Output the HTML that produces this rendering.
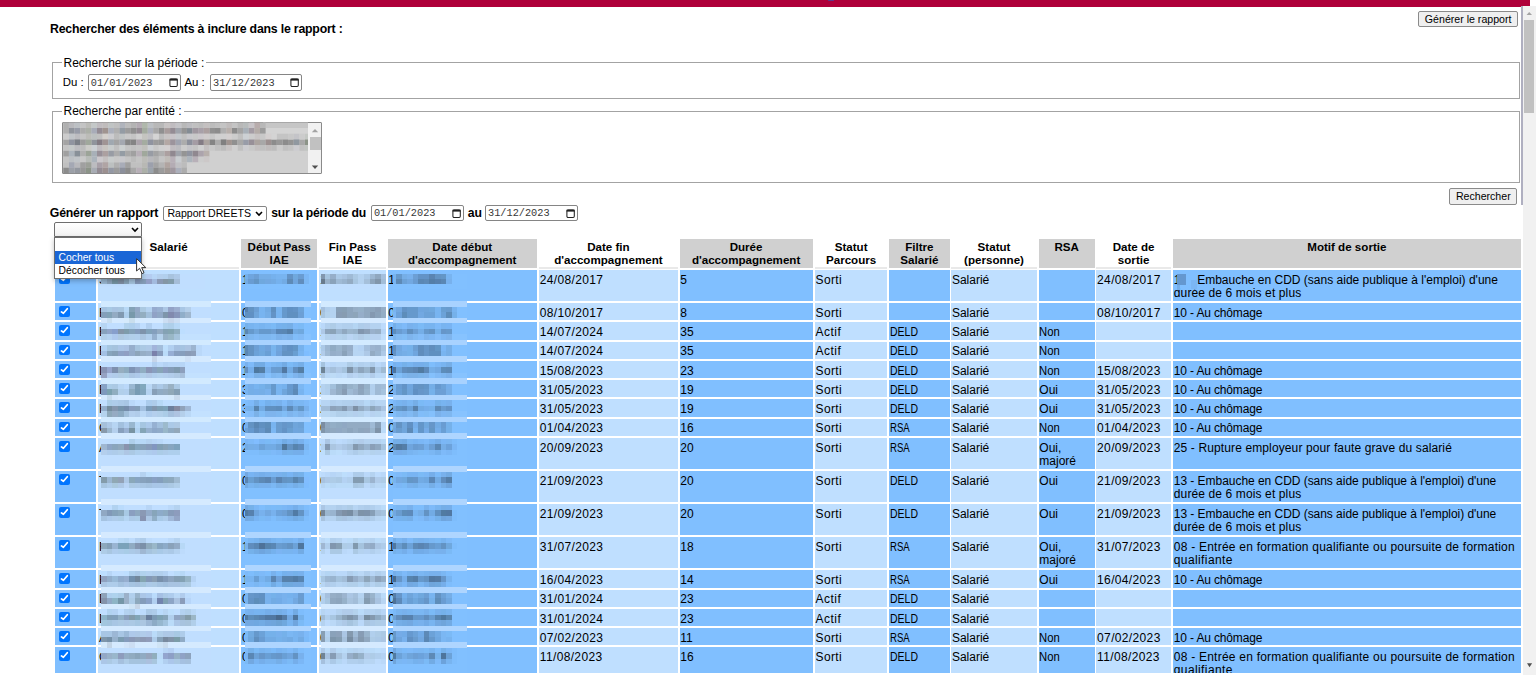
<!DOCTYPE html><html><head><meta charset="utf-8"><style>
html,body{margin:0;padding:0;background:#fff;width:1536px;height:675px;overflow:hidden;position:relative;font-family:"Liberation Sans",sans-serif;color:#000}
.ab{position:absolute}
.t{position:absolute;white-space:nowrap;font-size:12px;line-height:13.3px}
.th{position:absolute;font-weight:bold;font-size:11.6px;line-height:13.2px;text-align:center;white-space:nowrap}
.btn{position:absolute;box-sizing:border-box;background:#efefef;border:1px solid #8a8a8a;border-radius:2px;font-size:10.6px;color:#000;text-align:center}
.inp{position:absolute;box-sizing:border-box;background:#fff;border:1px solid #858585;border-radius:2px}
.mono{position:absolute;font-family:"Liberation Mono",monospace;font-size:10.27px;white-space:nowrap;color:#383838}
.fs{position:absolute;box-sizing:border-box;border:1.5px solid #a3a3a3;}
.lg{position:absolute;font-size:12px;white-space:nowrap;background:#fff;padding:0 2px}
.cb{position:absolute;width:10.7px;height:10.6px;background:#0075ff;border-radius:2px}
</style></head><body>
<div class="ab" style="left:0;top:0;width:1529.7px;height:6.6px;background:#af003a"></div>
<div class="ab" style="left:1522.8px;top:6px;width:13.2px;height:669px;background:#f1f1f1"></div>
<div class="ab" style="left:1521px;top:6.3px;width:2px;height:198.5px;background:#afafc0"></div>
<div class="ab" style="left:1524.2px;top:20px;width:10px;height:93px;background:#c1c1c1"></div>
<svg class="ab" style="left:1522px;top:6px" width="14" height="669"><path d="M4.6 8.9 L10 8.9 L7.2 6 Z" fill="#a3a3a3"/><path d="M5 657.3 L10.1 657.3 L7.5 661.2 Z" fill="#505050"/></svg>
<div class="ab" style="left:50px;top:21.7px;font-weight:bold;font-size:12.3px;letter-spacing:-0.2px;white-space:nowrap">Rechercher des éléments à inclure dans le rapport :</div>
<div class="btn" style="left:1418.3px;top:10.6px;width:99.7px;height:16.4px;line-height:14.4px">Générer le rapport</div>
<div class="fs" style="left:52px;top:62.3px;width:1468px;height:36.6px"></div>
<div class="lg" style="left:61.5px;top:56.3px;line-height:14px">Recherche sur la période :</div>
<div class="ab" style="left:62.8px;top:76px;font-size:11.4px;white-space:nowrap">Du :</div>
<div class="inp" style="left:87.5px;top:74.2px;width:93.8px;height:16.6px"></div>
<div class="ab" style="left:184.5px;top:76px;font-size:11.4px;white-space:nowrap">Au :</div>
<div class="inp" style="left:209.8px;top:74.3px;width:92.5px;height:16.3px"></div>
<div class="mono" style="left:90.8px;top:76.5px">01/01/2023</div>
<svg class="ab" style="left:168.5px;top:77.5px" width="10" height="10"><rect x="0.9" y="0.9" width="7.4" height="7.6" rx="1.2" fill="none" stroke="#222" stroke-width="1.05"/><rect x="0.6" y="0.6" width="8" height="2" fill="#222"/></svg>
<div class="mono" style="left:213px;top:76.5px">31/12/2023</div>
<svg class="ab" style="left:289.8px;top:77.5px" width="10" height="10"><rect x="0.9" y="0.9" width="7.4" height="7.6" rx="1.2" fill="none" stroke="#222" stroke-width="1.05"/><rect x="0.6" y="0.6" width="8" height="2" fill="#222"/></svg>
<div class="fs" style="left:52px;top:110.5px;width:1467.5px;height:72.5px"></div>
<div class="lg" style="left:61.5px;top:104.2px;line-height:14px">Recherche par entité :</div>
<div class="inp" style="left:62.3px;top:122.3px;width:260.2px;height:52px;background:#d0d0d0;border-color:#8a8a8a;border-radius:1px"></div>
<svg class="ab" style="left:0;top:0" width="400" height="200"><path fill="#c6c6c6" d="M263 122.4h45v5.68h-45z"/><path fill="#d4d4d4" d="M263 128.08h45v5.68h-45z"/><path fill="#b0b0b0" d="M63.3 122.4h5.62v5.68h-5.62zM63.3 128.1h5.62v5.68h-5.62zM113.9 128.1h5.62v5.68h-5.62zM220.7 128.1h5.62v5.68h-5.62zM80.2 150.8h5.62v5.68h-5.62zM158.8 150.8h5.62v5.68h-5.62zM113.9 162.2h5.62v5.68h-5.62z"/><path fill="#b8b8bc" d="M68.9 122.4h5.62v5.68h-5.62zM147.6 156.5h5.62v5.68h-5.62zM74.5 162.2h5.62v5.68h-5.62z"/><path fill="#bcc0c4" d="M74.5 122.4h5.62v5.68h-5.62zM147.6 122.4h5.62v5.68h-5.62zM68.9 156.5h5.62v5.68h-5.62z"/><path fill="#c4c4c4" d="M80.2 122.4h5.62v5.68h-5.62zM220.7 122.4h5.62v5.68h-5.62zM231.9 122.4h5.62v5.68h-5.62zM80.2 133.8h5.62v5.68h-5.62zM130.7 133.8h5.62v5.68h-5.62zM276.9 133.8h5.62v5.68h-5.62zM282.5 133.8h5.62v5.68h-5.62zM63.3 145.1h5.62v5.68h-5.62zM125.1 145.1h5.62v5.68h-5.62zM136.4 145.1h5.62v5.68h-5.62zM192.6 145.1h5.62v5.68h-5.62zM288.1 145.1h5.62v5.68h-5.62zM63.3 156.5h5.62v5.68h-5.62zM125.1 156.5h5.62v5.68h-5.62zM136.4 156.5h5.62v5.68h-5.62zM158.8 156.5h5.62v5.68h-5.62z"/><path fill="#bcbcb8" d="M85.8 122.4h5.62v5.68h-5.62zM85.8 133.8h5.62v5.68h-5.62zM142.0 156.5h5.62v5.68h-5.62z"/><path fill="#c4c8c8" d="M91.4 122.4h5.62v5.68h-5.62zM68.9 145.1h5.62v5.68h-5.62z"/><path fill="#c0bcc0" d="M97.0 122.4h5.62v5.68h-5.62zM170.1 122.4h5.62v5.68h-5.62zM97.0 145.1h5.62v5.68h-5.62zM170.1 145.1h5.62v5.68h-5.62z"/><path fill="#c0bcbc" d="M102.6 122.4h5.62v5.68h-5.62zM226.3 122.4h5.62v5.68h-5.62zM265.6 145.1h5.62v5.68h-5.62z"/><path fill="#c0c4c4" d="M108.3 122.4h5.62v5.68h-5.62zM119.5 133.8h5.62v5.68h-5.62z"/><path fill="#c0c0c0" d="M113.9 122.4h5.62v5.68h-5.62zM192.6 122.4h5.62v5.68h-5.62zM215.0 122.4h5.62v5.68h-5.62zM97.0 133.8h5.62v5.68h-5.62zM181.3 133.8h5.62v5.68h-5.62zM237.5 133.8h5.62v5.68h-5.62zM113.9 145.1h5.62v5.68h-5.62zM130.7 145.1h5.62v5.68h-5.62zM215.0 145.1h5.62v5.68h-5.62zM237.5 145.1h5.62v5.68h-5.62zM260.0 145.1h5.62v5.68h-5.62zM282.5 145.1h5.62v5.68h-5.62zM299.3 145.1h5.62v5.68h-5.62zM63.3 162.2h5.62v5.68h-5.62zM130.7 162.2h5.62v5.68h-5.62zM136.4 162.2h5.62v5.68h-5.62z"/><path fill="#b0b4bc" d="M119.5 122.4h5.62v5.68h-5.62z"/><path fill="#bcbcbc" d="M125.1 122.4h5.62v5.68h-5.62zM198.2 122.4h5.62v5.68h-5.62zM209.4 122.4h5.62v5.68h-5.62zM113.9 133.8h5.62v5.68h-5.62zM158.8 133.8h5.62v5.68h-5.62zM80.2 145.1h5.62v5.68h-5.62zM220.7 145.1h5.62v5.68h-5.62zM271.2 145.1h5.62v5.68h-5.62zM130.7 156.5h5.62v5.68h-5.62zM181.3 162.2h5.62v5.68h-5.62z"/><path fill="#b4b4b4" d="M130.7 122.4h5.62v5.68h-5.62zM153.2 156.5h5.62v5.68h-5.62zM158.8 162.2h5.62v5.68h-5.62z"/><path fill="#b4acb4" d="M136.4 122.4h5.62v5.68h-5.62zM170.1 162.2h5.62v5.68h-5.62z"/><path fill="#b0b8ac" d="M142.0 122.4h5.62v5.68h-5.62z"/><path fill="#b8b8b8" d="M153.2 122.4h5.62v5.68h-5.62zM158.8 122.4h5.62v5.68h-5.62zM181.3 122.4h5.62v5.68h-5.62zM237.5 122.4h5.62v5.68h-5.62zM260.0 122.4h5.62v5.68h-5.62zM181.3 156.5h5.62v5.68h-5.62z"/><path fill="#c8c4c4" d="M164.5 122.4h5.62v5.68h-5.62zM164.5 133.8h5.62v5.68h-5.62zM254.4 133.8h5.62v5.68h-5.62zM226.3 145.1h5.62v5.68h-5.62z"/><path fill="#c4c4c8" d="M175.7 122.4h5.62v5.68h-5.62zM293.7 133.8h5.62v5.68h-5.62zM186.9 145.1h5.62v5.68h-5.62z"/><path fill="#bcbcc0" d="M186.9 122.4h5.62v5.68h-5.62zM74.5 133.8h5.62v5.68h-5.62zM74.5 145.1h5.62v5.68h-5.62zM175.7 145.1h5.62v5.68h-5.62zM91.4 162.2h5.62v5.68h-5.62z"/><path fill="#c4c0c0" d="M203.8 122.4h5.62v5.68h-5.62zM203.8 145.1h5.62v5.68h-5.62zM254.4 145.1h5.62v5.68h-5.62zM102.6 156.5h5.62v5.68h-5.62z"/><path fill="#b8bcbc" d="M243.1 122.4h5.62v5.68h-5.62z"/><path fill="#c8c4c8" d="M248.8 122.4h5.62v5.68h-5.62zM170.1 133.8h5.62v5.68h-5.62z"/><path fill="#b8acac" d="M254.4 122.4h5.62v5.68h-5.62z"/><path fill="#90949c" d="M68.9 128.1h5.62v5.68h-5.62zM91.4 139.4h5.62v5.68h-5.62z"/><path fill="#989ca8" d="M74.5 128.1h5.62v5.68h-5.62zM243.1 139.4h5.62v5.68h-5.62z"/><path fill="#acacac" d="M80.2 128.1h5.62v5.68h-5.62zM181.3 139.4h5.62v5.68h-5.62zM215.0 139.4h5.62v5.68h-5.62zM113.9 150.8h5.62v5.68h-5.62zM181.3 167.8h5.62v5.36h-5.62z"/><path fill="#acb0a8" d="M85.8 128.1h5.62v5.68h-5.62zM142.0 167.8h5.62v5.36h-5.62z"/><path fill="#a8acb8" d="M91.4 128.1h5.62v5.68h-5.62zM119.5 162.2h5.62v5.68h-5.62z"/><path fill="#948c94" d="M97.0 128.1h5.62v5.68h-5.62zM136.4 128.1h5.62v5.68h-5.62zM170.1 128.1h5.62v5.68h-5.62zM97.0 167.8h5.62v5.36h-5.62z"/><path fill="#a09490" d="M102.6 128.1h5.62v5.68h-5.62zM226.3 139.4h5.62v5.68h-5.62z"/><path fill="#acb0bc" d="M108.3 128.1h5.62v5.68h-5.62zM147.6 128.1h5.62v5.68h-5.62zM175.7 167.8h5.62v5.36h-5.62z"/><path fill="#949ca4" d="M119.5 128.1h5.62v5.68h-5.62zM119.5 150.8h5.62v5.68h-5.62z"/><path fill="#9c9c9c" d="M125.1 128.1h5.62v5.68h-5.62zM260.0 128.1h5.62v5.68h-5.62zM80.2 139.4h5.62v5.68h-5.62zM153.2 139.4h5.62v5.68h-5.62zM113.9 167.8h5.62v5.36h-5.62zM158.8 167.8h5.62v5.36h-5.62z"/><path fill="#909090" d="M130.7 128.1h5.62v5.68h-5.62zM158.8 128.1h5.62v5.68h-5.62zM209.4 128.1h5.62v5.68h-5.62zM231.9 139.4h5.62v5.68h-5.62z"/><path fill="#a4aca0" d="M142.0 128.1h5.62v5.68h-5.62zM142.0 139.4h5.62v5.68h-5.62z"/><path fill="#a8a8a8" d="M153.2 128.1h5.62v5.68h-5.62zM237.5 139.4h5.62v5.68h-5.62zM260.0 139.4h5.62v5.68h-5.62zM299.3 139.4h5.62v5.68h-5.62zM125.1 150.8h5.62v5.68h-5.62zM130.7 167.8h5.62v5.36h-5.62z"/><path fill="#a89c9c" d="M164.5 128.1h5.62v5.68h-5.62z"/><path fill="#a0a4ac" d="M175.7 128.1h5.62v5.68h-5.62zM175.7 150.8h5.62v5.68h-5.62z"/><path fill="#949494" d="M181.3 128.1h5.62v5.68h-5.62zM288.1 139.4h5.62v5.68h-5.62zM181.3 150.8h5.62v5.68h-5.62z"/><path fill="#848c94" d="M186.9 128.1h5.62v5.68h-5.62z"/><path fill="#a098a0" d="M192.6 128.1h5.62v5.68h-5.62zM170.1 167.8h5.62v5.36h-5.62z"/><path fill="#a8a0a8" d="M198.2 128.1h5.62v5.68h-5.62zM97.0 162.2h5.62v5.68h-5.62z"/><path fill="#aca0a0" d="M203.8 128.1h5.62v5.68h-5.62zM102.6 150.8h5.62v5.68h-5.62zM164.5 150.8h5.62v5.68h-5.62z"/><path fill="#8c8c8c" d="M215.0 128.1h5.62v5.68h-5.62zM231.9 128.1h5.62v5.68h-5.62zM271.2 139.4h5.62v5.68h-5.62zM282.5 139.4h5.62v5.68h-5.62zM63.3 167.8h5.62v5.36h-5.62zM125.1 167.8h5.62v5.36h-5.62zM153.2 167.8h5.62v5.36h-5.62z"/><path fill="#b8b0ac" d="M226.3 128.1h5.62v5.68h-5.62zM203.8 150.8h5.62v5.68h-5.62z"/><path fill="#a4a4a4" d="M237.5 128.1h5.62v5.68h-5.62zM63.3 139.4h5.62v5.68h-5.62zM113.9 139.4h5.62v5.68h-5.62zM153.2 150.8h5.62v5.68h-5.62zM153.2 162.2h5.62v5.68h-5.62z"/><path fill="#a8b0b8" d="M243.1 128.1h5.62v5.68h-5.62zM91.4 150.8h5.62v5.68h-5.62z"/><path fill="#a49ca4" d="M248.8 128.1h5.62v5.68h-5.62zM192.6 139.4h5.62v5.68h-5.62z"/><path fill="#b4aca8" d="M254.4 128.1h5.62v5.68h-5.62z"/><path fill="#cccccc" d="M63.3 133.8h5.62v5.68h-5.62zM231.9 133.8h5.62v5.68h-5.62zM248.8 133.8h5.62v5.68h-5.62zM299.3 133.8h5.62v5.68h-5.62zM181.3 145.1h5.62v5.68h-5.62zM276.9 145.1h5.62v5.68h-5.62zM198.2 156.5h5.62v5.68h-5.62z"/><path fill="#c0c4c8" d="M68.9 133.8h5.62v5.68h-5.62zM74.5 156.5h5.62v5.68h-5.62z"/><path fill="#bcc0c0" d="M91.4 133.8h5.62v5.68h-5.62zM108.3 162.2h5.62v5.68h-5.62z"/><path fill="#d4d0cc" d="M102.6 133.8h5.62v5.68h-5.62z"/><path fill="#ccccd0" d="M108.3 133.8h5.62v5.68h-5.62zM243.1 145.1h5.62v5.68h-5.62zM293.7 145.1h5.62v5.68h-5.62z"/><path fill="#c8c8c8" d="M125.1 133.8h5.62v5.68h-5.62zM192.6 133.8h5.62v5.68h-5.62zM209.4 133.8h5.62v5.68h-5.62zM260.0 133.8h5.62v5.68h-5.62zM288.1 133.8h5.62v5.68h-5.62zM153.2 145.1h5.62v5.68h-5.62zM209.4 145.1h5.62v5.68h-5.62zM248.8 145.1h5.62v5.68h-5.62zM80.2 156.5h5.62v5.68h-5.62zM113.9 156.5h5.62v5.68h-5.62z"/><path fill="#d0d0d0" d="M136.4 133.8h5.62v5.68h-5.62zM215.0 133.8h5.62v5.68h-5.62zM220.7 133.8h5.62v5.68h-5.62zM158.8 145.1h5.62v5.68h-5.62zM198.2 145.1h5.62v5.68h-5.62zM231.9 145.1h5.62v5.68h-5.62z"/><path fill="#c4c4c0" d="M142.0 133.8h5.62v5.68h-5.62z"/><path fill="#c0c0c4" d="M147.6 133.8h5.62v5.68h-5.62zM175.7 162.2h5.62v5.68h-5.62z"/><path fill="#d4d4d4" d="M153.2 133.8h5.62v5.68h-5.62zM271.2 133.8h5.62v5.68h-5.62z"/><path fill="#c4c8cc" d="M175.7 133.8h5.62v5.68h-5.62z"/><path fill="#c8c8cc" d="M186.9 133.8h5.62v5.68h-5.62zM119.5 156.5h5.62v5.68h-5.62z"/><path fill="#ccc8cc" d="M198.2 133.8h5.62v5.68h-5.62zM97.0 156.5h5.62v5.68h-5.62z"/><path fill="#d0cccc" d="M203.8 133.8h5.62v5.68h-5.62z"/><path fill="#d4d0d0" d="M226.3 133.8h5.62v5.68h-5.62zM265.6 133.8h5.62v5.68h-5.62zM164.5 145.1h5.62v5.68h-5.62z"/><path fill="#ccd0d4" d="M243.1 133.8h5.62v5.68h-5.62zM91.4 145.1h5.62v5.68h-5.62zM147.6 145.1h5.62v5.68h-5.62z"/><path fill="#c4c8c4" d="M305.0 133.8h3.04v5.68h-3.04z"/><path fill="#9094a0" d="M68.9 139.4h5.62v5.68h-5.62zM147.6 139.4h5.62v5.68h-5.62zM186.9 150.8h5.62v5.68h-5.62z"/><path fill="#7c8088" d="M74.5 139.4h5.62v5.68h-5.62z"/><path fill="#a0a89c" d="M85.8 139.4h5.62v5.68h-5.62zM142.0 150.8h5.62v5.68h-5.62z"/><path fill="#847c84" d="M97.0 139.4h5.62v5.68h-5.62zM198.2 139.4h5.62v5.68h-5.62z"/><path fill="#a09494" d="M102.6 139.4h5.62v5.68h-5.62z"/><path fill="#a0a8b0" d="M108.3 139.4h5.62v5.68h-5.62z"/><path fill="#a4a8b0" d="M119.5 139.4h5.62v5.68h-5.62z"/><path fill="#888888" d="M125.1 139.4h5.62v5.68h-5.62z"/><path fill="#848484" d="M130.7 139.4h5.62v5.68h-5.62zM209.4 139.4h5.62v5.68h-5.62z"/><path fill="#aca4ac" d="M136.4 139.4h5.62v5.68h-5.62zM198.2 150.8h5.62v5.68h-5.62z"/><path fill="#989898" d="M158.8 139.4h5.62v5.68h-5.62zM276.9 139.4h5.62v5.68h-5.62zM80.2 167.8h5.62v5.36h-5.62z"/><path fill="#b4a8a4" d="M164.5 139.4h5.62v5.68h-5.62z"/><path fill="#9c949c" d="M170.1 139.4h5.62v5.68h-5.62z"/><path fill="#a0a4b0" d="M175.7 139.4h5.62v5.68h-5.62z"/><path fill="#8c909c" d="M186.9 139.4h5.62v5.68h-5.62zM119.5 167.8h5.62v5.36h-5.62z"/><path fill="#aca4a0" d="M203.8 139.4h5.62v5.68h-5.62zM254.4 139.4h5.62v5.68h-5.62z"/><path fill="#808080" d="M220.7 139.4h5.62v5.68h-5.62z"/><path fill="#989098" d="M248.8 139.4h5.62v5.68h-5.62zM97.0 150.8h5.62v5.68h-5.62z"/><path fill="#9c9090" d="M265.6 139.4h5.62v5.68h-5.62zM102.6 167.8h5.62v5.36h-5.62z"/><path fill="#9098a0" d="M293.7 139.4h5.62v5.68h-5.62z"/><path fill="#8c9488" d="M305.0 139.4h3.04v5.68h-3.04zM85.8 167.8h5.62v5.36h-5.62z"/><path fill="#ccccc8" d="M85.8 145.1h5.62v5.68h-5.62z"/><path fill="#c8c4c0" d="M102.6 145.1h5.62v5.68h-5.62z"/><path fill="#c8cccc" d="M108.3 145.1h5.62v5.68h-5.62zM108.3 156.5h5.62v5.68h-5.62z"/><path fill="#ccd0d0" d="M119.5 145.1h5.62v5.68h-5.62z"/><path fill="#c0c0bc" d="M142.0 145.1h5.62v5.68h-5.62z"/><path fill="#c0c4c0" d="M305.0 145.1h3.04v5.68h-3.04z"/><path fill="#a0a0a0" d="M63.3 150.8h5.62v5.68h-5.62zM130.7 150.8h5.62v5.68h-5.62zM80.2 162.2h5.62v5.68h-5.62zM125.1 162.2h5.62v5.68h-5.62z"/><path fill="#acb4bc" d="M68.9 150.8h5.62v5.68h-5.62zM91.4 156.5h5.62v5.68h-5.62zM186.9 156.5h5.62v5.68h-5.62z"/><path fill="#889098" d="M74.5 150.8h5.62v5.68h-5.62z"/><path fill="#9ca498" d="M85.8 150.8h5.62v5.68h-5.62z"/><path fill="#989ca4" d="M108.3 150.8h5.62v5.68h-5.62zM147.6 150.8h5.62v5.68h-5.62z"/><path fill="#b8b0b8" d="M136.4 150.8h5.62v5.68h-5.62zM170.1 156.5h5.62v5.68h-5.62zM192.6 156.5h5.62v5.68h-5.62zM136.4 167.8h5.62v5.36h-5.62z"/><path fill="#908890" d="M170.1 150.8h5.62v5.68h-5.62zM192.6 150.8h5.62v5.68h-5.62z"/><path fill="#b8bcb8" d="M85.8 156.5h5.62v5.68h-5.62z"/><path fill="#c0bcb8" d="M164.5 156.5h5.62v5.68h-5.62z"/><path fill="#c8ccd0" d="M175.7 156.5h5.62v5.68h-5.62z"/><path fill="#ccc8c8" d="M203.8 156.5h5.62v5.68h-5.62z"/><path fill="#a4a8b4" d="M68.9 162.2h5.62v5.68h-5.62z"/><path fill="#9ca098" d="M85.8 162.2h5.62v5.68h-5.62z"/><path fill="#b0a4a4" d="M102.6 162.2h5.62v5.68h-5.62z"/><path fill="#b8b8b4" d="M142.0 162.2h5.62v5.68h-5.62z"/><path fill="#9ca0ac" d="M147.6 162.2h5.62v5.68h-5.62z"/><path fill="#b0a4a0" d="M164.5 162.2h5.62v5.68h-5.62z"/><path fill="#9ca0a8" d="M68.9 167.8h5.62v5.36h-5.62z"/><path fill="#9498a0" d="M74.5 167.8h5.62v5.36h-5.62z"/><path fill="#a8acb4" d="M91.4 167.8h5.62v5.36h-5.62z"/><path fill="#9498a4" d="M108.3 167.8h5.62v5.36h-5.62z"/><path fill="#9ca4ac" d="M147.6 167.8h5.62v5.36h-5.62z"/><path fill="#a09894" d="M164.5 167.8h5.62v5.36h-5.62z"/></svg>
<div class="ab" style="left:308px;top:123.3px;width:13.4px;height:49.9px;background:#f1f1f1"></div>
<div class="ab" style="left:310px;top:136.7px;width:10.6px;height:13px;background:#c1c1c1"></div>
<svg class="ab" style="left:308px;top:123px" width="14" height="51"><path d="M3.8 9.3 L10.2 9.3 L7 6 Z" fill="#a3a3a3"/><path d="M3.8 42.5 L10.2 42.5 L7 46 Z" fill="#505050"/></svg>
<div class="btn" style="left:1449.4px;top:188.3px;width:67.8px;height:16.4px;line-height:14.4px">Rechercher</div>
<div class="ab" style="left:49.8px;top:205.8px;font-weight:bold;font-size:12.3px;letter-spacing:-0.2px;white-space:nowrap">Générer un rapport</div>
<div class="inp" style="left:163.2px;top:205.7px;width:104px;height:15.1px"></div>
<div class="ab" style="left:167.4px;top:207.2px;font-size:10.6px;white-space:nowrap">Rapport DREETS</div>
<svg class="ab" style="left:255px;top:210.5px" width="8" height="6"><path d="M1 1 L4 4 L7 1" fill="none" stroke="#000" stroke-width="1.6"/></svg>
<div class="ab" style="left:271.2px;top:205.8px;font-weight:bold;font-size:12.2px;letter-spacing:-0.2px;white-space:nowrap">sur la période du</div>
<div class="inp" style="left:371.4px;top:205.2px;width:92.5px;height:16px"></div>
<div class="mono" style="left:373.9px;top:207.3px">01/01/2023</div>
<svg class="ab" style="left:451.6px;top:208.5px" width="10" height="10"><rect x="0.9" y="0.9" width="7.4" height="7.6" rx="1.2" fill="none" stroke="#222" stroke-width="1.05"/><rect x="0.6" y="0.6" width="8" height="2" fill="#222"/></svg>
<div class="ab" style="left:467.8px;top:205.8px;font-weight:bold;font-size:12.2px;white-space:nowrap">au</div>
<div class="inp" style="left:485.3px;top:205.2px;width:93.2px;height:16px"></div>
<div class="mono" style="left:488px;top:207.3px">31/12/2023</div>
<svg class="ab" style="left:565.6px;top:208.5px" width="10" height="10"><rect x="0.9" y="0.9" width="7.4" height="7.6" rx="1.2" fill="none" stroke="#222" stroke-width="1.05"/><rect x="0.6" y="0.6" width="8" height="2" fill="#222"/></svg>
<div class="ab" style="left:55px;top:238.7px;width:41.30px;height:29.00px;background:#d0d0d0"></div>
<div class="ab" style="left:98.2px;top:238.7px;width:140.90px;height:29.00px;background:#fff"></div>
<div class="th" style="left:98.2px;top:239.9px;width:140.90px">Salarié</div>
<div class="ab" style="left:241.1px;top:238.7px;width:76.00px;height:29.00px;background:#d0d0d0"></div>
<div class="th" style="left:241.1px;top:239.9px;width:76.00px">Début Pass<br>IAE</div>
<div class="ab" style="left:319.2px;top:238.7px;width:66.70px;height:29.00px;background:#fff"></div>
<div class="th" style="left:319.2px;top:239.9px;width:66.70px">Fin Pass<br>IAE</div>
<div class="ab" style="left:387.5px;top:238.7px;width:149.50px;height:29.00px;background:#d0d0d0"></div>
<div class="th" style="left:387.5px;top:239.9px;width:149.50px">Date début<br>d'accompagnement</div>
<div class="ab" style="left:539px;top:238.7px;width:138.80px;height:29.00px;background:#fff"></div>
<div class="th" style="left:539px;top:239.9px;width:138.80px">Date fin<br>d'accompagnement</div>
<div class="ab" style="left:679.5px;top:238.7px;width:133.20px;height:29.00px;background:#d0d0d0"></div>
<div class="th" style="left:679.5px;top:239.9px;width:133.20px">Durée<br>d'accompagnement</div>
<div class="ab" style="left:814.8px;top:238.7px;width:72.60px;height:29.00px;background:#fff"></div>
<div class="th" style="left:814.8px;top:239.9px;width:72.60px">Statut<br>Parcours</div>
<div class="ab" style="left:889.2px;top:238.7px;width:60.40px;height:29.00px;background:#d0d0d0"></div>
<div class="th" style="left:889.2px;top:239.9px;width:60.40px">Filtre<br>Salarié</div>
<div class="ab" style="left:951.1px;top:238.7px;width:85.90px;height:29.00px;background:#fff"></div>
<div class="th" style="left:951.1px;top:239.9px;width:85.90px">Statut<br>(personne)</div>
<div class="ab" style="left:1038.5px;top:238.7px;width:56.30px;height:29.00px;background:#d0d0d0"></div>
<div class="th" style="left:1038.5px;top:239.9px;width:56.30px">RSA</div>
<div class="ab" style="left:1096.3px;top:238.7px;width:74.70px;height:29.00px;background:#fff"></div>
<div class="th" style="left:1096.3px;top:239.9px;width:74.70px">Date de<br>sortie</div>
<div class="ab" style="left:1173px;top:238.7px;width:347.70px;height:29.00px;background:#d0d0d0"></div>
<div class="th" style="left:1173px;top:239.9px;width:347.70px">Motif de sortie</div>
<div class="ab" style="left:98.2px;top:266.9px;width:140.90px;height:1.9px;background:#e9e9e9"></div>
<div class="ab" style="left:319.2px;top:266.9px;width:66.70px;height:1.9px;background:#e9e9e9"></div>
<div class="ab" style="left:539px;top:266.9px;width:138.80px;height:1.9px;background:#e9e9e9"></div>
<div class="ab" style="left:814.8px;top:266.9px;width:72.60px;height:1.9px;background:#e9e9e9"></div>
<div class="ab" style="left:951.1px;top:266.9px;width:85.90px;height:1.9px;background:#e9e9e9"></div>
<div class="ab" style="left:1096.3px;top:266.9px;width:74.70px;height:1.9px;background:#e9e9e9"></div>
<div class="ab" style="left:55px;top:270.00px;width:41.30px;height:31.10px;background:#80bfff"></div>
<div class="ab" style="left:98.2px;top:270.00px;width:140.90px;height:31.10px;background:#bfdfff"></div>
<div class="ab" style="left:241.1px;top:270.00px;width:76.00px;height:31.10px;background:#80bfff"></div>
<div class="ab" style="left:319.2px;top:270.00px;width:66.70px;height:31.10px;background:#bfdfff"></div>
<div class="ab" style="left:387.5px;top:270.00px;width:149.50px;height:31.10px;background:#80bfff"></div>
<div class="ab" style="left:539px;top:270.00px;width:138.80px;height:31.10px;background:#bfdfff"></div>
<div class="ab" style="left:679.5px;top:270.00px;width:133.20px;height:31.10px;background:#80bfff"></div>
<div class="ab" style="left:814.8px;top:270.00px;width:72.60px;height:31.10px;background:#bfdfff"></div>
<div class="ab" style="left:889.2px;top:270.00px;width:60.40px;height:31.10px;background:#80bfff"></div>
<div class="ab" style="left:951.1px;top:270.00px;width:85.90px;height:31.10px;background:#bfdfff"></div>
<div class="ab" style="left:1038.5px;top:270.00px;width:56.30px;height:31.10px;background:#80bfff"></div>
<div class="ab" style="left:1096.3px;top:270.00px;width:74.70px;height:31.10px;background:#bfdfff"></div>
<div class="ab" style="left:1173px;top:270.00px;width:347.70px;height:31.10px;background:#80bfff"></div>
<div class="cb" style="left:59.3px;top:273.10px"><svg width="11" height="11" style="position:absolute;left:0;top:0"><path d="M2.4 5.9 L4.4 7.3 L8.3 2.7" fill="none" stroke="#fff" stroke-width="1.7" stroke-linecap="round" stroke-linejoin="round"/></svg></div>
<div class="t" style="left:539.8px;top:273.80px;letter-spacing:0.35px">24/08/2017</div>
<div class="t" style="left:680.3px;top:273.80px">5</div>
<div class="t" style="left:815.6px;top:273.80px;letter-spacing:0.35px">Sorti</div>
<div class="t" style="left:951.9px;top:273.80px">Salarié</div>
<div class="t" style="left:1097.1px;top:273.80px;letter-spacing:0.35px">24/08/2017</div>
<div class="t" style="left:1173.8px;top:273.80px"><span style="letter-spacing:0px">1&nbsp;&nbsp;&nbsp;&nbsp; Embauche en CDD (sans aide publique à l'emploi) d'une</span><br><span style="letter-spacing:0.12px">durée de 6 mois et plus</span></div>
<div class="t" style="left:99.0px;top:273.80px">S</div>
<div class="t" style="left:241.9px;top:273.80px">1</div>
<div class="t" style="left:320.0px;top:273.80px">1</div>
<div class="t" style="left:388.3px;top:273.80px">1</div>
<div class="ab" style="left:55px;top:303.10px;width:41.30px;height:17.25px;background:#80bfff"></div>
<div class="ab" style="left:98.2px;top:303.10px;width:140.90px;height:17.25px;background:#bfdfff"></div>
<div class="ab" style="left:241.1px;top:303.10px;width:76.00px;height:17.25px;background:#80bfff"></div>
<div class="ab" style="left:319.2px;top:303.10px;width:66.70px;height:17.25px;background:#bfdfff"></div>
<div class="ab" style="left:387.5px;top:303.10px;width:149.50px;height:17.25px;background:#80bfff"></div>
<div class="ab" style="left:539px;top:303.10px;width:138.80px;height:17.25px;background:#bfdfff"></div>
<div class="ab" style="left:679.5px;top:303.10px;width:133.20px;height:17.25px;background:#80bfff"></div>
<div class="ab" style="left:814.8px;top:303.10px;width:72.60px;height:17.25px;background:#bfdfff"></div>
<div class="ab" style="left:889.2px;top:303.10px;width:60.40px;height:17.25px;background:#80bfff"></div>
<div class="ab" style="left:951.1px;top:303.10px;width:85.90px;height:17.25px;background:#bfdfff"></div>
<div class="ab" style="left:1038.5px;top:303.10px;width:56.30px;height:17.25px;background:#80bfff"></div>
<div class="ab" style="left:1096.3px;top:303.10px;width:74.70px;height:17.25px;background:#bfdfff"></div>
<div class="ab" style="left:1173px;top:303.10px;width:347.70px;height:17.25px;background:#80bfff"></div>
<div class="cb" style="left:59.3px;top:306.20px"><svg width="11" height="11" style="position:absolute;left:0;top:0"><path d="M2.4 5.9 L4.4 7.3 L8.3 2.7" fill="none" stroke="#fff" stroke-width="1.7" stroke-linecap="round" stroke-linejoin="round"/></svg></div>
<div class="t" style="left:539.8px;top:306.90px;letter-spacing:0.35px">08/10/2017</div>
<div class="t" style="left:680.3px;top:306.90px">8</div>
<div class="t" style="left:815.6px;top:306.90px;letter-spacing:0.35px">Sorti</div>
<div class="t" style="left:951.9px;top:306.90px">Salarié</div>
<div class="t" style="left:1097.1px;top:306.90px;letter-spacing:0.35px">08/10/2017</div>
<div class="t" style="left:1173.8px;top:306.90px;letter-spacing:-0.15px">10 - Au chômage</div>
<div class="t" style="left:99.0px;top:306.90px">F</div>
<div class="t" style="left:241.9px;top:306.90px">0</div>
<div class="t" style="left:320.0px;top:306.90px">0</div>
<div class="t" style="left:388.3px;top:306.90px">0</div>
<div class="ab" style="left:55px;top:322.35px;width:41.30px;height:17.25px;background:#80bfff"></div>
<div class="ab" style="left:98.2px;top:322.35px;width:140.90px;height:17.25px;background:#bfdfff"></div>
<div class="ab" style="left:241.1px;top:322.35px;width:76.00px;height:17.25px;background:#80bfff"></div>
<div class="ab" style="left:319.2px;top:322.35px;width:66.70px;height:17.25px;background:#bfdfff"></div>
<div class="ab" style="left:387.5px;top:322.35px;width:149.50px;height:17.25px;background:#80bfff"></div>
<div class="ab" style="left:539px;top:322.35px;width:138.80px;height:17.25px;background:#bfdfff"></div>
<div class="ab" style="left:679.5px;top:322.35px;width:133.20px;height:17.25px;background:#80bfff"></div>
<div class="ab" style="left:814.8px;top:322.35px;width:72.60px;height:17.25px;background:#bfdfff"></div>
<div class="ab" style="left:889.2px;top:322.35px;width:60.40px;height:17.25px;background:#80bfff"></div>
<div class="ab" style="left:951.1px;top:322.35px;width:85.90px;height:17.25px;background:#bfdfff"></div>
<div class="ab" style="left:1038.5px;top:322.35px;width:56.30px;height:17.25px;background:#80bfff"></div>
<div class="ab" style="left:1096.3px;top:322.35px;width:74.70px;height:17.25px;background:#bfdfff"></div>
<div class="ab" style="left:1173px;top:322.35px;width:347.70px;height:17.25px;background:#80bfff"></div>
<div class="cb" style="left:59.3px;top:325.45px"><svg width="11" height="11" style="position:absolute;left:0;top:0"><path d="M2.4 5.9 L4.4 7.3 L8.3 2.7" fill="none" stroke="#fff" stroke-width="1.7" stroke-linecap="round" stroke-linejoin="round"/></svg></div>
<div class="t" style="left:539.8px;top:326.15px;letter-spacing:0.35px">14/07/2024</div>
<div class="t" style="left:680.3px;top:326.15px">35</div>
<div class="t" style="left:815.6px;top:326.15px;letter-spacing:0.45px">Actif</div>
<div class="t" style="left:890.0px;top:326.15px;transform:scaleX(0.873);transform-origin:0 0">DELD</div>
<div class="t" style="left:951.9px;top:326.15px">Salarié</div>
<div class="t" style="left:1039.3px;top:326.15px;transform:scaleX(0.94);transform-origin:0 0">Non</div>
<div class="t" style="left:99.0px;top:326.15px">B</div>
<div class="t" style="left:241.9px;top:326.15px">1</div>
<div class="t" style="left:320.0px;top:326.15px">1</div>
<div class="t" style="left:388.3px;top:326.15px">1</div>
<div class="ab" style="left:55px;top:341.60px;width:41.30px;height:17.25px;background:#80bfff"></div>
<div class="ab" style="left:98.2px;top:341.60px;width:140.90px;height:17.25px;background:#bfdfff"></div>
<div class="ab" style="left:241.1px;top:341.60px;width:76.00px;height:17.25px;background:#80bfff"></div>
<div class="ab" style="left:319.2px;top:341.60px;width:66.70px;height:17.25px;background:#bfdfff"></div>
<div class="ab" style="left:387.5px;top:341.60px;width:149.50px;height:17.25px;background:#80bfff"></div>
<div class="ab" style="left:539px;top:341.60px;width:138.80px;height:17.25px;background:#bfdfff"></div>
<div class="ab" style="left:679.5px;top:341.60px;width:133.20px;height:17.25px;background:#80bfff"></div>
<div class="ab" style="left:814.8px;top:341.60px;width:72.60px;height:17.25px;background:#bfdfff"></div>
<div class="ab" style="left:889.2px;top:341.60px;width:60.40px;height:17.25px;background:#80bfff"></div>
<div class="ab" style="left:951.1px;top:341.60px;width:85.90px;height:17.25px;background:#bfdfff"></div>
<div class="ab" style="left:1038.5px;top:341.60px;width:56.30px;height:17.25px;background:#80bfff"></div>
<div class="ab" style="left:1096.3px;top:341.60px;width:74.70px;height:17.25px;background:#bfdfff"></div>
<div class="ab" style="left:1173px;top:341.60px;width:347.70px;height:17.25px;background:#80bfff"></div>
<div class="cb" style="left:59.3px;top:344.70px"><svg width="11" height="11" style="position:absolute;left:0;top:0"><path d="M2.4 5.9 L4.4 7.3 L8.3 2.7" fill="none" stroke="#fff" stroke-width="1.7" stroke-linecap="round" stroke-linejoin="round"/></svg></div>
<div class="t" style="left:539.8px;top:345.40px;letter-spacing:0.35px">14/07/2024</div>
<div class="t" style="left:680.3px;top:345.40px">35</div>
<div class="t" style="left:815.6px;top:345.40px;letter-spacing:0.45px">Actif</div>
<div class="t" style="left:890.0px;top:345.40px;transform:scaleX(0.873);transform-origin:0 0">DELD</div>
<div class="t" style="left:951.9px;top:345.40px">Salarié</div>
<div class="t" style="left:1039.3px;top:345.40px;transform:scaleX(0.94);transform-origin:0 0">Non</div>
<div class="t" style="left:99.0px;top:345.40px">B</div>
<div class="t" style="left:241.9px;top:345.40px">1</div>
<div class="t" style="left:320.0px;top:345.40px">1</div>
<div class="t" style="left:388.3px;top:345.40px">1</div>
<div class="ab" style="left:55px;top:360.85px;width:41.30px;height:17.25px;background:#80bfff"></div>
<div class="ab" style="left:98.2px;top:360.85px;width:140.90px;height:17.25px;background:#bfdfff"></div>
<div class="ab" style="left:241.1px;top:360.85px;width:76.00px;height:17.25px;background:#80bfff"></div>
<div class="ab" style="left:319.2px;top:360.85px;width:66.70px;height:17.25px;background:#bfdfff"></div>
<div class="ab" style="left:387.5px;top:360.85px;width:149.50px;height:17.25px;background:#80bfff"></div>
<div class="ab" style="left:539px;top:360.85px;width:138.80px;height:17.25px;background:#bfdfff"></div>
<div class="ab" style="left:679.5px;top:360.85px;width:133.20px;height:17.25px;background:#80bfff"></div>
<div class="ab" style="left:814.8px;top:360.85px;width:72.60px;height:17.25px;background:#bfdfff"></div>
<div class="ab" style="left:889.2px;top:360.85px;width:60.40px;height:17.25px;background:#80bfff"></div>
<div class="ab" style="left:951.1px;top:360.85px;width:85.90px;height:17.25px;background:#bfdfff"></div>
<div class="ab" style="left:1038.5px;top:360.85px;width:56.30px;height:17.25px;background:#80bfff"></div>
<div class="ab" style="left:1096.3px;top:360.85px;width:74.70px;height:17.25px;background:#bfdfff"></div>
<div class="ab" style="left:1173px;top:360.85px;width:347.70px;height:17.25px;background:#80bfff"></div>
<div class="cb" style="left:59.3px;top:363.95px"><svg width="11" height="11" style="position:absolute;left:0;top:0"><path d="M2.4 5.9 L4.4 7.3 L8.3 2.7" fill="none" stroke="#fff" stroke-width="1.7" stroke-linecap="round" stroke-linejoin="round"/></svg></div>
<div class="t" style="left:539.8px;top:364.65px;letter-spacing:0.35px">15/08/2023</div>
<div class="t" style="left:680.3px;top:364.65px">23</div>
<div class="t" style="left:815.6px;top:364.65px;letter-spacing:0.35px">Sorti</div>
<div class="t" style="left:890.0px;top:364.65px;transform:scaleX(0.873);transform-origin:0 0">DELD</div>
<div class="t" style="left:951.9px;top:364.65px">Salarié</div>
<div class="t" style="left:1039.3px;top:364.65px;transform:scaleX(0.94);transform-origin:0 0">Non</div>
<div class="t" style="left:1097.1px;top:364.65px;letter-spacing:0.35px">15/08/2023</div>
<div class="t" style="left:1173.8px;top:364.65px;letter-spacing:-0.15px">10 - Au chômage</div>
<div class="t" style="left:99.0px;top:364.65px">D</div>
<div class="t" style="left:241.9px;top:364.65px">1</div>
<div class="t" style="left:320.0px;top:364.65px">1</div>
<div class="t" style="left:388.3px;top:364.65px">1</div>
<div class="ab" style="left:55px;top:380.10px;width:41.30px;height:17.25px;background:#80bfff"></div>
<div class="ab" style="left:98.2px;top:380.10px;width:140.90px;height:17.25px;background:#bfdfff"></div>
<div class="ab" style="left:241.1px;top:380.10px;width:76.00px;height:17.25px;background:#80bfff"></div>
<div class="ab" style="left:319.2px;top:380.10px;width:66.70px;height:17.25px;background:#bfdfff"></div>
<div class="ab" style="left:387.5px;top:380.10px;width:149.50px;height:17.25px;background:#80bfff"></div>
<div class="ab" style="left:539px;top:380.10px;width:138.80px;height:17.25px;background:#bfdfff"></div>
<div class="ab" style="left:679.5px;top:380.10px;width:133.20px;height:17.25px;background:#80bfff"></div>
<div class="ab" style="left:814.8px;top:380.10px;width:72.60px;height:17.25px;background:#bfdfff"></div>
<div class="ab" style="left:889.2px;top:380.10px;width:60.40px;height:17.25px;background:#80bfff"></div>
<div class="ab" style="left:951.1px;top:380.10px;width:85.90px;height:17.25px;background:#bfdfff"></div>
<div class="ab" style="left:1038.5px;top:380.10px;width:56.30px;height:17.25px;background:#80bfff"></div>
<div class="ab" style="left:1096.3px;top:380.10px;width:74.70px;height:17.25px;background:#bfdfff"></div>
<div class="ab" style="left:1173px;top:380.10px;width:347.70px;height:17.25px;background:#80bfff"></div>
<div class="cb" style="left:59.3px;top:383.20px"><svg width="11" height="11" style="position:absolute;left:0;top:0"><path d="M2.4 5.9 L4.4 7.3 L8.3 2.7" fill="none" stroke="#fff" stroke-width="1.7" stroke-linecap="round" stroke-linejoin="round"/></svg></div>
<div class="t" style="left:539.8px;top:383.90px;letter-spacing:0.35px">31/05/2023</div>
<div class="t" style="left:680.3px;top:383.90px">19</div>
<div class="t" style="left:815.6px;top:383.90px;letter-spacing:0.35px">Sorti</div>
<div class="t" style="left:890.0px;top:383.90px;transform:scaleX(0.873);transform-origin:0 0">DELD</div>
<div class="t" style="left:951.9px;top:383.90px">Salarié</div>
<div class="t" style="left:1039.3px;top:383.90px">Oui</div>
<div class="t" style="left:1097.1px;top:383.90px;letter-spacing:0.35px">31/05/2023</div>
<div class="t" style="left:1173.8px;top:383.90px;letter-spacing:-0.15px">10 - Au chômage</div>
<div class="t" style="left:99.0px;top:383.90px">F</div>
<div class="t" style="left:241.9px;top:383.90px">3</div>
<div class="t" style="left:320.0px;top:383.90px">2</div>
<div class="t" style="left:388.3px;top:383.90px">2</div>
<div class="ab" style="left:55px;top:399.35px;width:41.30px;height:17.25px;background:#80bfff"></div>
<div class="ab" style="left:98.2px;top:399.35px;width:140.90px;height:17.25px;background:#bfdfff"></div>
<div class="ab" style="left:241.1px;top:399.35px;width:76.00px;height:17.25px;background:#80bfff"></div>
<div class="ab" style="left:319.2px;top:399.35px;width:66.70px;height:17.25px;background:#bfdfff"></div>
<div class="ab" style="left:387.5px;top:399.35px;width:149.50px;height:17.25px;background:#80bfff"></div>
<div class="ab" style="left:539px;top:399.35px;width:138.80px;height:17.25px;background:#bfdfff"></div>
<div class="ab" style="left:679.5px;top:399.35px;width:133.20px;height:17.25px;background:#80bfff"></div>
<div class="ab" style="left:814.8px;top:399.35px;width:72.60px;height:17.25px;background:#bfdfff"></div>
<div class="ab" style="left:889.2px;top:399.35px;width:60.40px;height:17.25px;background:#80bfff"></div>
<div class="ab" style="left:951.1px;top:399.35px;width:85.90px;height:17.25px;background:#bfdfff"></div>
<div class="ab" style="left:1038.5px;top:399.35px;width:56.30px;height:17.25px;background:#80bfff"></div>
<div class="ab" style="left:1096.3px;top:399.35px;width:74.70px;height:17.25px;background:#bfdfff"></div>
<div class="ab" style="left:1173px;top:399.35px;width:347.70px;height:17.25px;background:#80bfff"></div>
<div class="cb" style="left:59.3px;top:402.45px"><svg width="11" height="11" style="position:absolute;left:0;top:0"><path d="M2.4 5.9 L4.4 7.3 L8.3 2.7" fill="none" stroke="#fff" stroke-width="1.7" stroke-linecap="round" stroke-linejoin="round"/></svg></div>
<div class="t" style="left:539.8px;top:403.15px;letter-spacing:0.35px">31/05/2023</div>
<div class="t" style="left:680.3px;top:403.15px">19</div>
<div class="t" style="left:815.6px;top:403.15px;letter-spacing:0.35px">Sorti</div>
<div class="t" style="left:890.0px;top:403.15px;transform:scaleX(0.873);transform-origin:0 0">DELD</div>
<div class="t" style="left:951.9px;top:403.15px">Salarié</div>
<div class="t" style="left:1039.3px;top:403.15px">Oui</div>
<div class="t" style="left:1097.1px;top:403.15px;letter-spacing:0.35px">31/05/2023</div>
<div class="t" style="left:1173.8px;top:403.15px;letter-spacing:-0.15px">10 - Au chômage</div>
<div class="t" style="left:99.0px;top:403.15px">F</div>
<div class="t" style="left:241.9px;top:403.15px">3</div>
<div class="t" style="left:320.0px;top:403.15px">2</div>
<div class="t" style="left:388.3px;top:403.15px">2</div>
<div class="ab" style="left:55px;top:418.60px;width:41.30px;height:17.25px;background:#80bfff"></div>
<div class="ab" style="left:98.2px;top:418.60px;width:140.90px;height:17.25px;background:#bfdfff"></div>
<div class="ab" style="left:241.1px;top:418.60px;width:76.00px;height:17.25px;background:#80bfff"></div>
<div class="ab" style="left:319.2px;top:418.60px;width:66.70px;height:17.25px;background:#bfdfff"></div>
<div class="ab" style="left:387.5px;top:418.60px;width:149.50px;height:17.25px;background:#80bfff"></div>
<div class="ab" style="left:539px;top:418.60px;width:138.80px;height:17.25px;background:#bfdfff"></div>
<div class="ab" style="left:679.5px;top:418.60px;width:133.20px;height:17.25px;background:#80bfff"></div>
<div class="ab" style="left:814.8px;top:418.60px;width:72.60px;height:17.25px;background:#bfdfff"></div>
<div class="ab" style="left:889.2px;top:418.60px;width:60.40px;height:17.25px;background:#80bfff"></div>
<div class="ab" style="left:951.1px;top:418.60px;width:85.90px;height:17.25px;background:#bfdfff"></div>
<div class="ab" style="left:1038.5px;top:418.60px;width:56.30px;height:17.25px;background:#80bfff"></div>
<div class="ab" style="left:1096.3px;top:418.60px;width:74.70px;height:17.25px;background:#bfdfff"></div>
<div class="ab" style="left:1173px;top:418.60px;width:347.70px;height:17.25px;background:#80bfff"></div>
<div class="cb" style="left:59.3px;top:421.70px"><svg width="11" height="11" style="position:absolute;left:0;top:0"><path d="M2.4 5.9 L4.4 7.3 L8.3 2.7" fill="none" stroke="#fff" stroke-width="1.7" stroke-linecap="round" stroke-linejoin="round"/></svg></div>
<div class="t" style="left:539.8px;top:422.40px;letter-spacing:0.35px">01/04/2023</div>
<div class="t" style="left:680.3px;top:422.40px">16</div>
<div class="t" style="left:815.6px;top:422.40px;letter-spacing:0.35px">Sorti</div>
<div class="t" style="left:890.0px;top:422.40px;transform:scaleX(0.8);transform-origin:0 0">RSA</div>
<div class="t" style="left:951.9px;top:422.40px">Salarié</div>
<div class="t" style="left:1039.3px;top:422.40px;transform:scaleX(0.94);transform-origin:0 0">Non</div>
<div class="t" style="left:1097.1px;top:422.40px;letter-spacing:0.35px">01/04/2023</div>
<div class="t" style="left:1173.8px;top:422.40px;letter-spacing:-0.15px">10 - Au chômage</div>
<div class="t" style="left:99.0px;top:422.40px">C</div>
<div class="t" style="left:241.9px;top:422.40px">0</div>
<div class="t" style="left:320.0px;top:422.40px">0</div>
<div class="t" style="left:388.3px;top:422.40px">0</div>
<div class="ab" style="left:55px;top:437.85px;width:41.30px;height:31.10px;background:#80bfff"></div>
<div class="ab" style="left:98.2px;top:437.85px;width:140.90px;height:31.10px;background:#bfdfff"></div>
<div class="ab" style="left:241.1px;top:437.85px;width:76.00px;height:31.10px;background:#80bfff"></div>
<div class="ab" style="left:319.2px;top:437.85px;width:66.70px;height:31.10px;background:#bfdfff"></div>
<div class="ab" style="left:387.5px;top:437.85px;width:149.50px;height:31.10px;background:#80bfff"></div>
<div class="ab" style="left:539px;top:437.85px;width:138.80px;height:31.10px;background:#bfdfff"></div>
<div class="ab" style="left:679.5px;top:437.85px;width:133.20px;height:31.10px;background:#80bfff"></div>
<div class="ab" style="left:814.8px;top:437.85px;width:72.60px;height:31.10px;background:#bfdfff"></div>
<div class="ab" style="left:889.2px;top:437.85px;width:60.40px;height:31.10px;background:#80bfff"></div>
<div class="ab" style="left:951.1px;top:437.85px;width:85.90px;height:31.10px;background:#bfdfff"></div>
<div class="ab" style="left:1038.5px;top:437.85px;width:56.30px;height:31.10px;background:#80bfff"></div>
<div class="ab" style="left:1096.3px;top:437.85px;width:74.70px;height:31.10px;background:#bfdfff"></div>
<div class="ab" style="left:1173px;top:437.85px;width:347.70px;height:31.10px;background:#80bfff"></div>
<div class="cb" style="left:59.3px;top:440.95px"><svg width="11" height="11" style="position:absolute;left:0;top:0"><path d="M2.4 5.9 L4.4 7.3 L8.3 2.7" fill="none" stroke="#fff" stroke-width="1.7" stroke-linecap="round" stroke-linejoin="round"/></svg></div>
<div class="t" style="left:539.8px;top:441.65px;letter-spacing:0.35px">20/09/2023</div>
<div class="t" style="left:680.3px;top:441.65px">20</div>
<div class="t" style="left:815.6px;top:441.65px;letter-spacing:0.35px">Sorti</div>
<div class="t" style="left:890.0px;top:441.65px;transform:scaleX(0.8);transform-origin:0 0">RSA</div>
<div class="t" style="left:951.9px;top:441.65px">Salarié</div>
<div class="t" style="left:1039.3px;top:441.65px">Oui,<br>majoré</div>
<div class="t" style="left:1097.1px;top:441.65px;letter-spacing:0.35px">20/09/2023</div>
<div class="t" style="left:1173.8px;top:441.65px;letter-spacing:0.12px">25 - Rupture employeur pour faute grave du salarié</div>
<div class="t" style="left:99.0px;top:441.65px">A</div>
<div class="t" style="left:241.9px;top:441.65px">2</div>
<div class="t" style="left:320.0px;top:441.65px">2</div>
<div class="t" style="left:388.3px;top:441.65px">2</div>
<div class="ab" style="left:55px;top:470.95px;width:41.30px;height:31.10px;background:#80bfff"></div>
<div class="ab" style="left:98.2px;top:470.95px;width:140.90px;height:31.10px;background:#bfdfff"></div>
<div class="ab" style="left:241.1px;top:470.95px;width:76.00px;height:31.10px;background:#80bfff"></div>
<div class="ab" style="left:319.2px;top:470.95px;width:66.70px;height:31.10px;background:#bfdfff"></div>
<div class="ab" style="left:387.5px;top:470.95px;width:149.50px;height:31.10px;background:#80bfff"></div>
<div class="ab" style="left:539px;top:470.95px;width:138.80px;height:31.10px;background:#bfdfff"></div>
<div class="ab" style="left:679.5px;top:470.95px;width:133.20px;height:31.10px;background:#80bfff"></div>
<div class="ab" style="left:814.8px;top:470.95px;width:72.60px;height:31.10px;background:#bfdfff"></div>
<div class="ab" style="left:889.2px;top:470.95px;width:60.40px;height:31.10px;background:#80bfff"></div>
<div class="ab" style="left:951.1px;top:470.95px;width:85.90px;height:31.10px;background:#bfdfff"></div>
<div class="ab" style="left:1038.5px;top:470.95px;width:56.30px;height:31.10px;background:#80bfff"></div>
<div class="ab" style="left:1096.3px;top:470.95px;width:74.70px;height:31.10px;background:#bfdfff"></div>
<div class="ab" style="left:1173px;top:470.95px;width:347.70px;height:31.10px;background:#80bfff"></div>
<div class="cb" style="left:59.3px;top:474.05px"><svg width="11" height="11" style="position:absolute;left:0;top:0"><path d="M2.4 5.9 L4.4 7.3 L8.3 2.7" fill="none" stroke="#fff" stroke-width="1.7" stroke-linecap="round" stroke-linejoin="round"/></svg></div>
<div class="t" style="left:539.8px;top:474.75px;letter-spacing:0.35px">21/09/2023</div>
<div class="t" style="left:680.3px;top:474.75px">20</div>
<div class="t" style="left:815.6px;top:474.75px;letter-spacing:0.35px">Sorti</div>
<div class="t" style="left:890.0px;top:474.75px;transform:scaleX(0.873);transform-origin:0 0">DELD</div>
<div class="t" style="left:951.9px;top:474.75px">Salarié</div>
<div class="t" style="left:1039.3px;top:474.75px">Oui</div>
<div class="t" style="left:1097.1px;top:474.75px;letter-spacing:0.35px">21/09/2023</div>
<div class="t" style="left:1173.8px;top:474.75px"><span style="letter-spacing:-0.04px">13 - Embauche en CDD (sans aide publique à l'emploi) d'une</span><br><span style="letter-spacing:0.12px">durée de 6 mois et plus</span></div>
<div class="t" style="left:99.0px;top:474.75px">T</div>
<div class="t" style="left:241.9px;top:474.75px">0</div>
<div class="t" style="left:320.0px;top:474.75px">0</div>
<div class="t" style="left:388.3px;top:474.75px">0</div>
<div class="ab" style="left:55px;top:504.05px;width:41.30px;height:31.10px;background:#80bfff"></div>
<div class="ab" style="left:98.2px;top:504.05px;width:140.90px;height:31.10px;background:#bfdfff"></div>
<div class="ab" style="left:241.1px;top:504.05px;width:76.00px;height:31.10px;background:#80bfff"></div>
<div class="ab" style="left:319.2px;top:504.05px;width:66.70px;height:31.10px;background:#bfdfff"></div>
<div class="ab" style="left:387.5px;top:504.05px;width:149.50px;height:31.10px;background:#80bfff"></div>
<div class="ab" style="left:539px;top:504.05px;width:138.80px;height:31.10px;background:#bfdfff"></div>
<div class="ab" style="left:679.5px;top:504.05px;width:133.20px;height:31.10px;background:#80bfff"></div>
<div class="ab" style="left:814.8px;top:504.05px;width:72.60px;height:31.10px;background:#bfdfff"></div>
<div class="ab" style="left:889.2px;top:504.05px;width:60.40px;height:31.10px;background:#80bfff"></div>
<div class="ab" style="left:951.1px;top:504.05px;width:85.90px;height:31.10px;background:#bfdfff"></div>
<div class="ab" style="left:1038.5px;top:504.05px;width:56.30px;height:31.10px;background:#80bfff"></div>
<div class="ab" style="left:1096.3px;top:504.05px;width:74.70px;height:31.10px;background:#bfdfff"></div>
<div class="ab" style="left:1173px;top:504.05px;width:347.70px;height:31.10px;background:#80bfff"></div>
<div class="cb" style="left:59.3px;top:507.15px"><svg width="11" height="11" style="position:absolute;left:0;top:0"><path d="M2.4 5.9 L4.4 7.3 L8.3 2.7" fill="none" stroke="#fff" stroke-width="1.7" stroke-linecap="round" stroke-linejoin="round"/></svg></div>
<div class="t" style="left:539.8px;top:507.85px;letter-spacing:0.35px">21/09/2023</div>
<div class="t" style="left:680.3px;top:507.85px">20</div>
<div class="t" style="left:815.6px;top:507.85px;letter-spacing:0.35px">Sorti</div>
<div class="t" style="left:890.0px;top:507.85px;transform:scaleX(0.873);transform-origin:0 0">DELD</div>
<div class="t" style="left:951.9px;top:507.85px">Salarié</div>
<div class="t" style="left:1039.3px;top:507.85px">Oui</div>
<div class="t" style="left:1097.1px;top:507.85px;letter-spacing:0.35px">21/09/2023</div>
<div class="t" style="left:1173.8px;top:507.85px"><span style="letter-spacing:-0.04px">13 - Embauche en CDD (sans aide publique à l'emploi) d'une</span><br><span style="letter-spacing:0.12px">durée de 6 mois et plus</span></div>
<div class="t" style="left:99.0px;top:507.85px">T</div>
<div class="t" style="left:241.9px;top:507.85px">0</div>
<div class="t" style="left:320.0px;top:507.85px">0</div>
<div class="t" style="left:388.3px;top:507.85px">0</div>
<div class="ab" style="left:55px;top:537.15px;width:41.30px;height:31.10px;background:#80bfff"></div>
<div class="ab" style="left:98.2px;top:537.15px;width:140.90px;height:31.10px;background:#bfdfff"></div>
<div class="ab" style="left:241.1px;top:537.15px;width:76.00px;height:31.10px;background:#80bfff"></div>
<div class="ab" style="left:319.2px;top:537.15px;width:66.70px;height:31.10px;background:#bfdfff"></div>
<div class="ab" style="left:387.5px;top:537.15px;width:149.50px;height:31.10px;background:#80bfff"></div>
<div class="ab" style="left:539px;top:537.15px;width:138.80px;height:31.10px;background:#bfdfff"></div>
<div class="ab" style="left:679.5px;top:537.15px;width:133.20px;height:31.10px;background:#80bfff"></div>
<div class="ab" style="left:814.8px;top:537.15px;width:72.60px;height:31.10px;background:#bfdfff"></div>
<div class="ab" style="left:889.2px;top:537.15px;width:60.40px;height:31.10px;background:#80bfff"></div>
<div class="ab" style="left:951.1px;top:537.15px;width:85.90px;height:31.10px;background:#bfdfff"></div>
<div class="ab" style="left:1038.5px;top:537.15px;width:56.30px;height:31.10px;background:#80bfff"></div>
<div class="ab" style="left:1096.3px;top:537.15px;width:74.70px;height:31.10px;background:#bfdfff"></div>
<div class="ab" style="left:1173px;top:537.15px;width:347.70px;height:31.10px;background:#80bfff"></div>
<div class="cb" style="left:59.3px;top:540.25px"><svg width="11" height="11" style="position:absolute;left:0;top:0"><path d="M2.4 5.9 L4.4 7.3 L8.3 2.7" fill="none" stroke="#fff" stroke-width="1.7" stroke-linecap="round" stroke-linejoin="round"/></svg></div>
<div class="t" style="left:539.8px;top:540.95px;letter-spacing:0.35px">31/07/2023</div>
<div class="t" style="left:680.3px;top:540.95px">18</div>
<div class="t" style="left:815.6px;top:540.95px;letter-spacing:0.35px">Sorti</div>
<div class="t" style="left:890.0px;top:540.95px;transform:scaleX(0.8);transform-origin:0 0">RSA</div>
<div class="t" style="left:951.9px;top:540.95px">Salarié</div>
<div class="t" style="left:1039.3px;top:540.95px">Oui,<br>majoré</div>
<div class="t" style="left:1097.1px;top:540.95px;letter-spacing:0.35px">31/07/2023</div>
<div class="t" style="left:1173.8px;top:540.95px"><span style="letter-spacing:0.23px">08 - Entrée en formation qualifiante ou poursuite de formation</span><br><span style="letter-spacing:0.39px">qualifiante</span></div>
<div class="t" style="left:99.0px;top:540.95px">R</div>
<div class="t" style="left:241.9px;top:540.95px">1</div>
<div class="t" style="left:320.0px;top:540.95px">1</div>
<div class="t" style="left:388.3px;top:540.95px">1</div>
<div class="ab" style="left:55px;top:570.25px;width:41.30px;height:17.25px;background:#80bfff"></div>
<div class="ab" style="left:98.2px;top:570.25px;width:140.90px;height:17.25px;background:#bfdfff"></div>
<div class="ab" style="left:241.1px;top:570.25px;width:76.00px;height:17.25px;background:#80bfff"></div>
<div class="ab" style="left:319.2px;top:570.25px;width:66.70px;height:17.25px;background:#bfdfff"></div>
<div class="ab" style="left:387.5px;top:570.25px;width:149.50px;height:17.25px;background:#80bfff"></div>
<div class="ab" style="left:539px;top:570.25px;width:138.80px;height:17.25px;background:#bfdfff"></div>
<div class="ab" style="left:679.5px;top:570.25px;width:133.20px;height:17.25px;background:#80bfff"></div>
<div class="ab" style="left:814.8px;top:570.25px;width:72.60px;height:17.25px;background:#bfdfff"></div>
<div class="ab" style="left:889.2px;top:570.25px;width:60.40px;height:17.25px;background:#80bfff"></div>
<div class="ab" style="left:951.1px;top:570.25px;width:85.90px;height:17.25px;background:#bfdfff"></div>
<div class="ab" style="left:1038.5px;top:570.25px;width:56.30px;height:17.25px;background:#80bfff"></div>
<div class="ab" style="left:1096.3px;top:570.25px;width:74.70px;height:17.25px;background:#bfdfff"></div>
<div class="ab" style="left:1173px;top:570.25px;width:347.70px;height:17.25px;background:#80bfff"></div>
<div class="cb" style="left:59.3px;top:573.35px"><svg width="11" height="11" style="position:absolute;left:0;top:0"><path d="M2.4 5.9 L4.4 7.3 L8.3 2.7" fill="none" stroke="#fff" stroke-width="1.7" stroke-linecap="round" stroke-linejoin="round"/></svg></div>
<div class="t" style="left:539.8px;top:574.05px;letter-spacing:0.35px">16/04/2023</div>
<div class="t" style="left:680.3px;top:574.05px">14</div>
<div class="t" style="left:815.6px;top:574.05px;letter-spacing:0.35px">Sorti</div>
<div class="t" style="left:890.0px;top:574.05px;transform:scaleX(0.8);transform-origin:0 0">RSA</div>
<div class="t" style="left:951.9px;top:574.05px">Salarié</div>
<div class="t" style="left:1039.3px;top:574.05px">Oui</div>
<div class="t" style="left:1097.1px;top:574.05px;letter-spacing:0.35px">16/04/2023</div>
<div class="t" style="left:1173.8px;top:574.05px;letter-spacing:-0.15px">10 - Au chômage</div>
<div class="t" style="left:99.0px;top:574.05px">F</div>
<div class="t" style="left:241.9px;top:574.05px">1</div>
<div class="t" style="left:320.0px;top:574.05px">1</div>
<div class="t" style="left:388.3px;top:574.05px">1</div>
<div class="ab" style="left:55px;top:589.50px;width:41.30px;height:17.25px;background:#80bfff"></div>
<div class="ab" style="left:98.2px;top:589.50px;width:140.90px;height:17.25px;background:#bfdfff"></div>
<div class="ab" style="left:241.1px;top:589.50px;width:76.00px;height:17.25px;background:#80bfff"></div>
<div class="ab" style="left:319.2px;top:589.50px;width:66.70px;height:17.25px;background:#bfdfff"></div>
<div class="ab" style="left:387.5px;top:589.50px;width:149.50px;height:17.25px;background:#80bfff"></div>
<div class="ab" style="left:539px;top:589.50px;width:138.80px;height:17.25px;background:#bfdfff"></div>
<div class="ab" style="left:679.5px;top:589.50px;width:133.20px;height:17.25px;background:#80bfff"></div>
<div class="ab" style="left:814.8px;top:589.50px;width:72.60px;height:17.25px;background:#bfdfff"></div>
<div class="ab" style="left:889.2px;top:589.50px;width:60.40px;height:17.25px;background:#80bfff"></div>
<div class="ab" style="left:951.1px;top:589.50px;width:85.90px;height:17.25px;background:#bfdfff"></div>
<div class="ab" style="left:1038.5px;top:589.50px;width:56.30px;height:17.25px;background:#80bfff"></div>
<div class="ab" style="left:1096.3px;top:589.50px;width:74.70px;height:17.25px;background:#bfdfff"></div>
<div class="ab" style="left:1173px;top:589.50px;width:347.70px;height:17.25px;background:#80bfff"></div>
<div class="cb" style="left:59.3px;top:592.60px"><svg width="11" height="11" style="position:absolute;left:0;top:0"><path d="M2.4 5.9 L4.4 7.3 L8.3 2.7" fill="none" stroke="#fff" stroke-width="1.7" stroke-linecap="round" stroke-linejoin="round"/></svg></div>
<div class="t" style="left:539.8px;top:593.30px;letter-spacing:0.35px">31/01/2024</div>
<div class="t" style="left:680.3px;top:593.30px">23</div>
<div class="t" style="left:815.6px;top:593.30px;letter-spacing:0.45px">Actif</div>
<div class="t" style="left:890.0px;top:593.30px;transform:scaleX(0.873);transform-origin:0 0">DELD</div>
<div class="t" style="left:951.9px;top:593.30px">Salarié</div>
<div class="t" style="left:99.0px;top:593.30px">D</div>
<div class="t" style="left:241.9px;top:593.30px">0</div>
<div class="t" style="left:320.0px;top:593.30px">0</div>
<div class="t" style="left:388.3px;top:593.30px">0</div>
<div class="ab" style="left:55px;top:608.75px;width:41.30px;height:17.25px;background:#80bfff"></div>
<div class="ab" style="left:98.2px;top:608.75px;width:140.90px;height:17.25px;background:#bfdfff"></div>
<div class="ab" style="left:241.1px;top:608.75px;width:76.00px;height:17.25px;background:#80bfff"></div>
<div class="ab" style="left:319.2px;top:608.75px;width:66.70px;height:17.25px;background:#bfdfff"></div>
<div class="ab" style="left:387.5px;top:608.75px;width:149.50px;height:17.25px;background:#80bfff"></div>
<div class="ab" style="left:539px;top:608.75px;width:138.80px;height:17.25px;background:#bfdfff"></div>
<div class="ab" style="left:679.5px;top:608.75px;width:133.20px;height:17.25px;background:#80bfff"></div>
<div class="ab" style="left:814.8px;top:608.75px;width:72.60px;height:17.25px;background:#bfdfff"></div>
<div class="ab" style="left:889.2px;top:608.75px;width:60.40px;height:17.25px;background:#80bfff"></div>
<div class="ab" style="left:951.1px;top:608.75px;width:85.90px;height:17.25px;background:#bfdfff"></div>
<div class="ab" style="left:1038.5px;top:608.75px;width:56.30px;height:17.25px;background:#80bfff"></div>
<div class="ab" style="left:1096.3px;top:608.75px;width:74.70px;height:17.25px;background:#bfdfff"></div>
<div class="ab" style="left:1173px;top:608.75px;width:347.70px;height:17.25px;background:#80bfff"></div>
<div class="cb" style="left:59.3px;top:611.85px"><svg width="11" height="11" style="position:absolute;left:0;top:0"><path d="M2.4 5.9 L4.4 7.3 L8.3 2.7" fill="none" stroke="#fff" stroke-width="1.7" stroke-linecap="round" stroke-linejoin="round"/></svg></div>
<div class="t" style="left:539.8px;top:612.55px;letter-spacing:0.35px">31/01/2024</div>
<div class="t" style="left:680.3px;top:612.55px">23</div>
<div class="t" style="left:815.6px;top:612.55px;letter-spacing:0.45px">Actif</div>
<div class="t" style="left:890.0px;top:612.55px;transform:scaleX(0.873);transform-origin:0 0">DELD</div>
<div class="t" style="left:951.9px;top:612.55px">Salarié</div>
<div class="t" style="left:99.0px;top:612.55px">D</div>
<div class="t" style="left:241.9px;top:612.55px">0</div>
<div class="t" style="left:320.0px;top:612.55px">0</div>
<div class="t" style="left:388.3px;top:612.55px">0</div>
<div class="ab" style="left:55px;top:628.00px;width:41.30px;height:17.25px;background:#80bfff"></div>
<div class="ab" style="left:98.2px;top:628.00px;width:140.90px;height:17.25px;background:#bfdfff"></div>
<div class="ab" style="left:241.1px;top:628.00px;width:76.00px;height:17.25px;background:#80bfff"></div>
<div class="ab" style="left:319.2px;top:628.00px;width:66.70px;height:17.25px;background:#bfdfff"></div>
<div class="ab" style="left:387.5px;top:628.00px;width:149.50px;height:17.25px;background:#80bfff"></div>
<div class="ab" style="left:539px;top:628.00px;width:138.80px;height:17.25px;background:#bfdfff"></div>
<div class="ab" style="left:679.5px;top:628.00px;width:133.20px;height:17.25px;background:#80bfff"></div>
<div class="ab" style="left:814.8px;top:628.00px;width:72.60px;height:17.25px;background:#bfdfff"></div>
<div class="ab" style="left:889.2px;top:628.00px;width:60.40px;height:17.25px;background:#80bfff"></div>
<div class="ab" style="left:951.1px;top:628.00px;width:85.90px;height:17.25px;background:#bfdfff"></div>
<div class="ab" style="left:1038.5px;top:628.00px;width:56.30px;height:17.25px;background:#80bfff"></div>
<div class="ab" style="left:1096.3px;top:628.00px;width:74.70px;height:17.25px;background:#bfdfff"></div>
<div class="ab" style="left:1173px;top:628.00px;width:347.70px;height:17.25px;background:#80bfff"></div>
<div class="cb" style="left:59.3px;top:631.10px"><svg width="11" height="11" style="position:absolute;left:0;top:0"><path d="M2.4 5.9 L4.4 7.3 L8.3 2.7" fill="none" stroke="#fff" stroke-width="1.7" stroke-linecap="round" stroke-linejoin="round"/></svg></div>
<div class="t" style="left:539.8px;top:631.80px;letter-spacing:0.35px">07/02/2023</div>
<div class="t" style="left:680.3px;top:631.80px">11</div>
<div class="t" style="left:815.6px;top:631.80px;letter-spacing:0.35px">Sorti</div>
<div class="t" style="left:890.0px;top:631.80px;transform:scaleX(0.8);transform-origin:0 0">RSA</div>
<div class="t" style="left:951.9px;top:631.80px">Salarié</div>
<div class="t" style="left:1039.3px;top:631.80px;transform:scaleX(0.94);transform-origin:0 0">Non</div>
<div class="t" style="left:1097.1px;top:631.80px;letter-spacing:0.35px">07/02/2023</div>
<div class="t" style="left:1173.8px;top:631.80px;letter-spacing:-0.15px">10 - Au chômage</div>
<div class="t" style="left:99.0px;top:631.80px">A</div>
<div class="t" style="left:241.9px;top:631.80px">0</div>
<div class="t" style="left:320.0px;top:631.80px">0</div>
<div class="t" style="left:388.3px;top:631.80px">0</div>
<div class="ab" style="left:55px;top:647.25px;width:41.30px;height:31.10px;background:#80bfff"></div>
<div class="ab" style="left:98.2px;top:647.25px;width:140.90px;height:31.10px;background:#bfdfff"></div>
<div class="ab" style="left:241.1px;top:647.25px;width:76.00px;height:31.10px;background:#80bfff"></div>
<div class="ab" style="left:319.2px;top:647.25px;width:66.70px;height:31.10px;background:#bfdfff"></div>
<div class="ab" style="left:387.5px;top:647.25px;width:149.50px;height:31.10px;background:#80bfff"></div>
<div class="ab" style="left:539px;top:647.25px;width:138.80px;height:31.10px;background:#bfdfff"></div>
<div class="ab" style="left:679.5px;top:647.25px;width:133.20px;height:31.10px;background:#80bfff"></div>
<div class="ab" style="left:814.8px;top:647.25px;width:72.60px;height:31.10px;background:#bfdfff"></div>
<div class="ab" style="left:889.2px;top:647.25px;width:60.40px;height:31.10px;background:#80bfff"></div>
<div class="ab" style="left:951.1px;top:647.25px;width:85.90px;height:31.10px;background:#bfdfff"></div>
<div class="ab" style="left:1038.5px;top:647.25px;width:56.30px;height:31.10px;background:#80bfff"></div>
<div class="ab" style="left:1096.3px;top:647.25px;width:74.70px;height:31.10px;background:#bfdfff"></div>
<div class="ab" style="left:1173px;top:647.25px;width:347.70px;height:31.10px;background:#80bfff"></div>
<div class="cb" style="left:59.3px;top:650.35px"><svg width="11" height="11" style="position:absolute;left:0;top:0"><path d="M2.4 5.9 L4.4 7.3 L8.3 2.7" fill="none" stroke="#fff" stroke-width="1.7" stroke-linecap="round" stroke-linejoin="round"/></svg></div>
<div class="t" style="left:539.8px;top:651.05px;letter-spacing:0.35px">11/08/2023</div>
<div class="t" style="left:680.3px;top:651.05px">16</div>
<div class="t" style="left:815.6px;top:651.05px;letter-spacing:0.35px">Sorti</div>
<div class="t" style="left:890.0px;top:651.05px;transform:scaleX(0.873);transform-origin:0 0">DELD</div>
<div class="t" style="left:951.9px;top:651.05px">Salarié</div>
<div class="t" style="left:1039.3px;top:651.05px;transform:scaleX(0.94);transform-origin:0 0">Non</div>
<div class="t" style="left:1097.1px;top:651.05px;letter-spacing:0.35px">11/08/2023</div>
<div class="t" style="left:1173.8px;top:651.05px"><span style="letter-spacing:0.23px">08 - Entrée en formation qualifiante ou poursuite de formation</span><br><span style="letter-spacing:0.39px">qualifiante</span></div>
<div class="t" style="left:99.0px;top:651.05px">C</div>
<div class="t" style="left:241.9px;top:651.05px">0</div>
<div class="t" style="left:320.0px;top:651.05px">0</div>
<div class="t" style="left:388.3px;top:651.05px">0</div>
<svg class="ab" style="left:0;top:0" width="1536" height="675" shape-rendering="crispEdges"><path fill="#d2eaff" d="M100.6 301.2h0.60v5.50h-0.60zM101.2 301.2h5.60v5.50h-5.60zM106.8 301.2h5.60v5.50h-5.60zM112.4 301.2h5.60v5.50h-5.60zM118.0 301.2h5.60v5.50h-5.60zM123.6 301.2h5.60v5.50h-5.60zM129.2 301.2h5.60v5.50h-5.60zM134.8 301.2h5.60v5.50h-5.60zM140.4 301.2h5.60v5.50h-5.60zM146.0 301.2h5.60v5.50h-5.60zM151.6 301.2h5.60v5.50h-5.60zM157.2 301.2h5.60v5.50h-5.60zM162.8 301.2h5.60v5.50h-5.60zM168.4 301.2h5.60v5.50h-5.60zM174.0 301.2h5.60v5.50h-5.60zM179.6 301.2h5.60v5.50h-5.60zM185.2 301.2h5.60v5.50h-5.60zM190.8 301.2h5.60v5.50h-5.60zM196.4 301.2h5.60v5.50h-5.60zM202.0 301.2h5.60v5.50h-5.60zM207.6 301.2h3.40v5.50h-3.40zM100.6 339.7h0.60v5.50h-0.60zM101.2 339.7h5.60v5.50h-5.60zM106.8 339.7h5.60v5.50h-5.60zM112.4 339.7h5.60v5.50h-5.60zM118.0 339.7h5.60v5.50h-5.60zM123.6 339.7h5.60v5.50h-5.60zM129.2 339.7h5.60v5.50h-5.60zM134.8 339.7h5.60v5.50h-5.60zM140.4 339.7h5.60v5.50h-5.60zM146.0 339.7h5.60v5.50h-5.60zM151.6 339.7h5.60v5.50h-5.60zM157.2 339.7h5.60v5.50h-5.60zM162.8 339.7h5.60v5.50h-5.60zM168.4 339.7h5.60v5.50h-5.60zM174.0 339.7h5.60v5.50h-5.60zM179.6 339.7h5.60v5.50h-5.60zM185.2 339.7h5.60v5.50h-5.60zM190.8 339.7h5.60v5.50h-5.60zM196.4 339.7h5.60v5.50h-5.60zM202.0 339.7h5.60v5.50h-5.60zM207.6 339.7h3.40v5.50h-3.40zM100.6 378.2h0.60v5.50h-0.60zM101.2 378.2h5.60v5.50h-5.60zM106.8 378.2h5.60v5.50h-5.60zM112.4 378.2h5.60v5.50h-5.60zM118.0 378.2h5.60v5.50h-5.60zM123.6 378.2h5.60v5.50h-5.60zM129.2 378.2h5.60v5.50h-5.60zM134.8 378.2h5.60v5.50h-5.60zM140.4 378.2h5.60v5.50h-5.60zM146.0 378.2h5.60v5.50h-5.60zM151.6 378.2h5.60v5.50h-5.60zM157.2 378.2h5.60v5.50h-5.60zM162.8 378.2h5.60v5.50h-5.60zM168.4 378.2h5.60v5.50h-5.60zM174.0 378.2h5.60v5.50h-5.60zM179.6 378.2h5.60v5.50h-5.60zM185.2 378.2h5.60v5.50h-5.60zM190.8 378.2h5.60v5.50h-5.60zM196.4 378.2h5.60v5.50h-5.60zM202.0 378.2h5.60v5.50h-5.60zM207.6 378.2h3.40v5.50h-3.40zM100.6 416.7h0.60v5.50h-0.60zM101.2 416.7h5.60v5.50h-5.60zM106.8 416.7h5.60v5.50h-5.60zM112.4 416.7h5.60v5.50h-5.60zM118.0 416.7h5.60v5.50h-5.60zM123.6 416.7h5.60v5.50h-5.60zM129.2 416.7h5.60v5.50h-5.60zM134.8 416.7h5.60v5.50h-5.60zM140.4 416.7h5.60v5.50h-5.60zM146.0 416.7h5.60v5.50h-5.60zM151.6 416.7h5.60v5.50h-5.60zM157.2 416.7h5.60v5.50h-5.60zM162.8 416.7h5.60v5.50h-5.60zM168.4 416.7h5.60v5.50h-5.60zM174.0 416.7h5.60v5.50h-5.60zM179.6 416.7h5.60v5.50h-5.60zM185.2 416.7h5.60v5.50h-5.60zM190.8 416.7h5.60v5.50h-5.60zM196.4 416.7h5.60v5.50h-5.60zM202.0 416.7h5.60v5.50h-5.60zM207.6 416.7h3.40v5.50h-3.40zM321.3 301.2h3.40v5.50h-3.40zM324.7 301.2h5.60v5.50h-5.60zM330.3 301.2h5.60v5.50h-5.60zM335.9 301.2h5.60v5.50h-5.60zM341.5 301.2h5.60v5.50h-5.60zM347.1 301.2h5.60v5.50h-5.60zM352.7 301.2h5.60v5.50h-5.60zM358.3 301.2h5.60v5.50h-5.60zM363.9 301.2h5.60v5.50h-5.60zM369.5 301.2h5.60v5.50h-5.60zM375.1 301.2h5.60v5.50h-5.60zM380.7 301.2h4.80v5.50h-4.80zM321.3 339.7h3.40v5.50h-3.40zM324.7 339.7h5.60v5.50h-5.60zM330.3 339.7h5.60v5.50h-5.60zM335.9 339.7h5.60v5.50h-5.60zM341.5 339.7h5.60v5.50h-5.60zM347.1 339.7h5.60v5.50h-5.60zM352.7 339.7h5.60v5.50h-5.60zM358.3 339.7h5.60v5.50h-5.60zM363.9 339.7h5.60v5.50h-5.60zM369.5 339.7h5.60v5.50h-5.60zM375.1 339.7h5.60v5.50h-5.60zM380.7 339.7h4.80v5.50h-4.80zM321.3 378.2h3.40v5.50h-3.40zM324.7 378.2h5.60v5.50h-5.60zM330.3 378.2h5.60v5.50h-5.60zM335.9 378.2h5.60v5.50h-5.60zM341.5 378.2h5.60v5.50h-5.60zM347.1 378.2h5.60v5.50h-5.60zM352.7 378.2h5.60v5.50h-5.60zM358.3 378.2h5.60v5.50h-5.60zM363.9 378.2h5.60v5.50h-5.60zM369.5 378.2h5.60v5.50h-5.60zM375.1 378.2h5.60v5.50h-5.60zM380.7 378.2h4.80v5.50h-4.80zM321.3 416.7h3.40v5.50h-3.40zM324.7 416.7h5.60v5.50h-5.60zM330.3 416.7h5.60v5.50h-5.60zM335.9 416.7h5.60v5.50h-5.60zM341.5 416.7h5.60v5.50h-5.60zM347.1 416.7h5.60v5.50h-5.60zM352.7 416.7h5.60v5.50h-5.60zM358.3 416.7h5.60v5.50h-5.60zM363.9 416.7h5.60v5.50h-5.60zM369.5 416.7h5.60v5.50h-5.60zM375.1 416.7h5.60v5.50h-5.60zM380.7 416.7h4.80v5.50h-4.80z"/><path fill="#9fbad5" d="M100.6 306.7h0.60v5.50h-0.60zM324.7 350.7h5.60v5.50h-5.60zM352.7 367.2h5.60v5.50h-5.60zM375.1 383.7h5.60v5.50h-5.60zM347.1 389.2h5.60v5.50h-5.60zM375.1 389.2h5.60v5.50h-5.60zM363.9 405.7h5.60v5.50h-5.60zM369.5 422.2h5.60v5.50h-5.60zM369.5 576.2h5.60v5.50h-5.60zM380.7 614.7h4.80v5.50h-4.80zM352.7 631.2h5.60v5.50h-5.60zM347.1 273.5h5.60v5.00h-5.60zM335.9 278.5h5.60v5.00h-5.60z"/><path fill="#a5c3e1" d="M101.2 306.7h5.60v5.50h-5.60zM179.6 345.2h5.60v5.50h-5.60zM146.0 482.7h5.60v5.50h-5.60zM101.2 515.7h5.60v5.50h-5.60zM118.0 581.7h5.60v5.50h-5.60zM129.2 581.7h5.60v5.50h-5.60zM157.2 581.7h5.60v5.50h-5.60z"/><path fill="#a8c9e4" d="M106.8 306.7h5.60v5.50h-5.60zM123.6 510.2h5.60v5.50h-5.60zM100.6 548.7h0.60v5.50h-0.60zM174.0 631.2h5.60v5.50h-5.60z"/><path fill="#a8c3e1" d="M112.4 306.7h5.60v5.50h-5.60zM100.6 581.7h0.60v5.50h-0.60zM168.4 581.7h5.60v5.50h-5.60zM174.0 581.7h5.60v5.50h-5.60zM380.7 405.7h4.80v5.50h-4.80zM321.3 477.2h3.40v5.50h-3.40zM341.5 515.7h5.60v5.50h-5.60zM375.1 598.2h5.60v5.50h-5.60zM324.7 653.2h5.60v5.50h-5.60zM341.5 273.5h5.60v5.00h-5.60z"/><path fill="#a8c6e1" d="M118.0 306.7h5.60v5.50h-5.60zM101.2 482.7h5.60v5.50h-5.60zM106.8 548.7h5.60v5.50h-5.60zM179.6 581.7h5.60v5.50h-5.60zM321.3 312.2h3.40v5.50h-3.40zM363.9 477.2h5.60v5.50h-5.60zM352.7 482.7h5.60v5.50h-5.60zM335.9 515.7h5.60v5.50h-5.60zM321.3 576.2h3.40v5.50h-3.40zM324.7 598.2h5.60v5.50h-5.60zM330.3 614.7h5.60v5.50h-5.60zM352.7 278.5h5.60v5.00h-5.60z"/><path fill="#b7d8f6" d="M123.6 306.7h5.60v5.50h-5.60zM174.0 323.2h5.60v5.50h-5.60zM157.2 400.2h5.60v5.50h-5.60zM134.8 422.2h5.60v5.50h-5.60zM134.8 438.7h5.60v5.50h-5.60zM140.4 438.7h5.60v5.50h-5.60zM118.0 537.7h5.60v5.50h-5.60zM179.6 543.2h5.60v5.50h-5.60zM179.6 570.7h5.60v5.50h-5.60zM363.9 400.2h5.60v5.50h-5.60zM380.7 438.7h4.80v5.50h-4.80zM330.3 482.7h5.60v5.50h-5.60zM380.7 482.7h4.80v5.50h-4.80zM380.7 515.7h4.80v5.50h-4.80zM358.3 537.7h5.60v5.50h-5.60zM335.9 647.7h5.60v5.50h-5.60z"/><path fill="#84a2b7" d="M129.2 306.7h5.60v5.50h-5.60z"/><path fill="#93a8c6" d="M134.8 306.7h5.60v5.50h-5.60zM101.2 653.2h5.60v5.50h-5.60z"/><path fill="#abc9e1" d="M140.4 306.7h5.60v5.50h-5.60zM151.6 548.7h5.60v5.50h-5.60zM185.2 581.7h5.60v5.50h-5.60z"/><path fill="#b4d2f0" d="M146.0 306.7h5.60v5.50h-5.60zM106.8 334.2h5.60v5.50h-5.60zM146.0 389.2h5.60v5.50h-5.60zM146.0 438.7h5.60v5.50h-5.60zM140.4 471.7h5.60v5.50h-5.60zM174.0 504.7h5.60v5.50h-5.60zM174.0 537.7h5.60v5.50h-5.60zM174.0 548.7h5.60v5.50h-5.60zM146.0 570.7h5.60v5.50h-5.60zM123.6 609.2h5.60v5.50h-5.60zM179.6 609.2h5.60v5.50h-5.60zM101.2 273.5h5.60v5.00h-5.60zM330.3 306.7h5.60v5.50h-5.60zM330.3 312.2h5.60v5.50h-5.60zM335.9 323.2h5.60v5.50h-5.60zM369.5 323.2h5.60v5.50h-5.60zM375.1 323.2h5.60v5.50h-5.60zM363.9 361.7h5.60v5.50h-5.60zM321.3 383.7h3.40v5.50h-3.40zM321.3 389.2h3.40v5.50h-3.40zM335.9 400.2h5.60v5.50h-5.60zM363.9 438.7h5.60v5.50h-5.60zM369.5 438.7h5.60v5.50h-5.60zM375.1 438.7h5.60v5.50h-5.60zM321.3 444.2h3.40v5.50h-3.40zM347.1 449.7h5.60v5.50h-5.60zM375.1 449.7h5.60v5.50h-5.60zM369.5 471.7h5.60v5.50h-5.60zM369.5 482.7h5.60v5.50h-5.60zM324.7 504.7h5.60v5.50h-5.60zM330.3 504.7h5.60v5.50h-5.60zM324.7 515.7h5.60v5.50h-5.60zM330.3 515.7h5.60v5.50h-5.60zM335.9 537.7h5.60v5.50h-5.60zM369.5 537.7h5.60v5.50h-5.60zM321.3 548.7h3.40v5.50h-3.40zM358.3 548.7h5.60v5.50h-5.60zM341.5 581.7h5.60v5.50h-5.60zM369.5 581.7h5.60v5.50h-5.60zM321.3 592.7h3.40v5.50h-3.40zM358.3 592.7h5.60v5.50h-5.60zM335.9 609.2h5.60v5.50h-5.60zM363.9 609.2h5.60v5.50h-5.60zM369.5 609.2h5.60v5.50h-5.60zM321.3 620.2h3.40v5.50h-3.40zM324.7 631.2h5.60v5.50h-5.60zM352.7 647.7h5.60v5.50h-5.60zM341.5 653.2h5.60v5.50h-5.60zM358.3 273.5h5.60v5.00h-5.60zM358.3 278.5h5.60v5.00h-5.60z"/><path fill="#96abcf" d="M151.6 306.7h5.60v5.50h-5.60z"/><path fill="#99b1d2" d="M157.2 306.7h5.60v5.50h-5.60zM123.6 427.7h5.60v5.50h-5.60z"/><path fill="#abc6e4" d="M162.8 306.7h5.60v5.50h-5.60zM129.2 372.7h5.60v5.50h-5.60zM146.0 515.7h5.60v5.50h-5.60zM134.8 548.7h5.60v5.50h-5.60zM101.2 581.7h5.60v5.50h-5.60zM123.6 620.2h5.60v5.50h-5.60zM324.7 367.2h5.60v5.50h-5.60zM324.7 438.7h5.60v5.50h-5.60zM341.5 444.2h5.60v5.50h-5.60zM321.3 504.7h3.40v5.50h-3.40zM375.1 543.2h5.60v5.50h-5.60zM347.1 592.7h5.60v5.50h-5.60zM358.3 614.7h5.60v5.50h-5.60zM341.5 631.2h5.60v5.50h-5.60zM380.7 636.7h4.80v5.50h-4.80z"/><path fill="#93a2c6" d="M168.4 306.7h5.60v5.50h-5.60z"/><path fill="#9caecf" d="M174.0 306.7h5.60v5.50h-5.60z"/><path fill="#a8c6e4" d="M179.6 306.7h5.60v5.50h-5.60zM123.6 400.2h5.60v5.50h-5.60zM140.4 482.7h5.60v5.50h-5.60zM162.8 482.7h5.60v5.50h-5.60zM112.4 620.2h5.60v5.50h-5.60zM101.2 631.2h5.60v5.50h-5.60zM106.8 631.2h5.60v5.50h-5.60zM118.0 631.2h5.60v5.50h-5.60z"/><path fill="#b4cfea" d="M185.2 306.7h5.60v5.50h-5.60zM179.6 411.2h5.60v5.50h-5.60z"/><path fill="#c0deff" d="M190.8 306.7h5.60v5.50h-5.60zM196.4 306.7h5.60v5.50h-5.60zM202.0 306.7h5.60v5.50h-5.60zM207.6 306.7h3.40v5.50h-3.40zM190.8 312.2h5.60v5.50h-5.60zM196.4 312.2h5.60v5.50h-5.60zM202.0 312.2h5.60v5.50h-5.60zM207.6 312.2h3.40v5.50h-3.40zM106.8 323.2h5.60v5.50h-5.60zM112.4 323.2h5.60v5.50h-5.60zM118.0 323.2h5.60v5.50h-5.60zM140.4 323.2h5.60v5.50h-5.60zM151.6 323.2h5.60v5.50h-5.60zM157.2 323.2h5.60v5.50h-5.60zM179.6 323.2h5.60v5.50h-5.60zM185.2 323.2h5.60v5.50h-5.60zM190.8 323.2h5.60v5.50h-5.60zM196.4 323.2h5.60v5.50h-5.60zM202.0 323.2h5.60v5.50h-5.60zM207.6 323.2h3.40v5.50h-3.40zM185.2 328.7h5.60v5.50h-5.60zM190.8 328.7h5.60v5.50h-5.60zM196.4 328.7h5.60v5.50h-5.60zM202.0 328.7h5.60v5.50h-5.60zM207.6 328.7h3.40v5.50h-3.40zM100.6 345.2h0.60v5.50h-0.60zM202.0 345.2h5.60v5.50h-5.60zM207.6 345.2h3.40v5.50h-3.40zM100.6 350.7h0.60v5.50h-0.60zM202.0 350.7h5.60v5.50h-5.60zM207.6 350.7h3.40v5.50h-3.40zM100.6 361.7h0.60v5.50h-0.60zM101.2 361.7h5.60v5.50h-5.60zM106.8 361.7h5.60v5.50h-5.60zM112.4 361.7h5.60v5.50h-5.60zM118.0 361.7h5.60v5.50h-5.60zM123.6 361.7h5.60v5.50h-5.60zM129.2 361.7h5.60v5.50h-5.60zM134.8 361.7h5.60v5.50h-5.60zM140.4 361.7h5.60v5.50h-5.60zM146.0 361.7h5.60v5.50h-5.60zM185.2 361.7h5.60v5.50h-5.60zM190.8 361.7h5.60v5.50h-5.60zM196.4 361.7h5.60v5.50h-5.60zM202.0 361.7h5.60v5.50h-5.60zM207.6 361.7h3.40v5.50h-3.40zM185.2 367.2h5.60v5.50h-5.60zM190.8 367.2h5.60v5.50h-5.60zM196.4 367.2h5.60v5.50h-5.60zM202.0 367.2h5.60v5.50h-5.60zM207.6 367.2h3.40v5.50h-3.40zM179.6 383.7h5.60v5.50h-5.60zM185.2 383.7h5.60v5.50h-5.60zM190.8 383.7h5.60v5.50h-5.60zM196.4 383.7h5.60v5.50h-5.60zM202.0 383.7h5.60v5.50h-5.60zM207.6 383.7h3.40v5.50h-3.40zM179.6 389.2h5.60v5.50h-5.60zM185.2 389.2h5.60v5.50h-5.60zM190.8 389.2h5.60v5.50h-5.60zM196.4 389.2h5.60v5.50h-5.60zM202.0 389.2h5.60v5.50h-5.60zM207.6 389.2h3.40v5.50h-3.40zM100.6 400.2h0.60v5.50h-0.60zM101.2 400.2h5.60v5.50h-5.60zM134.8 400.2h5.60v5.50h-5.60zM140.4 400.2h5.60v5.50h-5.60zM162.8 400.2h5.60v5.50h-5.60zM168.4 400.2h5.60v5.50h-5.60zM174.0 400.2h5.60v5.50h-5.60zM179.6 400.2h5.60v5.50h-5.60zM185.2 400.2h5.60v5.50h-5.60zM190.8 400.2h5.60v5.50h-5.60zM196.4 400.2h5.60v5.50h-5.60zM202.0 400.2h5.60v5.50h-5.60zM207.6 400.2h3.40v5.50h-3.40zM190.8 405.7h5.60v5.50h-5.60zM196.4 405.7h5.60v5.50h-5.60zM202.0 405.7h5.60v5.50h-5.60zM207.6 405.7h3.40v5.50h-3.40zM179.6 422.2h5.60v5.50h-5.60zM185.2 422.2h5.60v5.50h-5.60zM190.8 422.2h5.60v5.50h-5.60zM196.4 422.2h5.60v5.50h-5.60zM202.0 422.2h5.60v5.50h-5.60zM207.6 422.2h3.40v5.50h-3.40zM179.6 427.7h5.60v5.50h-5.60zM185.2 427.7h5.60v5.50h-5.60zM190.8 427.7h5.60v5.50h-5.60zM196.4 427.7h5.60v5.50h-5.60zM202.0 427.7h5.60v5.50h-5.60zM207.6 427.7h3.40v5.50h-3.40zM100.6 438.7h0.60v5.50h-0.60zM101.2 438.7h5.60v5.50h-5.60zM106.8 438.7h5.60v5.50h-5.60zM112.4 438.7h5.60v5.50h-5.60zM118.0 438.7h5.60v5.50h-5.60zM123.6 438.7h5.60v5.50h-5.60zM162.8 438.7h5.60v5.50h-5.60zM168.4 438.7h5.60v5.50h-5.60zM174.0 438.7h5.60v5.50h-5.60zM179.6 438.7h5.60v5.50h-5.60zM185.2 438.7h5.60v5.50h-5.60zM190.8 438.7h5.60v5.50h-5.60zM196.4 438.7h5.60v5.50h-5.60zM202.0 438.7h5.60v5.50h-5.60zM207.6 438.7h3.40v5.50h-3.40zM100.6 444.2h0.60v5.50h-0.60zM179.6 444.2h5.60v5.50h-5.60zM185.2 444.2h5.60v5.50h-5.60zM190.8 444.2h5.60v5.50h-5.60zM196.4 444.2h5.60v5.50h-5.60zM202.0 444.2h5.60v5.50h-5.60zM207.6 444.2h3.40v5.50h-3.40zM100.6 449.7h0.60v5.50h-0.60zM179.6 449.7h5.60v5.50h-5.60zM185.2 449.7h5.60v5.50h-5.60zM190.8 449.7h5.60v5.50h-5.60zM196.4 449.7h5.60v5.50h-5.60zM202.0 449.7h5.60v5.50h-5.60zM207.6 449.7h3.40v5.50h-3.40zM100.6 455.2h0.60v5.50h-0.60zM101.2 455.2h5.60v5.50h-5.60zM106.8 455.2h5.60v5.50h-5.60zM112.4 455.2h5.60v5.50h-5.60zM118.0 455.2h5.60v5.50h-5.60zM123.6 455.2h5.60v5.50h-5.60zM129.2 455.2h5.60v5.50h-5.60zM134.8 455.2h5.60v5.50h-5.60zM140.4 455.2h5.60v5.50h-5.60zM146.0 455.2h5.60v5.50h-5.60zM151.6 455.2h5.60v5.50h-5.60zM157.2 455.2h5.60v5.50h-5.60zM162.8 455.2h5.60v5.50h-5.60zM168.4 455.2h5.60v5.50h-5.60zM174.0 455.2h5.60v5.50h-5.60zM179.6 455.2h5.60v5.50h-5.60zM185.2 455.2h5.60v5.50h-5.60zM190.8 455.2h5.60v5.50h-5.60zM196.4 455.2h5.60v5.50h-5.60zM202.0 455.2h5.60v5.50h-5.60zM207.6 455.2h3.40v5.50h-3.40zM100.6 460.7h0.60v5.50h-0.60zM101.2 460.7h5.60v5.50h-5.60zM106.8 460.7h5.60v5.50h-5.60zM112.4 460.7h5.60v5.50h-5.60zM118.0 460.7h5.60v5.50h-5.60zM123.6 460.7h5.60v5.50h-5.60zM129.2 460.7h5.60v5.50h-5.60zM134.8 460.7h5.60v5.50h-5.60zM140.4 460.7h5.60v5.50h-5.60zM146.0 460.7h5.60v5.50h-5.60zM151.6 460.7h5.60v5.50h-5.60zM157.2 460.7h5.60v5.50h-5.60zM162.8 460.7h5.60v5.50h-5.60zM168.4 460.7h5.60v5.50h-5.60zM174.0 460.7h5.60v5.50h-5.60zM179.6 460.7h5.60v5.50h-5.60zM185.2 460.7h5.60v5.50h-5.60zM190.8 460.7h5.60v5.50h-5.60zM196.4 460.7h5.60v5.50h-5.60zM202.0 460.7h5.60v5.50h-5.60zM207.6 460.7h3.40v5.50h-3.40zM100.6 471.7h0.60v5.50h-0.60zM101.2 471.7h5.60v5.50h-5.60zM106.8 471.7h5.60v5.50h-5.60zM112.4 471.7h5.60v5.50h-5.60zM118.0 471.7h5.60v5.50h-5.60zM123.6 471.7h5.60v5.50h-5.60zM129.2 471.7h5.60v5.50h-5.60zM134.8 471.7h5.60v5.50h-5.60zM151.6 471.7h5.60v5.50h-5.60zM157.2 471.7h5.60v5.50h-5.60zM162.8 471.7h5.60v5.50h-5.60zM168.4 471.7h5.60v5.50h-5.60zM174.0 471.7h5.60v5.50h-5.60zM179.6 471.7h5.60v5.50h-5.60zM185.2 471.7h5.60v5.50h-5.60zM190.8 471.7h5.60v5.50h-5.60zM196.4 471.7h5.60v5.50h-5.60zM202.0 471.7h5.60v5.50h-5.60zM207.6 471.7h3.40v5.50h-3.40zM179.6 477.2h5.60v5.50h-5.60zM185.2 477.2h5.60v5.50h-5.60zM190.8 477.2h5.60v5.50h-5.60zM196.4 477.2h5.60v5.50h-5.60zM202.0 477.2h5.60v5.50h-5.60zM207.6 477.2h3.40v5.50h-3.40zM179.6 482.7h5.60v5.50h-5.60zM185.2 482.7h5.60v5.50h-5.60zM190.8 482.7h5.60v5.50h-5.60zM196.4 482.7h5.60v5.50h-5.60zM202.0 482.7h5.60v5.50h-5.60zM207.6 482.7h3.40v5.50h-3.40zM100.6 488.2h0.60v5.50h-0.60zM101.2 488.2h5.60v5.50h-5.60zM106.8 488.2h5.60v5.50h-5.60zM112.4 488.2h5.60v5.50h-5.60zM118.0 488.2h5.60v5.50h-5.60zM123.6 488.2h5.60v5.50h-5.60zM129.2 488.2h5.60v5.50h-5.60zM134.8 488.2h5.60v5.50h-5.60zM140.4 488.2h5.60v5.50h-5.60zM146.0 488.2h5.60v5.50h-5.60zM151.6 488.2h5.60v5.50h-5.60zM157.2 488.2h5.60v5.50h-5.60zM162.8 488.2h5.60v5.50h-5.60zM168.4 488.2h5.60v5.50h-5.60zM174.0 488.2h5.60v5.50h-5.60zM179.6 488.2h5.60v5.50h-5.60zM185.2 488.2h5.60v5.50h-5.60zM190.8 488.2h5.60v5.50h-5.60zM196.4 488.2h5.60v5.50h-5.60zM202.0 488.2h5.60v5.50h-5.60zM207.6 488.2h3.40v5.50h-3.40zM100.6 493.7h0.60v5.50h-0.60zM101.2 493.7h5.60v5.50h-5.60zM106.8 493.7h5.60v5.50h-5.60zM112.4 493.7h5.60v5.50h-5.60zM118.0 493.7h5.60v5.50h-5.60zM123.6 493.7h5.60v5.50h-5.60zM129.2 493.7h5.60v5.50h-5.60zM134.8 493.7h5.60v5.50h-5.60zM140.4 493.7h5.60v5.50h-5.60zM146.0 493.7h5.60v5.50h-5.60zM151.6 493.7h5.60v5.50h-5.60zM157.2 493.7h5.60v5.50h-5.60zM162.8 493.7h5.60v5.50h-5.60zM168.4 493.7h5.60v5.50h-5.60zM174.0 493.7h5.60v5.50h-5.60zM179.6 493.7h5.60v5.50h-5.60zM185.2 493.7h5.60v5.50h-5.60zM190.8 493.7h5.60v5.50h-5.60zM196.4 493.7h5.60v5.50h-5.60zM202.0 493.7h5.60v5.50h-5.60zM207.6 493.7h3.40v5.50h-3.40zM100.6 504.7h0.60v5.50h-0.60zM101.2 504.7h5.60v5.50h-5.60zM106.8 504.7h5.60v5.50h-5.60zM123.6 504.7h5.60v5.50h-5.60zM129.2 504.7h5.60v5.50h-5.60zM134.8 504.7h5.60v5.50h-5.60zM140.4 504.7h5.60v5.50h-5.60zM151.6 504.7h5.60v5.50h-5.60zM157.2 504.7h5.60v5.50h-5.60zM162.8 504.7h5.60v5.50h-5.60zM179.6 504.7h5.60v5.50h-5.60zM185.2 504.7h5.60v5.50h-5.60zM190.8 504.7h5.60v5.50h-5.60zM196.4 504.7h5.60v5.50h-5.60zM202.0 504.7h5.60v5.50h-5.60zM207.6 504.7h3.40v5.50h-3.40zM179.6 510.2h5.60v5.50h-5.60zM185.2 510.2h5.60v5.50h-5.60zM190.8 510.2h5.60v5.50h-5.60zM196.4 510.2h5.60v5.50h-5.60zM202.0 510.2h5.60v5.50h-5.60zM207.6 510.2h3.40v5.50h-3.40zM179.6 515.7h5.60v5.50h-5.60zM185.2 515.7h5.60v5.50h-5.60zM190.8 515.7h5.60v5.50h-5.60zM196.4 515.7h5.60v5.50h-5.60zM202.0 515.7h5.60v5.50h-5.60zM207.6 515.7h3.40v5.50h-3.40zM100.6 521.2h0.60v5.50h-0.60zM101.2 521.2h5.60v5.50h-5.60zM106.8 521.2h5.60v5.50h-5.60zM112.4 521.2h5.60v5.50h-5.60zM118.0 521.2h5.60v5.50h-5.60zM123.6 521.2h5.60v5.50h-5.60zM129.2 521.2h5.60v5.50h-5.60zM134.8 521.2h5.60v5.50h-5.60zM140.4 521.2h5.60v5.50h-5.60zM146.0 521.2h5.60v5.50h-5.60zM151.6 521.2h5.60v5.50h-5.60zM157.2 521.2h5.60v5.50h-5.60zM162.8 521.2h5.60v5.50h-5.60zM168.4 521.2h5.60v5.50h-5.60zM174.0 521.2h5.60v5.50h-5.60zM179.6 521.2h5.60v5.50h-5.60zM185.2 521.2h5.60v5.50h-5.60zM190.8 521.2h5.60v5.50h-5.60zM196.4 521.2h5.60v5.50h-5.60zM202.0 521.2h5.60v5.50h-5.60zM207.6 521.2h3.40v5.50h-3.40zM100.6 526.7h0.60v5.50h-0.60zM101.2 526.7h5.60v5.50h-5.60zM106.8 526.7h5.60v5.50h-5.60zM112.4 526.7h5.60v5.50h-5.60zM118.0 526.7h5.60v5.50h-5.60zM123.6 526.7h5.60v5.50h-5.60zM129.2 526.7h5.60v5.50h-5.60zM134.8 526.7h5.60v5.50h-5.60zM140.4 526.7h5.60v5.50h-5.60zM146.0 526.7h5.60v5.50h-5.60zM151.6 526.7h5.60v5.50h-5.60zM157.2 526.7h5.60v5.50h-5.60zM162.8 526.7h5.60v5.50h-5.60zM168.4 526.7h5.60v5.50h-5.60zM174.0 526.7h5.60v5.50h-5.60zM179.6 526.7h5.60v5.50h-5.60zM185.2 526.7h5.60v5.50h-5.60zM190.8 526.7h5.60v5.50h-5.60zM196.4 526.7h5.60v5.50h-5.60zM202.0 526.7h5.60v5.50h-5.60zM207.6 526.7h3.40v5.50h-3.40zM100.6 537.7h0.60v5.50h-0.60zM101.2 537.7h5.60v5.50h-5.60zM106.8 537.7h5.60v5.50h-5.60zM112.4 537.7h5.60v5.50h-5.60zM151.6 537.7h5.60v5.50h-5.60zM157.2 537.7h5.60v5.50h-5.60zM162.8 537.7h5.60v5.50h-5.60zM179.6 537.7h5.60v5.50h-5.60zM185.2 537.7h5.60v5.50h-5.60zM190.8 537.7h5.60v5.50h-5.60zM196.4 537.7h5.60v5.50h-5.60zM202.0 537.7h5.60v5.50h-5.60zM207.6 537.7h3.40v5.50h-3.40zM185.2 543.2h5.60v5.50h-5.60zM190.8 543.2h5.60v5.50h-5.60zM196.4 543.2h5.60v5.50h-5.60zM202.0 543.2h5.60v5.50h-5.60zM207.6 543.2h3.40v5.50h-3.40zM185.2 548.7h5.60v5.50h-5.60zM190.8 548.7h5.60v5.50h-5.60zM196.4 548.7h5.60v5.50h-5.60zM202.0 548.7h5.60v5.50h-5.60zM207.6 548.7h3.40v5.50h-3.40zM100.6 554.2h0.60v5.50h-0.60zM101.2 554.2h5.60v5.50h-5.60zM106.8 554.2h5.60v5.50h-5.60zM112.4 554.2h5.60v5.50h-5.60zM118.0 554.2h5.60v5.50h-5.60zM123.6 554.2h5.60v5.50h-5.60zM129.2 554.2h5.60v5.50h-5.60zM134.8 554.2h5.60v5.50h-5.60zM140.4 554.2h5.60v5.50h-5.60zM146.0 554.2h5.60v5.50h-5.60zM151.6 554.2h5.60v5.50h-5.60zM157.2 554.2h5.60v5.50h-5.60zM162.8 554.2h5.60v5.50h-5.60zM168.4 554.2h5.60v5.50h-5.60zM174.0 554.2h5.60v5.50h-5.60zM179.6 554.2h5.60v5.50h-5.60zM185.2 554.2h5.60v5.50h-5.60zM190.8 554.2h5.60v5.50h-5.60zM196.4 554.2h5.60v5.50h-5.60zM202.0 554.2h5.60v5.50h-5.60zM207.6 554.2h3.40v5.50h-3.40zM100.6 559.7h0.60v5.50h-0.60zM101.2 559.7h5.60v5.50h-5.60zM106.8 559.7h5.60v5.50h-5.60zM112.4 559.7h5.60v5.50h-5.60zM118.0 559.7h5.60v5.50h-5.60zM123.6 559.7h5.60v5.50h-5.60zM129.2 559.7h5.60v5.50h-5.60zM134.8 559.7h5.60v5.50h-5.60zM140.4 559.7h5.60v5.50h-5.60zM146.0 559.7h5.60v5.50h-5.60zM151.6 559.7h5.60v5.50h-5.60zM157.2 559.7h5.60v5.50h-5.60zM162.8 559.7h5.60v5.50h-5.60zM168.4 559.7h5.60v5.50h-5.60zM174.0 559.7h5.60v5.50h-5.60zM179.6 559.7h5.60v5.50h-5.60zM185.2 559.7h5.60v5.50h-5.60zM190.8 559.7h5.60v5.50h-5.60zM196.4 559.7h5.60v5.50h-5.60zM202.0 559.7h5.60v5.50h-5.60zM207.6 559.7h3.40v5.50h-3.40zM100.6 570.7h0.60v5.50h-0.60zM112.4 570.7h5.60v5.50h-5.60zM118.0 570.7h5.60v5.50h-5.60zM168.4 570.7h5.60v5.50h-5.60zM185.2 570.7h5.60v5.50h-5.60zM190.8 570.7h5.60v5.50h-5.60zM196.4 570.7h5.60v5.50h-5.60zM202.0 570.7h5.60v5.50h-5.60zM207.6 570.7h3.40v5.50h-3.40zM196.4 576.2h5.60v5.50h-5.60zM202.0 576.2h5.60v5.50h-5.60zM207.6 576.2h3.40v5.50h-3.40zM196.4 581.7h5.60v5.50h-5.60zM202.0 581.7h5.60v5.50h-5.60zM207.6 581.7h3.40v5.50h-3.40zM190.8 592.7h5.60v5.50h-5.60zM196.4 592.7h5.60v5.50h-5.60zM202.0 592.7h5.60v5.50h-5.60zM207.6 592.7h3.40v5.50h-3.40zM190.8 598.2h5.60v5.50h-5.60zM196.4 598.2h5.60v5.50h-5.60zM202.0 598.2h5.60v5.50h-5.60zM207.6 598.2h3.40v5.50h-3.40zM100.6 609.2h0.60v5.50h-0.60zM101.2 609.2h5.60v5.50h-5.60zM118.0 609.2h5.60v5.50h-5.60zM134.8 609.2h5.60v5.50h-5.60zM174.0 609.2h5.60v5.50h-5.60zM196.4 609.2h5.60v5.50h-5.60zM202.0 609.2h5.60v5.50h-5.60zM207.6 609.2h3.40v5.50h-3.40zM196.4 614.7h5.60v5.50h-5.60zM202.0 614.7h5.60v5.50h-5.60zM207.6 614.7h3.40v5.50h-3.40zM196.4 620.2h5.60v5.50h-5.60zM202.0 620.2h5.60v5.50h-5.60zM207.6 620.2h3.40v5.50h-3.40zM185.2 631.2h5.60v5.50h-5.60zM190.8 631.2h5.60v5.50h-5.60zM196.4 631.2h5.60v5.50h-5.60zM202.0 631.2h5.60v5.50h-5.60zM207.6 631.2h3.40v5.50h-3.40zM185.2 636.7h5.60v5.50h-5.60zM190.8 636.7h5.60v5.50h-5.60zM196.4 636.7h5.60v5.50h-5.60zM202.0 636.7h5.60v5.50h-5.60zM207.6 636.7h3.40v5.50h-3.40zM100.6 647.7h0.60v5.50h-0.60zM101.2 647.7h5.60v5.50h-5.60zM106.8 647.7h5.60v5.50h-5.60zM112.4 647.7h5.60v5.50h-5.60zM118.0 647.7h5.60v5.50h-5.60zM123.6 647.7h5.60v5.50h-5.60zM129.2 647.7h5.60v5.50h-5.60zM134.8 647.7h5.60v5.50h-5.60zM140.4 647.7h5.60v5.50h-5.60zM146.0 647.7h5.60v5.50h-5.60zM151.6 647.7h5.60v5.50h-5.60zM157.2 647.7h5.60v5.50h-5.60zM174.0 647.7h5.60v5.50h-5.60zM179.6 647.7h5.60v5.50h-5.60zM185.2 647.7h5.60v5.50h-5.60zM190.8 647.7h5.60v5.50h-5.60zM196.4 647.7h5.60v5.50h-5.60zM202.0 647.7h5.60v5.50h-5.60zM207.6 647.7h3.40v5.50h-3.40zM190.8 653.2h5.60v5.50h-5.60zM196.4 653.2h5.60v5.50h-5.60zM202.0 653.2h5.60v5.50h-5.60zM207.6 653.2h3.40v5.50h-3.40zM190.8 658.7h5.60v5.50h-5.60zM196.4 658.7h5.60v5.50h-5.60zM202.0 658.7h5.60v5.50h-5.60zM207.6 658.7h3.40v5.50h-3.40zM100.6 664.2h0.60v5.50h-0.60zM101.2 664.2h5.60v5.50h-5.60zM106.8 664.2h5.60v5.50h-5.60zM112.4 664.2h5.60v5.50h-5.60zM118.0 664.2h5.60v5.50h-5.60zM123.6 664.2h5.60v5.50h-5.60zM129.2 664.2h5.60v5.50h-5.60zM134.8 664.2h5.60v5.50h-5.60zM140.4 664.2h5.60v5.50h-5.60zM146.0 664.2h5.60v5.50h-5.60zM151.6 664.2h5.60v5.50h-5.60zM157.2 664.2h5.60v5.50h-5.60zM162.8 664.2h5.60v5.50h-5.60zM168.4 664.2h5.60v5.50h-5.60zM174.0 664.2h5.60v5.50h-5.60zM179.6 664.2h5.60v5.50h-5.60zM185.2 664.2h5.60v5.50h-5.60zM190.8 664.2h5.60v5.50h-5.60zM196.4 664.2h5.60v5.50h-5.60zM202.0 664.2h5.60v5.50h-5.60zM207.6 664.2h3.40v5.50h-3.40zM100.6 669.7h0.60v2.90h-0.60zM101.2 669.7h5.60v2.90h-5.60zM106.8 669.7h5.60v2.90h-5.60zM112.4 669.7h5.60v2.90h-5.60zM118.0 669.7h5.60v2.90h-5.60zM123.6 669.7h5.60v2.90h-5.60zM129.2 669.7h5.60v2.90h-5.60zM134.8 669.7h5.60v2.90h-5.60zM140.4 669.7h5.60v2.90h-5.60zM146.0 669.7h5.60v2.90h-5.60zM151.6 669.7h5.60v2.90h-5.60zM157.2 669.7h5.60v2.90h-5.60zM162.8 669.7h5.60v2.90h-5.60zM168.4 669.7h5.60v2.90h-5.60zM174.0 669.7h5.60v2.90h-5.60zM179.6 669.7h5.60v2.90h-5.60zM185.2 669.7h5.60v2.90h-5.60zM190.8 669.7h5.60v2.90h-5.60zM196.4 669.7h5.60v2.90h-5.60zM202.0 669.7h5.60v2.90h-5.60zM207.6 669.7h3.40v2.90h-3.40zM100.6 273.5h0.60v5.00h-0.60zM179.6 273.5h5.60v5.00h-5.60zM185.2 273.5h5.60v5.00h-5.60zM190.8 273.5h5.60v5.00h-5.60zM196.4 273.5h5.60v5.00h-5.60zM202.0 273.5h3.00v5.00h-3.00zM100.6 278.5h0.60v5.00h-0.60zM179.6 278.5h5.60v5.00h-5.60zM185.2 278.5h5.60v5.00h-5.60zM190.8 278.5h5.60v5.00h-5.60zM196.4 278.5h5.60v5.00h-5.60zM202.0 278.5h3.00v5.00h-3.00zM100.6 283.5h0.60v5.00h-0.60zM101.2 283.5h5.60v5.00h-5.60zM106.8 283.5h5.60v5.00h-5.60zM112.4 283.5h5.60v5.00h-5.60zM118.0 283.5h5.60v5.00h-5.60zM123.6 283.5h5.60v5.00h-5.60zM129.2 283.5h5.60v5.00h-5.60zM134.8 283.5h5.60v5.00h-5.60zM140.4 283.5h5.60v5.00h-5.60zM146.0 283.5h5.60v5.00h-5.60zM151.6 283.5h5.60v5.00h-5.60zM157.2 283.5h5.60v5.00h-5.60zM162.8 283.5h5.60v5.00h-5.60zM168.4 283.5h5.60v5.00h-5.60zM174.0 283.5h5.60v5.00h-5.60zM179.6 283.5h5.60v5.00h-5.60zM185.2 283.5h5.60v5.00h-5.60zM190.8 283.5h5.60v5.00h-5.60zM196.4 283.5h5.60v5.00h-5.60zM202.0 283.5h3.00v5.00h-3.00zM321.3 455.2h3.40v5.50h-3.40zM324.7 455.2h5.60v5.50h-5.60zM330.3 455.2h5.60v5.50h-5.60zM335.9 455.2h5.60v5.50h-5.60zM341.5 455.2h5.60v5.50h-5.60zM347.1 455.2h5.60v5.50h-5.60zM352.7 455.2h5.60v5.50h-5.60zM358.3 455.2h5.60v5.50h-5.60zM363.9 455.2h5.60v5.50h-5.60zM369.5 455.2h5.60v5.50h-5.60zM375.1 455.2h5.60v5.50h-5.60zM380.7 455.2h4.80v5.50h-4.80zM321.3 460.7h3.40v5.50h-3.40zM324.7 460.7h5.60v5.50h-5.60zM330.3 460.7h5.60v5.50h-5.60zM335.9 460.7h5.60v5.50h-5.60zM341.5 460.7h5.60v5.50h-5.60zM347.1 460.7h5.60v5.50h-5.60zM352.7 460.7h5.60v5.50h-5.60zM358.3 460.7h5.60v5.50h-5.60zM363.9 460.7h5.60v5.50h-5.60zM369.5 460.7h5.60v5.50h-5.60zM375.1 460.7h5.60v5.50h-5.60zM380.7 460.7h4.80v5.50h-4.80zM321.3 488.2h3.40v5.50h-3.40zM324.7 488.2h5.60v5.50h-5.60zM330.3 488.2h5.60v5.50h-5.60zM335.9 488.2h5.60v5.50h-5.60zM341.5 488.2h5.60v5.50h-5.60zM347.1 488.2h5.60v5.50h-5.60zM352.7 488.2h5.60v5.50h-5.60zM358.3 488.2h5.60v5.50h-5.60zM363.9 488.2h5.60v5.50h-5.60zM369.5 488.2h5.60v5.50h-5.60zM375.1 488.2h5.60v5.50h-5.60zM380.7 488.2h4.80v5.50h-4.80zM321.3 493.7h3.40v5.50h-3.40zM324.7 493.7h5.60v5.50h-5.60zM330.3 493.7h5.60v5.50h-5.60zM335.9 493.7h5.60v5.50h-5.60zM341.5 493.7h5.60v5.50h-5.60zM347.1 493.7h5.60v5.50h-5.60zM352.7 493.7h5.60v5.50h-5.60zM358.3 493.7h5.60v5.50h-5.60zM363.9 493.7h5.60v5.50h-5.60zM369.5 493.7h5.60v5.50h-5.60zM375.1 493.7h5.60v5.50h-5.60zM380.7 493.7h4.80v5.50h-4.80zM321.3 521.2h3.40v5.50h-3.40zM324.7 521.2h5.60v5.50h-5.60zM330.3 521.2h5.60v5.50h-5.60zM335.9 521.2h5.60v5.50h-5.60zM341.5 521.2h5.60v5.50h-5.60zM347.1 521.2h5.60v5.50h-5.60zM352.7 521.2h5.60v5.50h-5.60zM358.3 521.2h5.60v5.50h-5.60zM363.9 521.2h5.60v5.50h-5.60zM369.5 521.2h5.60v5.50h-5.60zM375.1 521.2h5.60v5.50h-5.60zM380.7 521.2h4.80v5.50h-4.80zM321.3 526.7h3.40v5.50h-3.40zM324.7 526.7h5.60v5.50h-5.60zM330.3 526.7h5.60v5.50h-5.60zM335.9 526.7h5.60v5.50h-5.60zM341.5 526.7h5.60v5.50h-5.60zM347.1 526.7h5.60v5.50h-5.60zM352.7 526.7h5.60v5.50h-5.60zM358.3 526.7h5.60v5.50h-5.60zM363.9 526.7h5.60v5.50h-5.60zM369.5 526.7h5.60v5.50h-5.60zM375.1 526.7h5.60v5.50h-5.60zM380.7 526.7h4.80v5.50h-4.80zM321.3 554.2h3.40v5.50h-3.40zM324.7 554.2h5.60v5.50h-5.60zM330.3 554.2h5.60v5.50h-5.60zM335.9 554.2h5.60v5.50h-5.60zM341.5 554.2h5.60v5.50h-5.60zM347.1 554.2h5.60v5.50h-5.60zM352.7 554.2h5.60v5.50h-5.60zM358.3 554.2h5.60v5.50h-5.60zM363.9 554.2h5.60v5.50h-5.60zM369.5 554.2h5.60v5.50h-5.60zM375.1 554.2h5.60v5.50h-5.60zM380.7 554.2h4.80v5.50h-4.80zM321.3 559.7h3.40v5.50h-3.40zM324.7 559.7h5.60v5.50h-5.60zM330.3 559.7h5.60v5.50h-5.60zM335.9 559.7h5.60v5.50h-5.60zM341.5 559.7h5.60v5.50h-5.60zM347.1 559.7h5.60v5.50h-5.60zM352.7 559.7h5.60v5.50h-5.60zM358.3 559.7h5.60v5.50h-5.60zM363.9 559.7h5.60v5.50h-5.60zM369.5 559.7h5.60v5.50h-5.60zM375.1 559.7h5.60v5.50h-5.60zM380.7 559.7h4.80v5.50h-4.80zM321.3 664.2h3.40v5.50h-3.40zM324.7 664.2h5.60v5.50h-5.60zM330.3 664.2h5.60v5.50h-5.60zM335.9 664.2h5.60v5.50h-5.60zM341.5 664.2h5.60v5.50h-5.60zM347.1 664.2h5.60v5.50h-5.60zM352.7 664.2h5.60v5.50h-5.60zM358.3 664.2h5.60v5.50h-5.60zM363.9 664.2h5.60v5.50h-5.60zM369.5 664.2h5.60v5.50h-5.60zM375.1 664.2h5.60v5.50h-5.60zM380.7 664.2h4.80v5.50h-4.80zM321.3 669.7h3.40v2.90h-3.40zM324.7 669.7h5.60v2.90h-5.60zM330.3 669.7h5.60v2.90h-5.60zM335.9 669.7h5.60v2.90h-5.60zM341.5 669.7h5.60v2.90h-5.60zM347.1 669.7h5.60v2.90h-5.60zM352.7 669.7h5.60v2.90h-5.60zM358.3 669.7h5.60v2.90h-5.60zM363.9 669.7h5.60v2.90h-5.60zM369.5 669.7h5.60v2.90h-5.60zM375.1 669.7h5.60v2.90h-5.60zM380.7 669.7h4.80v2.90h-4.80zM321.3 283.5h3.40v5.00h-3.40zM324.7 283.5h5.60v5.00h-5.60zM330.3 283.5h5.60v5.00h-5.60zM335.9 283.5h5.60v5.00h-5.60zM341.5 283.5h5.60v5.00h-5.60zM347.1 283.5h5.60v5.00h-5.60zM352.7 283.5h5.60v5.00h-5.60zM358.3 283.5h5.60v5.00h-5.60zM363.9 283.5h5.60v5.00h-5.60zM369.5 283.5h5.60v5.00h-5.60zM375.1 283.5h5.60v5.00h-5.60zM380.7 283.5h4.80v5.00h-4.80z"/><path fill="#7b93ae" d="M100.6 312.2h0.60v5.50h-0.60z"/><path fill="#849fba" d="M101.2 312.2h5.60v5.50h-5.60zM134.8 405.7h5.60v5.50h-5.60zM146.0 477.2h5.60v5.50h-5.60z"/><path fill="#81a2b7" d="M106.8 312.2h5.60v5.50h-5.60z"/><path fill="#93abc3" d="M112.4 312.2h5.60v5.50h-5.60zM157.2 328.7h5.60v5.50h-5.60zM369.5 350.7h5.60v5.50h-5.60zM335.9 389.2h5.60v5.50h-5.60zM358.3 405.7h5.60v5.50h-5.60zM347.1 422.2h5.60v5.50h-5.60zM352.7 422.2h5.60v5.50h-5.60zM358.3 422.2h5.60v5.50h-5.60zM363.9 422.2h5.60v5.50h-5.60zM341.5 427.7h5.60v5.50h-5.60zM352.7 427.7h5.60v5.50h-5.60zM335.9 592.7h5.60v5.50h-5.60zM347.1 278.5h5.60v5.00h-5.60z"/><path fill="#8199b1" d="M118.0 312.2h5.60v5.50h-5.60z"/><path fill="#aecfed" d="M123.6 312.2h5.60v5.50h-5.60zM129.2 323.2h5.60v5.50h-5.60zM134.8 449.7h5.60v5.50h-5.60zM168.4 449.7h5.60v5.50h-5.60zM174.0 449.7h5.60v5.50h-5.60zM129.2 570.7h5.60v5.50h-5.60zM106.8 592.7h5.60v5.50h-5.60z"/><path fill="#7899ab" d="M129.2 312.2h5.60v5.50h-5.60z"/><path fill="#90a8c3" d="M134.8 312.2h5.60v5.50h-5.60zM101.2 510.2h5.60v5.50h-5.60zM341.5 422.2h5.60v5.50h-5.60zM335.9 427.7h5.60v5.50h-5.60z"/><path fill="#93aec0" d="M140.4 312.2h5.60v5.50h-5.60z"/><path fill="#a2c0db" d="M146.0 312.2h5.60v5.50h-5.60zM123.6 411.2h5.60v5.50h-5.60zM100.6 631.2h0.60v5.50h-0.60zM330.3 383.7h5.60v5.50h-5.60z"/><path fill="#90a2c6" d="M151.6 312.2h5.60v5.50h-5.60zM179.6 653.2h5.60v5.50h-5.60z"/><path fill="#90a8c6" d="M157.2 312.2h5.60v5.50h-5.60zM106.8 598.2h5.60v5.50h-5.60z"/><path fill="#7e96ab" d="M162.8 312.2h5.60v5.50h-5.60zM101.2 636.7h5.60v5.50h-5.60zM330.3 636.7h5.60v5.50h-5.60z"/><path fill="#818aae" d="M168.4 312.2h5.60v5.50h-5.60z"/><path fill="#8796ba" d="M174.0 312.2h5.60v5.50h-5.60z"/><path fill="#90aec9" d="M179.6 312.2h5.60v5.50h-5.60z"/><path fill="#9fb7cf" d="M185.2 312.2h5.60v5.50h-5.60z"/><path fill="#d5eaff" d="M100.6 317.7h0.60v5.50h-0.60zM112.4 317.7h5.60v5.50h-5.60zM118.0 317.7h5.60v5.50h-5.60zM134.8 317.7h5.60v5.50h-5.60zM140.4 317.7h5.60v5.50h-5.60zM146.0 317.7h5.60v5.50h-5.60zM151.6 317.7h5.60v5.50h-5.60zM157.2 317.7h5.60v5.50h-5.60zM179.6 317.7h5.60v5.50h-5.60zM185.2 317.7h5.60v5.50h-5.60zM190.8 317.7h5.60v5.50h-5.60zM196.4 317.7h5.60v5.50h-5.60zM202.0 317.7h5.60v5.50h-5.60zM207.6 317.7h3.40v5.50h-3.40zM100.6 356.2h0.60v5.50h-0.60zM101.2 356.2h5.60v5.50h-5.60zM106.8 356.2h5.60v5.50h-5.60zM112.4 356.2h5.60v5.50h-5.60zM118.0 356.2h5.60v5.50h-5.60zM123.6 356.2h5.60v5.50h-5.60zM129.2 356.2h5.60v5.50h-5.60zM134.8 356.2h5.60v5.50h-5.60zM140.4 356.2h5.60v5.50h-5.60zM146.0 356.2h5.60v5.50h-5.60zM162.8 356.2h5.60v5.50h-5.60zM168.4 356.2h5.60v5.50h-5.60zM174.0 356.2h5.60v5.50h-5.60zM190.8 356.2h5.60v5.50h-5.60zM196.4 356.2h5.60v5.50h-5.60zM202.0 356.2h5.60v5.50h-5.60zM207.6 356.2h3.40v5.50h-3.40zM100.6 394.7h0.60v5.50h-0.60zM101.2 394.7h5.60v5.50h-5.60zM118.0 394.7h5.60v5.50h-5.60zM123.6 394.7h5.60v5.50h-5.60zM129.2 394.7h5.60v5.50h-5.60zM134.8 394.7h5.60v5.50h-5.60zM140.4 394.7h5.60v5.50h-5.60zM146.0 394.7h5.60v5.50h-5.60zM151.6 394.7h5.60v5.50h-5.60zM157.2 394.7h5.60v5.50h-5.60zM162.8 394.7h5.60v5.50h-5.60zM179.6 394.7h5.60v5.50h-5.60zM185.2 394.7h5.60v5.50h-5.60zM190.8 394.7h5.60v5.50h-5.60zM196.4 394.7h5.60v5.50h-5.60zM202.0 394.7h5.60v5.50h-5.60zM207.6 394.7h3.40v5.50h-3.40zM100.6 433.2h0.60v5.50h-0.60zM101.2 433.2h5.60v5.50h-5.60zM106.8 433.2h5.60v5.50h-5.60zM112.4 433.2h5.60v5.50h-5.60zM118.0 433.2h5.60v5.50h-5.60zM123.6 433.2h5.60v5.50h-5.60zM129.2 433.2h5.60v5.50h-5.60zM134.8 433.2h5.60v5.50h-5.60zM140.4 433.2h5.60v5.50h-5.60zM146.0 433.2h5.60v5.50h-5.60zM151.6 433.2h5.60v5.50h-5.60zM157.2 433.2h5.60v5.50h-5.60zM162.8 433.2h5.60v5.50h-5.60zM168.4 433.2h5.60v5.50h-5.60zM174.0 433.2h5.60v5.50h-5.60zM179.6 433.2h5.60v5.50h-5.60zM185.2 433.2h5.60v5.50h-5.60zM190.8 433.2h5.60v5.50h-5.60zM196.4 433.2h5.60v5.50h-5.60zM202.0 433.2h5.60v5.50h-5.60zM207.6 433.2h3.40v5.50h-3.40zM100.6 466.2h0.60v5.50h-0.60zM101.2 466.2h5.60v5.50h-5.60zM106.8 466.2h5.60v5.50h-5.60zM112.4 466.2h5.60v5.50h-5.60zM118.0 466.2h5.60v5.50h-5.60zM123.6 466.2h5.60v5.50h-5.60zM129.2 466.2h5.60v5.50h-5.60zM134.8 466.2h5.60v5.50h-5.60zM140.4 466.2h5.60v5.50h-5.60zM146.0 466.2h5.60v5.50h-5.60zM151.6 466.2h5.60v5.50h-5.60zM157.2 466.2h5.60v5.50h-5.60zM162.8 466.2h5.60v5.50h-5.60zM168.4 466.2h5.60v5.50h-5.60zM174.0 466.2h5.60v5.50h-5.60zM179.6 466.2h5.60v5.50h-5.60zM185.2 466.2h5.60v5.50h-5.60zM190.8 466.2h5.60v5.50h-5.60zM196.4 466.2h5.60v5.50h-5.60zM202.0 466.2h5.60v5.50h-5.60zM207.6 466.2h3.40v5.50h-3.40zM100.6 499.2h0.60v5.50h-0.60zM101.2 499.2h5.60v5.50h-5.60zM106.8 499.2h5.60v5.50h-5.60zM112.4 499.2h5.60v5.50h-5.60zM118.0 499.2h5.60v5.50h-5.60zM123.6 499.2h5.60v5.50h-5.60zM129.2 499.2h5.60v5.50h-5.60zM134.8 499.2h5.60v5.50h-5.60zM140.4 499.2h5.60v5.50h-5.60zM146.0 499.2h5.60v5.50h-5.60zM151.6 499.2h5.60v5.50h-5.60zM157.2 499.2h5.60v5.50h-5.60zM162.8 499.2h5.60v5.50h-5.60zM168.4 499.2h5.60v5.50h-5.60zM174.0 499.2h5.60v5.50h-5.60zM179.6 499.2h5.60v5.50h-5.60zM185.2 499.2h5.60v5.50h-5.60zM190.8 499.2h5.60v5.50h-5.60zM196.4 499.2h5.60v5.50h-5.60zM202.0 499.2h5.60v5.50h-5.60zM207.6 499.2h3.40v5.50h-3.40zM100.6 532.2h0.60v5.50h-0.60zM101.2 532.2h5.60v5.50h-5.60zM106.8 532.2h5.60v5.50h-5.60zM112.4 532.2h5.60v5.50h-5.60zM118.0 532.2h5.60v5.50h-5.60zM123.6 532.2h5.60v5.50h-5.60zM129.2 532.2h5.60v5.50h-5.60zM134.8 532.2h5.60v5.50h-5.60zM140.4 532.2h5.60v5.50h-5.60zM146.0 532.2h5.60v5.50h-5.60zM151.6 532.2h5.60v5.50h-5.60zM157.2 532.2h5.60v5.50h-5.60zM162.8 532.2h5.60v5.50h-5.60zM168.4 532.2h5.60v5.50h-5.60zM174.0 532.2h5.60v5.50h-5.60zM179.6 532.2h5.60v5.50h-5.60zM185.2 532.2h5.60v5.50h-5.60zM190.8 532.2h5.60v5.50h-5.60zM196.4 532.2h5.60v5.50h-5.60zM202.0 532.2h5.60v5.50h-5.60zM207.6 532.2h3.40v5.50h-3.40zM100.6 565.2h0.60v5.50h-0.60zM101.2 565.2h5.60v5.50h-5.60zM106.8 565.2h5.60v5.50h-5.60zM112.4 565.2h5.60v5.50h-5.60zM118.0 565.2h5.60v5.50h-5.60zM123.6 565.2h5.60v5.50h-5.60zM129.2 565.2h5.60v5.50h-5.60zM134.8 565.2h5.60v5.50h-5.60zM140.4 565.2h5.60v5.50h-5.60zM146.0 565.2h5.60v5.50h-5.60zM151.6 565.2h5.60v5.50h-5.60zM157.2 565.2h5.60v5.50h-5.60zM162.8 565.2h5.60v5.50h-5.60zM168.4 565.2h5.60v5.50h-5.60zM174.0 565.2h5.60v5.50h-5.60zM179.6 565.2h5.60v5.50h-5.60zM185.2 565.2h5.60v5.50h-5.60zM190.8 565.2h5.60v5.50h-5.60zM196.4 565.2h5.60v5.50h-5.60zM202.0 565.2h5.60v5.50h-5.60zM207.6 565.2h3.40v5.50h-3.40zM100.6 587.2h0.60v5.50h-0.60zM101.2 587.2h5.60v5.50h-5.60zM106.8 587.2h5.60v5.50h-5.60zM112.4 587.2h5.60v5.50h-5.60zM118.0 587.2h5.60v5.50h-5.60zM123.6 587.2h5.60v5.50h-5.60zM129.2 587.2h5.60v5.50h-5.60zM134.8 587.2h5.60v5.50h-5.60zM140.4 587.2h5.60v5.50h-5.60zM146.0 587.2h5.60v5.50h-5.60zM151.6 587.2h5.60v5.50h-5.60zM157.2 587.2h5.60v5.50h-5.60zM162.8 587.2h5.60v5.50h-5.60zM168.4 587.2h5.60v5.50h-5.60zM174.0 587.2h5.60v5.50h-5.60zM179.6 587.2h5.60v5.50h-5.60zM185.2 587.2h5.60v5.50h-5.60zM190.8 587.2h5.60v5.50h-5.60zM196.4 587.2h5.60v5.50h-5.60zM202.0 587.2h5.60v5.50h-5.60zM207.6 587.2h3.40v5.50h-3.40zM100.6 603.7h0.60v5.50h-0.60zM101.2 603.7h5.60v5.50h-5.60zM106.8 603.7h5.60v5.50h-5.60zM112.4 603.7h5.60v5.50h-5.60zM118.0 603.7h5.60v5.50h-5.60zM123.6 603.7h5.60v5.50h-5.60zM140.4 603.7h5.60v5.50h-5.60zM146.0 603.7h5.60v5.50h-5.60zM151.6 603.7h5.60v5.50h-5.60zM157.2 603.7h5.60v5.50h-5.60zM162.8 603.7h5.60v5.50h-5.60zM168.4 603.7h5.60v5.50h-5.60zM174.0 603.7h5.60v5.50h-5.60zM179.6 603.7h5.60v5.50h-5.60zM185.2 603.7h5.60v5.50h-5.60zM190.8 603.7h5.60v5.50h-5.60zM196.4 603.7h5.60v5.50h-5.60zM202.0 603.7h5.60v5.50h-5.60zM207.6 603.7h3.40v5.50h-3.40zM100.6 625.7h0.60v5.50h-0.60zM101.2 625.7h5.60v5.50h-5.60zM106.8 625.7h5.60v5.50h-5.60zM112.4 625.7h5.60v5.50h-5.60zM118.0 625.7h5.60v5.50h-5.60zM123.6 625.7h5.60v5.50h-5.60zM129.2 625.7h5.60v5.50h-5.60zM134.8 625.7h5.60v5.50h-5.60zM140.4 625.7h5.60v5.50h-5.60zM146.0 625.7h5.60v5.50h-5.60zM151.6 625.7h5.60v5.50h-5.60zM157.2 625.7h5.60v5.50h-5.60zM162.8 625.7h5.60v5.50h-5.60zM168.4 625.7h5.60v5.50h-5.60zM174.0 625.7h5.60v5.50h-5.60zM179.6 625.7h5.60v5.50h-5.60zM185.2 625.7h5.60v5.50h-5.60zM190.8 625.7h5.60v5.50h-5.60zM196.4 625.7h5.60v5.50h-5.60zM202.0 625.7h5.60v5.50h-5.60zM207.6 625.7h3.40v5.50h-3.40zM100.6 642.2h0.60v5.50h-0.60zM112.4 642.2h5.60v5.50h-5.60zM118.0 642.2h5.60v5.50h-5.60zM134.8 642.2h5.60v5.50h-5.60zM140.4 642.2h5.60v5.50h-5.60zM146.0 642.2h5.60v5.50h-5.60zM151.6 642.2h5.60v5.50h-5.60zM168.4 642.2h5.60v5.50h-5.60zM174.0 642.2h5.60v5.50h-5.60zM179.6 642.2h5.60v5.50h-5.60zM185.2 642.2h5.60v5.50h-5.60zM190.8 642.2h5.60v5.50h-5.60zM196.4 642.2h5.60v5.50h-5.60zM202.0 642.2h5.60v5.50h-5.60zM207.6 642.2h3.40v5.50h-3.40zM321.3 317.7h3.40v5.50h-3.40zM324.7 317.7h5.60v5.50h-5.60zM330.3 317.7h5.60v5.50h-5.60zM335.9 317.7h5.60v5.50h-5.60zM341.5 317.7h5.60v5.50h-5.60zM347.1 317.7h5.60v5.50h-5.60zM352.7 317.7h5.60v5.50h-5.60zM358.3 317.7h5.60v5.50h-5.60zM363.9 317.7h5.60v5.50h-5.60zM369.5 317.7h5.60v5.50h-5.60zM375.1 317.7h5.60v5.50h-5.60zM380.7 317.7h4.80v5.50h-4.80zM321.3 356.2h3.40v5.50h-3.40zM324.7 356.2h5.60v5.50h-5.60zM330.3 356.2h5.60v5.50h-5.60zM335.9 356.2h5.60v5.50h-5.60zM341.5 356.2h5.60v5.50h-5.60zM347.1 356.2h5.60v5.50h-5.60zM352.7 356.2h5.60v5.50h-5.60zM358.3 356.2h5.60v5.50h-5.60zM363.9 356.2h5.60v5.50h-5.60zM369.5 356.2h5.60v5.50h-5.60zM375.1 356.2h5.60v5.50h-5.60zM380.7 356.2h4.80v5.50h-4.80zM321.3 394.7h3.40v5.50h-3.40zM324.7 394.7h5.60v5.50h-5.60zM330.3 394.7h5.60v5.50h-5.60zM335.9 394.7h5.60v5.50h-5.60zM341.5 394.7h5.60v5.50h-5.60zM347.1 394.7h5.60v5.50h-5.60zM352.7 394.7h5.60v5.50h-5.60zM358.3 394.7h5.60v5.50h-5.60zM363.9 394.7h5.60v5.50h-5.60zM369.5 394.7h5.60v5.50h-5.60zM375.1 394.7h5.60v5.50h-5.60zM380.7 394.7h4.80v5.50h-4.80zM321.3 433.2h3.40v5.50h-3.40zM324.7 433.2h5.60v5.50h-5.60zM330.3 433.2h5.60v5.50h-5.60zM335.9 433.2h5.60v5.50h-5.60zM341.5 433.2h5.60v5.50h-5.60zM347.1 433.2h5.60v5.50h-5.60zM352.7 433.2h5.60v5.50h-5.60zM358.3 433.2h5.60v5.50h-5.60zM363.9 433.2h5.60v5.50h-5.60zM369.5 433.2h5.60v5.50h-5.60zM375.1 433.2h5.60v5.50h-5.60zM380.7 433.2h4.80v5.50h-4.80zM321.3 466.2h3.40v5.50h-3.40zM324.7 466.2h5.60v5.50h-5.60zM330.3 466.2h5.60v5.50h-5.60zM335.9 466.2h5.60v5.50h-5.60zM341.5 466.2h5.60v5.50h-5.60zM347.1 466.2h5.60v5.50h-5.60zM352.7 466.2h5.60v5.50h-5.60zM358.3 466.2h5.60v5.50h-5.60zM363.9 466.2h5.60v5.50h-5.60zM369.5 466.2h5.60v5.50h-5.60zM375.1 466.2h5.60v5.50h-5.60zM380.7 466.2h4.80v5.50h-4.80zM321.3 499.2h3.40v5.50h-3.40zM324.7 499.2h5.60v5.50h-5.60zM330.3 499.2h5.60v5.50h-5.60zM335.9 499.2h5.60v5.50h-5.60zM341.5 499.2h5.60v5.50h-5.60zM347.1 499.2h5.60v5.50h-5.60zM352.7 499.2h5.60v5.50h-5.60zM358.3 499.2h5.60v5.50h-5.60zM363.9 499.2h5.60v5.50h-5.60zM369.5 499.2h5.60v5.50h-5.60zM375.1 499.2h5.60v5.50h-5.60zM380.7 499.2h4.80v5.50h-4.80zM321.3 532.2h3.40v5.50h-3.40zM324.7 532.2h5.60v5.50h-5.60zM330.3 532.2h5.60v5.50h-5.60zM335.9 532.2h5.60v5.50h-5.60zM341.5 532.2h5.60v5.50h-5.60zM347.1 532.2h5.60v5.50h-5.60zM352.7 532.2h5.60v5.50h-5.60zM358.3 532.2h5.60v5.50h-5.60zM363.9 532.2h5.60v5.50h-5.60zM369.5 532.2h5.60v5.50h-5.60zM375.1 532.2h5.60v5.50h-5.60zM380.7 532.2h4.80v5.50h-4.80zM321.3 565.2h3.40v5.50h-3.40zM324.7 565.2h5.60v5.50h-5.60zM330.3 565.2h5.60v5.50h-5.60zM335.9 565.2h5.60v5.50h-5.60zM341.5 565.2h5.60v5.50h-5.60zM347.1 565.2h5.60v5.50h-5.60zM352.7 565.2h5.60v5.50h-5.60zM358.3 565.2h5.60v5.50h-5.60zM363.9 565.2h5.60v5.50h-5.60zM369.5 565.2h5.60v5.50h-5.60zM375.1 565.2h5.60v5.50h-5.60zM380.7 565.2h4.80v5.50h-4.80zM321.3 587.2h3.40v5.50h-3.40zM324.7 587.2h5.60v5.50h-5.60zM330.3 587.2h5.60v5.50h-5.60zM335.9 587.2h5.60v5.50h-5.60zM341.5 587.2h5.60v5.50h-5.60zM347.1 587.2h5.60v5.50h-5.60zM352.7 587.2h5.60v5.50h-5.60zM358.3 587.2h5.60v5.50h-5.60zM363.9 587.2h5.60v5.50h-5.60zM369.5 587.2h5.60v5.50h-5.60zM375.1 587.2h5.60v5.50h-5.60zM380.7 587.2h4.80v5.50h-4.80zM321.3 603.7h3.40v5.50h-3.40zM324.7 603.7h5.60v5.50h-5.60zM330.3 603.7h5.60v5.50h-5.60zM335.9 603.7h5.60v5.50h-5.60zM341.5 603.7h5.60v5.50h-5.60zM347.1 603.7h5.60v5.50h-5.60zM352.7 603.7h5.60v5.50h-5.60zM358.3 603.7h5.60v5.50h-5.60zM363.9 603.7h5.60v5.50h-5.60zM369.5 603.7h5.60v5.50h-5.60zM375.1 603.7h5.60v5.50h-5.60zM380.7 603.7h4.80v5.50h-4.80zM321.3 625.7h3.40v5.50h-3.40zM324.7 625.7h5.60v5.50h-5.60zM330.3 625.7h5.60v5.50h-5.60zM335.9 625.7h5.60v5.50h-5.60zM341.5 625.7h5.60v5.50h-5.60zM347.1 625.7h5.60v5.50h-5.60zM352.7 625.7h5.60v5.50h-5.60zM358.3 625.7h5.60v5.50h-5.60zM363.9 625.7h5.60v5.50h-5.60zM369.5 625.7h5.60v5.50h-5.60zM375.1 625.7h5.60v5.50h-5.60zM380.7 625.7h4.80v5.50h-4.80zM321.3 642.2h3.40v5.50h-3.40zM324.7 642.2h5.60v5.50h-5.60zM330.3 642.2h5.60v5.50h-5.60zM335.9 642.2h5.60v5.50h-5.60zM341.5 642.2h5.60v5.50h-5.60zM347.1 642.2h5.60v5.50h-5.60zM352.7 642.2h5.60v5.50h-5.60zM358.3 642.2h5.60v5.50h-5.60zM363.9 642.2h5.60v5.50h-5.60zM369.5 642.2h5.60v5.50h-5.60zM375.1 642.2h5.60v5.50h-5.60zM380.7 642.2h4.80v5.50h-4.80z"/><path fill="#d5e7fc" d="M101.2 317.7h5.60v5.50h-5.60zM157.2 356.2h5.60v5.50h-5.60z"/><path fill="#c9def0" d="M106.8 317.7h5.60v5.50h-5.60z"/><path fill="#d5eafc" d="M123.6 317.7h5.60v5.50h-5.60zM179.6 356.2h5.60v5.50h-5.60zM168.4 394.7h5.60v5.50h-5.60zM101.2 642.2h5.60v5.50h-5.60z"/><path fill="#c9deed" d="M129.2 317.7h5.60v5.50h-5.60z"/><path fill="#ccdef3" d="M162.8 317.7h5.60v5.50h-5.60zM174.0 317.7h5.60v5.50h-5.60zM129.2 642.2h5.60v5.50h-5.60z"/><path fill="#c6d5ea" d="M168.4 317.7h5.60v5.50h-5.60zM151.6 356.2h5.60v5.50h-5.60z"/><path fill="#b1cff0" d="M100.6 323.2h0.60v5.50h-0.60zM146.0 323.2h5.60v5.50h-5.60zM168.4 345.2h5.60v5.50h-5.60zM151.6 361.7h5.60v5.50h-5.60zM134.8 537.7h5.60v5.50h-5.60zM151.6 598.2h5.60v5.50h-5.60zM162.8 658.7h5.60v5.50h-5.60z"/><path fill="#b7d5f3" d="M101.2 323.2h5.60v5.50h-5.60zM118.0 383.7h5.60v5.50h-5.60zM112.4 422.2h5.60v5.50h-5.60zM162.8 609.2h5.60v5.50h-5.60zM352.7 345.2h5.60v5.50h-5.60zM352.7 350.7h5.60v5.50h-5.60zM358.3 350.7h5.60v5.50h-5.60zM363.9 372.7h5.60v5.50h-5.60zM321.3 400.2h3.40v5.50h-3.40zM324.7 400.2h5.60v5.50h-5.60zM375.1 400.2h5.60v5.50h-5.60zM380.7 400.2h4.80v5.50h-4.80zM347.1 438.7h5.60v5.50h-5.60zM363.9 449.7h5.60v5.50h-5.60zM380.7 449.7h4.80v5.50h-4.80zM321.3 482.7h3.40v5.50h-3.40zM352.7 504.7h5.60v5.50h-5.60zM375.1 504.7h5.60v5.50h-5.60zM375.1 515.7h5.60v5.50h-5.60zM363.9 537.7h5.60v5.50h-5.60zM375.1 548.7h5.60v5.50h-5.60zM330.3 570.7h5.60v5.50h-5.60zM380.7 570.7h4.80v5.50h-4.80zM321.3 581.7h3.40v5.50h-3.40zM335.9 581.7h5.60v5.50h-5.60zM380.7 598.2h4.80v5.50h-4.80zM321.3 609.2h3.40v5.50h-3.40zM358.3 647.7h5.60v5.50h-5.60zM324.7 658.7h5.60v5.50h-5.60zM363.9 658.7h5.60v5.50h-5.60zM369.5 658.7h5.60v5.50h-5.60z"/><path fill="#b1d2ed" d="M123.6 323.2h5.60v5.50h-5.60zM162.8 323.2h5.60v5.50h-5.60zM140.4 570.7h5.60v5.50h-5.60z"/><path fill="#b4d2f3" d="M134.8 323.2h5.60v5.50h-5.60zM162.8 361.7h5.60v5.50h-5.60zM162.8 570.7h5.60v5.50h-5.60zM190.8 576.2h5.60v5.50h-5.60zM112.4 609.2h5.60v5.50h-5.60zM358.3 345.2h5.60v5.50h-5.60zM380.7 361.7h4.80v5.50h-4.80zM341.5 477.2h5.60v5.50h-5.60zM363.9 548.7h5.60v5.50h-5.60zM380.7 653.2h4.80v5.50h-4.80z"/><path fill="#aecfea" d="M168.4 323.2h5.60v5.50h-5.60zM129.2 438.7h5.60v5.50h-5.60z"/><path fill="#7590ab" d="M100.6 328.7h0.60v5.50h-0.60z"/><path fill="#87a2bd" d="M101.2 328.7h5.60v5.50h-5.60zM140.4 477.2h5.60v5.50h-5.60z"/><path fill="#90a5c9" d="M106.8 328.7h5.60v5.50h-5.60z"/><path fill="#879fcc" d="M112.4 328.7h5.60v5.50h-5.60z"/><path fill="#8496a8" d="M118.0 328.7h5.60v5.50h-5.60z"/><path fill="#7e9cab" d="M123.6 328.7h5.60v5.50h-5.60z"/><path fill="#84a2ba" d="M129.2 328.7h5.60v5.50h-5.60zM112.4 510.2h5.60v5.50h-5.60z"/><path fill="#849cbd" d="M134.8 328.7h5.60v5.50h-5.60zM123.6 636.7h5.60v5.50h-5.60z"/><path fill="#7e93ab" d="M140.4 328.7h5.60v5.50h-5.60zM363.9 510.2h5.60v5.50h-5.60z"/><path fill="#81a2ba" d="M146.0 328.7h5.60v5.50h-5.60z"/><path fill="#849fbd" d="M151.6 328.7h5.60v5.50h-5.60zM157.2 477.2h5.60v5.50h-5.60z"/><path fill="#84a2b4" d="M162.8 328.7h5.60v5.50h-5.60zM179.6 576.2h5.60v5.50h-5.60z"/><path fill="#84a5b1" d="M168.4 328.7h5.60v5.50h-5.60zM140.4 576.2h5.60v5.50h-5.60z"/><path fill="#90aec0" d="M174.0 328.7h5.60v5.50h-5.60zM112.4 389.2h5.60v5.50h-5.60z"/><path fill="#bddeff" d="M179.6 328.7h5.60v5.50h-5.60zM101.2 570.7h5.60v5.50h-5.60zM123.6 570.7h5.60v5.50h-5.60z"/><path fill="#bddefc" d="M100.6 334.2h0.60v5.50h-0.60zM162.8 345.2h5.60v5.50h-5.60zM146.0 471.7h5.60v5.50h-5.60zM168.4 609.2h5.60v5.50h-5.60zM157.2 658.7h5.60v5.50h-5.60zM321.3 449.7h3.40v5.50h-3.40zM335.9 449.7h5.60v5.50h-5.60zM341.5 471.7h5.60v5.50h-5.60zM324.7 537.7h5.60v5.50h-5.60zM375.1 647.7h5.60v5.50h-5.60z"/><path fill="#b1cfea" d="M101.2 334.2h5.60v5.50h-5.60zM129.2 334.2h5.60v5.50h-5.60zM140.4 372.7h5.60v5.50h-5.60zM118.0 389.2h5.60v5.50h-5.60zM157.2 411.2h5.60v5.50h-5.60zM118.0 449.7h5.60v5.50h-5.60zM174.0 482.7h5.60v5.50h-5.60zM185.2 609.2h5.60v5.50h-5.60zM190.8 620.2h5.60v5.50h-5.60zM157.2 631.2h5.60v5.50h-5.60zM123.6 273.5h5.60v5.00h-5.60zM341.5 334.2h5.60v5.50h-5.60zM324.7 383.7h5.60v5.50h-5.60zM335.9 411.2h5.60v5.50h-5.60zM341.5 411.2h5.60v5.50h-5.60zM352.7 515.7h5.60v5.50h-5.60zM347.1 581.7h5.60v5.50h-5.60zM352.7 581.7h5.60v5.50h-5.60zM358.3 598.2h5.60v5.50h-5.60zM324.7 636.7h5.60v5.50h-5.60z"/><path fill="#aec9ed" d="M112.4 334.2h5.60v5.50h-5.60zM151.6 449.7h5.60v5.50h-5.60z"/><path fill="#aec9e1" d="M118.0 334.2h5.60v5.50h-5.60z"/><path fill="#aecce7" d="M123.6 334.2h5.60v5.50h-5.60zM101.2 548.7h5.60v5.50h-5.60zM129.2 598.2h5.60v5.50h-5.60zM123.6 658.7h5.60v5.50h-5.60zM330.3 323.2h5.60v5.50h-5.60zM347.1 361.7h5.60v5.50h-5.60zM330.3 477.2h5.60v5.50h-5.60zM380.7 477.2h4.80v5.50h-4.80zM347.1 504.7h5.60v5.50h-5.60zM341.5 543.2h5.60v5.50h-5.60zM375.1 581.7h5.60v5.50h-5.60zM352.7 620.2h5.60v5.50h-5.60zM375.1 620.2h5.60v5.50h-5.60zM375.1 631.2h5.60v5.50h-5.60zM369.5 636.7h5.60v5.50h-5.60zM369.5 653.2h5.60v5.50h-5.60z"/><path fill="#b1cfed" d="M134.8 334.2h5.60v5.50h-5.60zM146.0 334.2h5.60v5.50h-5.60zM151.6 372.7h5.60v5.50h-5.60zM123.6 389.2h5.60v5.50h-5.60zM140.4 449.7h5.60v5.50h-5.60zM151.6 570.7h5.60v5.50h-5.60zM157.2 570.7h5.60v5.50h-5.60zM129.2 592.7h5.60v5.50h-5.60zM129.2 609.2h5.60v5.50h-5.60zM168.4 614.7h5.60v5.50h-5.60zM112.4 658.7h5.60v5.50h-5.60zM140.4 273.5h5.60v5.00h-5.60zM162.8 273.5h5.60v5.00h-5.60zM324.7 306.7h5.60v5.50h-5.60zM324.7 323.2h5.60v5.50h-5.60zM341.5 323.2h5.60v5.50h-5.60zM347.1 323.2h5.60v5.50h-5.60zM358.3 361.7h5.60v5.50h-5.60zM369.5 383.7h5.60v5.50h-5.60zM324.7 389.2h5.60v5.50h-5.60zM369.5 389.2h5.60v5.50h-5.60zM330.3 400.2h5.60v5.50h-5.60zM341.5 400.2h5.60v5.50h-5.60zM347.1 400.2h5.60v5.50h-5.60zM358.3 400.2h5.60v5.50h-5.60zM369.5 400.2h5.60v5.50h-5.60zM352.7 438.7h5.60v5.50h-5.60zM347.1 477.2h5.60v5.50h-5.60zM341.5 504.7h5.60v5.50h-5.60zM358.3 504.7h5.60v5.50h-5.60zM369.5 504.7h5.60v5.50h-5.60zM330.3 537.7h5.60v5.50h-5.60zM324.7 543.2h5.60v5.50h-5.60zM369.5 548.7h5.60v5.50h-5.60zM347.1 570.7h5.60v5.50h-5.60zM363.9 570.7h5.60v5.50h-5.60zM375.1 570.7h5.60v5.50h-5.60zM330.3 581.7h5.60v5.50h-5.60zM380.7 581.7h4.80v5.50h-4.80zM321.3 598.2h3.40v5.50h-3.40zM375.1 609.2h5.60v5.50h-5.60zM324.7 614.7h5.60v5.50h-5.60zM335.9 620.2h5.60v5.50h-5.60zM369.5 631.2h5.60v5.50h-5.60zM375.1 653.2h5.60v5.50h-5.60zM347.1 658.7h5.60v5.50h-5.60zM352.7 658.7h5.60v5.50h-5.60z"/><path fill="#abc6e1" d="M140.4 334.2h5.60v5.50h-5.60zM140.4 620.2h5.60v5.50h-5.60zM330.3 444.2h5.60v5.50h-5.60zM363.9 515.7h5.60v5.50h-5.60zM363.9 620.2h5.60v5.50h-5.60z"/><path fill="#96b1cf" d="M151.6 334.2h5.60v5.50h-5.60zM146.0 427.7h5.60v5.50h-5.60z"/><path fill="#b4d2ed" d="M157.2 334.2h5.60v5.50h-5.60zM157.2 372.7h5.60v5.50h-5.60zM101.2 411.2h5.60v5.50h-5.60zM324.7 312.2h5.60v5.50h-5.60zM324.7 334.2h5.60v5.50h-5.60zM335.9 334.2h5.60v5.50h-5.60zM352.7 334.2h5.60v5.50h-5.60zM363.9 334.2h5.60v5.50h-5.60zM358.3 372.7h5.60v5.50h-5.60zM347.1 411.2h5.60v5.50h-5.60zM358.3 411.2h5.60v5.50h-5.60zM358.3 449.7h5.60v5.50h-5.60zM369.5 449.7h5.60v5.50h-5.60zM352.7 537.7h5.60v5.50h-5.60zM352.7 609.2h5.60v5.50h-5.60z"/><path fill="#96b1c6" d="M162.8 334.2h5.60v5.50h-5.60zM174.0 653.2h5.60v5.50h-5.60z"/><path fill="#99b7c6" d="M168.4 334.2h5.60v5.50h-5.60z"/><path fill="#a5c3db" d="M174.0 334.2h5.60v5.50h-5.60zM100.6 482.7h0.60v5.50h-0.60z"/><path fill="#c3e1ff" d="M179.6 334.2h5.60v5.50h-5.60zM185.2 334.2h5.60v5.50h-5.60zM190.8 334.2h5.60v5.50h-5.60zM196.4 334.2h5.60v5.50h-5.60zM202.0 334.2h5.60v5.50h-5.60zM207.6 334.2h3.40v5.50h-3.40zM185.2 372.7h5.60v5.50h-5.60zM190.8 372.7h5.60v5.50h-5.60zM196.4 372.7h5.60v5.50h-5.60zM202.0 372.7h5.60v5.50h-5.60zM207.6 372.7h3.40v5.50h-3.40zM190.8 411.2h5.60v5.50h-5.60zM196.4 411.2h5.60v5.50h-5.60zM202.0 411.2h5.60v5.50h-5.60zM207.6 411.2h3.40v5.50h-3.40z"/><path fill="#b1d2f3" d="M101.2 345.2h5.60v5.50h-5.60z"/><path fill="#a5c6e1" d="M106.8 345.2h5.60v5.50h-5.60zM140.4 422.2h5.60v5.50h-5.60zM134.8 620.2h5.60v5.50h-5.60z"/><path fill="#a5c3de" d="M112.4 345.2h5.60v5.50h-5.60zM134.8 345.2h5.60v5.50h-5.60zM146.0 548.7h5.60v5.50h-5.60zM129.2 658.7h5.60v5.50h-5.60zM134.8 658.7h5.60v5.50h-5.60zM140.4 658.7h5.60v5.50h-5.60zM129.2 278.5h5.60v5.00h-5.60zM321.3 361.7h3.40v5.50h-3.40zM341.5 367.2h5.60v5.50h-5.60zM380.7 389.2h4.80v5.50h-4.80zM380.7 444.2h4.80v5.50h-4.80zM380.7 510.2h4.80v5.50h-4.80zM358.3 543.2h5.60v5.50h-5.60zM335.9 576.2h5.60v5.50h-5.60zM347.1 620.2h5.60v5.50h-5.60zM324.7 273.5h5.60v5.00h-5.60z"/><path fill="#abc6e7" d="M118.0 345.2h5.60v5.50h-5.60zM123.6 581.7h5.60v5.50h-5.60zM140.4 592.7h5.60v5.50h-5.60zM174.0 620.2h5.60v5.50h-5.60zM101.2 658.7h5.60v5.50h-5.60z"/><path fill="#abc3e4" d="M123.6 345.2h5.60v5.50h-5.60z"/><path fill="#96aecc" d="M129.2 345.2h5.60v5.50h-5.60z"/><path fill="#abc9e4" d="M140.4 345.2h5.60v5.50h-5.60zM112.4 383.7h5.60v5.50h-5.60zM174.0 383.7h5.60v5.50h-5.60zM129.2 449.7h5.60v5.50h-5.60zM129.2 482.7h5.60v5.50h-5.60zM168.4 482.7h5.60v5.50h-5.60zM151.6 581.7h5.60v5.50h-5.60zM118.0 620.2h5.60v5.50h-5.60zM129.2 620.2h5.60v5.50h-5.60zM106.8 658.7h5.60v5.50h-5.60zM174.0 658.7h5.60v5.50h-5.60zM324.7 449.7h5.60v5.50h-5.60zM335.9 477.2h5.60v5.50h-5.60zM358.3 482.7h5.60v5.50h-5.60zM330.3 548.7h5.60v5.50h-5.60zM335.9 548.7h5.60v5.50h-5.60zM352.7 548.7h5.60v5.50h-5.60zM363.9 581.7h5.60v5.50h-5.60zM380.7 631.2h4.80v5.50h-4.80zM352.7 273.5h5.60v5.00h-5.60z"/><path fill="#aec9e7" d="M146.0 345.2h5.60v5.50h-5.60zM106.8 422.2h5.60v5.50h-5.60zM123.6 477.2h5.60v5.50h-5.60zM118.0 482.7h5.60v5.50h-5.60zM100.6 515.7h0.60v5.50h-0.60zM134.8 631.2h5.60v5.50h-5.60zM162.8 631.2h5.60v5.50h-5.60zM168.4 631.2h5.60v5.50h-5.60zM174.0 273.5h5.60v5.00h-5.60zM321.3 328.7h3.40v5.50h-3.40zM363.9 350.7h5.60v5.50h-5.60zM380.7 350.7h4.80v5.50h-4.80zM335.9 367.2h5.60v5.50h-5.60zM324.7 477.2h5.60v5.50h-5.60zM358.3 515.7h5.60v5.50h-5.60zM341.5 620.2h5.60v5.50h-5.60zM321.3 647.7h3.40v5.50h-3.40z"/><path fill="#a2b4db" d="M151.6 345.2h5.60v5.50h-5.60z"/><path fill="#a2bddb" d="M157.2 345.2h5.60v5.50h-5.60z"/><path fill="#a5c0e1" d="M174.0 345.2h5.60v5.50h-5.60zM179.6 658.7h5.60v5.50h-5.60z"/><path fill="#abc3e1" d="M185.2 345.2h5.60v5.50h-5.60zM174.0 598.2h5.60v5.50h-5.60z"/><path fill="#9cb4cf" d="M190.8 345.2h5.60v5.50h-5.60zM369.5 345.2h5.60v5.50h-5.60zM347.1 405.7h5.60v5.50h-5.60zM369.5 477.2h5.60v5.50h-5.60zM341.5 592.7h5.60v5.50h-5.60z"/><path fill="#bad8f9" d="M196.4 345.2h5.60v5.50h-5.60zM196.4 350.7h5.60v5.50h-5.60zM157.2 361.7h5.60v5.50h-5.60zM123.6 383.7h5.60v5.50h-5.60zM129.2 400.2h5.60v5.50h-5.60zM157.2 438.7h5.60v5.50h-5.60zM168.4 504.7h5.60v5.50h-5.60zM168.4 537.7h5.60v5.50h-5.60zM129.2 273.5h5.60v5.00h-5.60zM321.3 323.2h3.40v5.50h-3.40zM324.7 361.7h5.60v5.50h-5.60zM375.1 361.7h5.60v5.50h-5.60zM341.5 438.7h5.60v5.50h-5.60zM341.5 449.7h5.60v5.50h-5.60zM324.7 471.7h5.60v5.50h-5.60zM363.9 471.7h5.60v5.50h-5.60zM380.7 471.7h4.80v5.50h-4.80zM363.9 482.7h5.60v5.50h-5.60zM341.5 548.7h5.60v5.50h-5.60zM380.7 548.7h4.80v5.50h-4.80zM335.9 570.7h5.60v5.50h-5.60zM341.5 570.7h5.60v5.50h-5.60zM324.7 609.2h5.60v5.50h-5.60zM330.3 609.2h5.60v5.50h-5.60zM358.3 620.2h5.60v5.50h-5.60zM341.5 658.7h5.60v5.50h-5.60zM380.7 658.7h4.80v5.50h-4.80z"/><path fill="#a2c0e4" d="M101.2 350.7h5.60v5.50h-5.60z"/><path fill="#87a5bd" d="M106.8 350.7h5.60v5.50h-5.60z"/><path fill="#849fb7" d="M112.4 350.7h5.60v5.50h-5.60zM106.8 543.2h5.60v5.50h-5.60z"/><path fill="#8da2c6" d="M118.0 350.7h5.60v5.50h-5.60z"/><path fill="#909fc3" d="M123.6 350.7h5.60v5.50h-5.60z"/><path fill="#93abc9" d="M129.2 350.7h5.60v5.50h-5.60zM146.0 510.2h5.60v5.50h-5.60z"/><path fill="#8da5ba" d="M134.8 350.7h5.60v5.50h-5.60zM352.7 312.2h5.60v5.50h-5.60zM369.5 405.7h5.60v5.50h-5.60zM363.9 576.2h5.60v5.50h-5.60zM352.7 653.2h5.60v5.50h-5.60z"/><path fill="#96aec6" d="M140.4 350.7h5.60v5.50h-5.60zM352.7 306.7h5.60v5.50h-5.60zM380.7 306.7h4.80v5.50h-4.80zM375.1 328.7h5.60v5.50h-5.60zM352.7 510.2h5.60v5.50h-5.60zM380.7 576.2h4.80v5.50h-4.80zM330.3 592.7h5.60v5.50h-5.60zM369.5 598.2h5.60v5.50h-5.60z"/><path fill="#99b1cc" d="M146.0 350.7h5.60v5.50h-5.60zM369.5 328.7h5.60v5.50h-5.60zM375.1 345.2h5.60v5.50h-5.60zM335.9 350.7h5.60v5.50h-5.60zM347.1 350.7h5.60v5.50h-5.60zM352.7 389.2h5.60v5.50h-5.60zM375.1 405.7h5.60v5.50h-5.60z"/><path fill="#7b81ab" d="M151.6 350.7h5.60v5.50h-5.60z"/><path fill="#879cbd" d="M157.2 350.7h5.60v5.50h-5.60zM129.2 405.7h5.60v5.50h-5.60z"/><path fill="#badbf9" d="M162.8 350.7h5.60v5.50h-5.60zM174.0 570.7h5.60v5.50h-5.60zM168.4 620.2h5.60v5.50h-5.60zM151.6 631.2h5.60v5.50h-5.60zM157.2 653.2h5.60v5.50h-5.60zM380.7 427.7h4.80v5.50h-4.80zM330.3 449.7h5.60v5.50h-5.60zM324.7 482.7h5.60v5.50h-5.60zM335.9 482.7h5.60v5.50h-5.60zM341.5 482.7h5.60v5.50h-5.60zM347.1 482.7h5.60v5.50h-5.60zM380.7 504.7h4.80v5.50h-4.80zM347.1 537.7h5.60v5.50h-5.60zM375.1 537.7h5.60v5.50h-5.60zM380.7 592.7h4.80v5.50h-4.80zM358.3 609.2h5.60v5.50h-5.60zM324.7 647.7h5.60v5.50h-5.60zM341.5 647.7h5.60v5.50h-5.60zM363.9 647.7h5.60v5.50h-5.60zM369.5 647.7h5.60v5.50h-5.60z"/><path fill="#96aed5" d="M168.4 350.7h5.60v5.50h-5.60z"/><path fill="#879fc0" d="M174.0 350.7h5.60v5.50h-5.60zM151.6 367.2h5.60v5.50h-5.60z"/><path fill="#879fbd" d="M179.6 350.7h5.60v5.50h-5.60zM118.0 427.7h5.60v5.50h-5.60z"/><path fill="#8a9cb7" d="M185.2 350.7h5.60v5.50h-5.60z"/><path fill="#8d9fba" d="M190.8 350.7h5.60v5.50h-5.60z"/><path fill="#cfe1f6" d="M185.2 356.2h5.60v5.50h-5.60z"/><path fill="#b7d5f6" d="M168.4 361.7h5.60v5.50h-5.60zM174.0 361.7h5.60v5.50h-5.60zM179.6 361.7h5.60v5.50h-5.60zM151.6 438.7h5.60v5.50h-5.60zM146.0 504.7h5.60v5.50h-5.60zM106.8 570.7h5.60v5.50h-5.60zM162.8 647.7h5.60v5.50h-5.60zM151.6 273.5h5.60v5.00h-5.60zM380.7 328.7h4.80v5.50h-4.80zM330.3 361.7h5.60v5.50h-5.60zM330.3 471.7h5.60v5.50h-5.60zM369.5 570.7h5.60v5.50h-5.60zM380.7 609.2h4.80v5.50h-4.80z"/><path fill="#8793b4" d="M100.6 367.2h0.60v5.50h-0.60zM101.2 367.2h5.60v5.50h-5.60z"/><path fill="#96a5cc" d="M106.8 367.2h5.60v5.50h-5.60z"/><path fill="#7e90ae" d="M112.4 367.2h5.60v5.50h-5.60z"/><path fill="#96aec0" d="M118.0 367.2h5.60v5.50h-5.60z"/><path fill="#8dabc0" d="M123.6 367.2h5.60v5.50h-5.60zM129.2 389.2h5.60v5.50h-5.60z"/><path fill="#7e93b4" d="M129.2 367.2h5.60v5.50h-5.60z"/><path fill="#8da2c3" d="M134.8 367.2h5.60v5.50h-5.60z"/><path fill="#90aec3" d="M140.4 367.2h5.60v5.50h-5.60z"/><path fill="#8a96b7" d="M146.0 367.2h5.60v5.50h-5.60z"/><path fill="#87a5b7" d="M157.2 367.2h5.60v5.50h-5.60z"/><path fill="#8a9cc0" d="M162.8 367.2h5.60v5.50h-5.60z"/><path fill="#849cb7" d="M168.4 367.2h5.60v5.50h-5.60zM140.4 278.5h5.60v5.00h-5.60z"/><path fill="#7e99ae" d="M174.0 367.2h5.60v5.50h-5.60z"/><path fill="#8d9fbd" d="M179.6 367.2h5.60v5.50h-5.60z"/><path fill="#909fbd" d="M100.6 372.7h0.60v5.50h-0.60z"/><path fill="#96a2c3" d="M101.2 372.7h5.60v5.50h-5.60z"/><path fill="#b4cced" d="M106.8 372.7h5.60v5.50h-5.60z"/><path fill="#b1ccea" d="M112.4 372.7h5.60v5.50h-5.60zM168.4 372.7h5.60v5.50h-5.60zM134.8 411.2h5.60v5.50h-5.60zM140.4 631.2h5.60v5.50h-5.60zM363.9 323.2h5.60v5.50h-5.60zM321.3 350.7h3.40v5.50h-3.40zM369.5 372.7h5.60v5.50h-5.60zM352.7 400.2h5.60v5.50h-5.60zM358.3 438.7h5.60v5.50h-5.60zM335.9 444.2h5.60v5.50h-5.60zM375.1 477.2h5.60v5.50h-5.60zM324.7 581.7h5.60v5.50h-5.60zM341.5 609.2h5.60v5.50h-5.60zM347.1 609.2h5.60v5.50h-5.60zM330.3 647.7h5.60v5.50h-5.60zM363.9 653.2h5.60v5.50h-5.60z"/><path fill="#b1cce4" d="M118.0 372.7h5.60v5.50h-5.60z"/><path fill="#aecfe7" d="M123.6 372.7h5.60v5.50h-5.60z"/><path fill="#aec9ea" d="M134.8 372.7h5.60v5.50h-5.60zM129.2 631.2h5.60v5.50h-5.60z"/><path fill="#b1c9e7" d="M146.0 372.7h5.60v5.50h-5.60z"/><path fill="#b4cfed" d="M162.8 372.7h5.60v5.50h-5.60zM129.2 411.2h5.60v5.50h-5.60zM151.6 411.2h5.60v5.50h-5.60zM112.4 427.7h5.60v5.50h-5.60zM101.2 449.7h5.60v5.50h-5.60zM157.2 273.5h5.60v5.00h-5.60zM330.3 334.2h5.60v5.50h-5.60zM347.1 372.7h5.60v5.50h-5.60zM352.7 411.2h5.60v5.50h-5.60z"/><path fill="#aec9e4" d="M174.0 372.7h5.60v5.50h-5.60zM174.0 422.2h5.60v5.50h-5.60zM118.0 273.5h5.60v5.00h-5.60zM321.3 372.7h3.40v5.50h-3.40z"/><path fill="#a8c0db" d="M179.6 372.7h5.60v5.50h-5.60z"/><path fill="#849fc3" d="M100.6 383.7h0.60v5.50h-0.60zM100.6 389.2h0.60v5.50h-0.60z"/><path fill="#87a2c6" d="M101.2 383.7h5.60v5.50h-5.60z"/><path fill="#abcce7" d="M106.8 383.7h5.60v5.50h-5.60zM106.8 400.2h5.60v5.50h-5.60zM162.8 411.2h5.60v5.50h-5.60zM157.2 449.7h5.60v5.50h-5.60zM118.0 515.7h5.60v5.50h-5.60zM134.8 515.7h5.60v5.50h-5.60zM118.0 592.7h5.60v5.50h-5.60z"/><path fill="#99b7d2" d="M129.2 383.7h5.60v5.50h-5.60zM101.2 278.5h5.60v5.00h-5.60z"/><path fill="#7b9cb4" d="M134.8 383.7h5.60v5.50h-5.60z"/><path fill="#81a8bd" d="M140.4 383.7h5.60v5.50h-5.60z"/><path fill="#bad8f6" d="M146.0 383.7h5.60v5.50h-5.60zM140.4 411.2h5.60v5.50h-5.60zM185.2 411.2h5.60v5.50h-5.60zM174.0 592.7h5.60v5.50h-5.60zM190.8 609.2h5.60v5.50h-5.60zM335.9 361.7h5.60v5.50h-5.60zM341.5 361.7h5.60v5.50h-5.60zM324.7 372.7h5.60v5.50h-5.60zM335.9 372.7h5.60v5.50h-5.60zM375.1 372.7h5.60v5.50h-5.60zM380.7 372.7h4.80v5.50h-4.80zM363.9 411.2h5.60v5.50h-5.60zM380.7 422.2h4.80v5.50h-4.80zM330.3 438.7h5.60v5.50h-5.60zM335.9 471.7h5.60v5.50h-5.60zM375.1 482.7h5.60v5.50h-5.60zM321.3 537.7h3.40v5.50h-3.40zM380.7 537.7h4.80v5.50h-4.80zM321.3 570.7h3.40v5.50h-3.40zM358.3 570.7h5.60v5.50h-5.60zM330.3 620.2h5.60v5.50h-5.60z"/><path fill="#a5c0db" d="M151.6 383.7h5.60v5.50h-5.60zM101.2 422.2h5.60v5.50h-5.60zM330.3 367.2h5.60v5.50h-5.60zM347.1 444.2h5.60v5.50h-5.60zM352.7 592.7h5.60v5.50h-5.60zM341.5 636.7h5.60v5.50h-5.60zM363.9 278.5h5.60v5.00h-5.60z"/><path fill="#abc9e7" d="M157.2 383.7h5.60v5.50h-5.60zM118.0 400.2h5.60v5.50h-5.60zM168.4 422.2h5.60v5.50h-5.60zM134.8 482.7h5.60v5.50h-5.60zM129.2 515.7h5.60v5.50h-5.60zM129.2 548.7h5.60v5.50h-5.60zM168.4 548.7h5.60v5.50h-5.60zM134.8 570.7h5.60v5.50h-5.60zM146.0 581.7h5.60v5.50h-5.60zM162.8 592.7h5.60v5.50h-5.60zM146.0 609.2h5.60v5.50h-5.60zM321.3 345.2h3.40v5.50h-3.40zM375.1 367.2h5.60v5.50h-5.60zM347.1 515.7h5.60v5.50h-5.60zM375.1 592.7h5.60v5.50h-5.60zM369.5 620.2h5.60v5.50h-5.60zM375.1 636.7h5.60v5.50h-5.60zM330.3 658.7h5.60v5.50h-5.60zM335.9 273.5h5.60v5.00h-5.60zM363.9 273.5h5.60v5.00h-5.60z"/><path fill="#a5c0d8" d="M162.8 383.7h5.60v5.50h-5.60z"/><path fill="#99b1c3" d="M168.4 383.7h5.60v5.50h-5.60z"/><path fill="#7e99bd" d="M101.2 389.2h5.60v5.50h-5.60z"/><path fill="#7ba2b1" d="M106.8 389.2h5.60v5.50h-5.60z"/><path fill="#789cb4" d="M134.8 389.2h5.60v5.50h-5.60z"/><path fill="#81a5bd" d="M140.4 389.2h5.60v5.50h-5.60z"/><path fill="#879fb7" d="M151.6 389.2h5.60v5.50h-5.60zM335.9 306.7h5.60v5.50h-5.60zM375.1 422.2h5.60v5.50h-5.60zM369.5 510.2h5.60v5.50h-5.60zM352.7 614.7h5.60v5.50h-5.60z"/><path fill="#90abc3" d="M157.2 389.2h5.60v5.50h-5.60zM168.4 427.7h5.60v5.50h-5.60zM129.2 543.2h5.60v5.50h-5.60zM140.4 653.2h5.60v5.50h-5.60zM330.3 345.2h5.60v5.50h-5.60zM335.9 383.7h5.60v5.50h-5.60zM335.9 422.2h5.60v5.50h-5.60zM375.1 614.7h5.60v5.50h-5.60z"/><path fill="#93abc0" d="M162.8 389.2h5.60v5.50h-5.60z"/><path fill="#90a8b7" d="M168.4 389.2h5.60v5.50h-5.60z"/><path fill="#849fb4" d="M174.0 389.2h5.60v5.50h-5.60zM174.0 576.2h5.60v5.50h-5.60z"/><path fill="#c6dbed" d="M106.8 394.7h5.60v5.50h-5.60z"/><path fill="#d2e7fc" d="M112.4 394.7h5.60v5.50h-5.60z"/><path fill="#c9dbed" d="M174.0 394.7h5.60v5.50h-5.60zM162.8 642.2h5.60v5.50h-5.60z"/><path fill="#aeccea" d="M112.4 400.2h5.60v5.50h-5.60zM151.6 400.2h5.60v5.50h-5.60zM112.4 449.7h5.60v5.50h-5.60zM162.8 449.7h5.60v5.50h-5.60zM106.8 482.7h5.60v5.50h-5.60zM112.4 515.7h5.60v5.50h-5.60zM162.8 515.7h5.60v5.50h-5.60zM140.4 537.7h5.60v5.50h-5.60zM162.8 548.7h5.60v5.50h-5.60zM106.8 581.7h5.60v5.50h-5.60zM112.4 581.7h5.60v5.50h-5.60zM151.6 609.2h5.60v5.50h-5.60zM179.6 631.2h5.60v5.50h-5.60zM151.6 636.7h5.60v5.50h-5.60zM106.8 273.5h5.60v5.00h-5.60zM358.3 323.2h5.60v5.50h-5.60zM369.5 361.7h5.60v5.50h-5.60zM352.7 449.7h5.60v5.50h-5.60zM352.7 471.7h5.60v5.50h-5.60zM358.3 471.7h5.60v5.50h-5.60zM335.9 504.7h5.60v5.50h-5.60zM363.9 504.7h5.60v5.50h-5.60zM369.5 515.7h5.60v5.50h-5.60zM347.1 543.2h5.60v5.50h-5.60zM380.7 543.2h4.80v5.50h-4.80zM380.7 620.2h4.80v5.50h-4.80zM358.3 658.7h5.60v5.50h-5.60z"/><path fill="#abcced" d="M146.0 400.2h5.60v5.50h-5.60z"/><path fill="#93aec9" d="M100.6 405.7h0.60v5.50h-0.60zM100.6 510.2h0.60v5.50h-0.60z"/><path fill="#93aecc" d="M101.2 405.7h5.60v5.50h-5.60zM106.8 576.2h5.60v5.50h-5.60z"/><path fill="#758d9f" d="M106.8 405.7h5.60v5.50h-5.60z"/><path fill="#8496ae" d="M112.4 405.7h5.60v5.50h-5.60z"/><path fill="#7593ab" d="M118.0 405.7h5.60v5.50h-5.60z"/><path fill="#758dab" d="M123.6 405.7h5.60v5.50h-5.60z"/><path fill="#a2c0e1" d="M140.4 405.7h5.60v5.50h-5.60z"/><path fill="#7b9cba" d="M146.0 405.7h5.60v5.50h-5.60z"/><path fill="#8196ae" d="M151.6 405.7h5.60v5.50h-5.60zM358.3 328.7h5.60v5.50h-5.60zM330.3 543.2h5.60v5.50h-5.60zM321.3 273.5h3.40v5.00h-3.40z"/><path fill="#7e9fb4" d="M157.2 405.7h5.60v5.50h-5.60z"/><path fill="#7ea2ba" d="M162.8 405.7h5.60v5.50h-5.60z"/><path fill="#6c7e9c" d="M168.4 405.7h5.60v5.50h-5.60z"/><path fill="#848aa2" d="M174.0 405.7h5.60v5.50h-5.60z"/><path fill="#90a2ba" d="M179.6 405.7h5.60v5.50h-5.60z"/><path fill="#9fb7d5" d="M185.2 405.7h5.60v5.50h-5.60z"/><path fill="#bad5f3" d="M100.6 411.2h0.60v5.50h-0.60zM347.1 334.2h5.60v5.50h-5.60zM352.7 372.7h5.60v5.50h-5.60z"/><path fill="#8da8ba" d="M106.8 411.2h5.60v5.50h-5.60z"/><path fill="#96abc3" d="M112.4 411.2h5.60v5.50h-5.60z"/><path fill="#8dabc3" d="M118.0 411.2h5.60v5.50h-5.60zM162.8 510.2h5.60v5.50h-5.60z"/><path fill="#aecced" d="M146.0 411.2h5.60v5.50h-5.60zM123.6 422.2h5.60v5.50h-5.60zM106.8 449.7h5.60v5.50h-5.60zM146.0 449.7h5.60v5.50h-5.60zM112.4 548.7h5.60v5.50h-5.60zM168.4 592.7h5.60v5.50h-5.60z"/><path fill="#a5c0de" d="M168.4 411.2h5.60v5.50h-5.60zM134.8 581.7h5.60v5.50h-5.60zM118.0 658.7h5.60v5.50h-5.60zM185.2 658.7h5.60v5.50h-5.60zM321.3 306.7h3.40v5.50h-3.40zM363.9 345.2h5.60v5.50h-5.60zM324.7 592.7h5.60v5.50h-5.60zM321.3 658.7h3.40v5.50h-3.40zM380.7 273.5h4.80v5.00h-4.80z"/><path fill="#aec3e1" d="M174.0 411.2h5.60v5.50h-5.60z"/><path fill="#a2bdd8" d="M100.6 422.2h0.60v5.50h-0.60zM380.7 383.7h4.80v5.50h-4.80zM321.3 405.7h3.40v5.50h-3.40zM324.7 405.7h5.60v5.50h-5.60zM375.1 510.2h5.60v5.50h-5.60zM341.5 576.2h5.60v5.50h-5.60zM358.3 576.2h5.60v5.50h-5.60zM352.7 598.2h5.60v5.50h-5.60zM321.3 614.7h3.40v5.50h-3.40zM380.7 278.5h4.80v5.00h-4.80z"/><path fill="#a2c0de" d="M118.0 422.2h5.60v5.50h-5.60zM157.2 422.2h5.60v5.50h-5.60zM162.8 581.7h5.60v5.50h-5.60z"/><path fill="#99b7cf" d="M129.2 422.2h5.60v5.50h-5.60z"/><path fill="#abc9ea" d="M146.0 422.2h5.60v5.50h-5.60zM106.8 515.7h5.60v5.50h-5.60z"/><path fill="#96b1d2" d="M151.6 422.2h5.60v5.50h-5.60z"/><path fill="#9cbacc" d="M162.8 422.2h5.60v5.50h-5.60z"/><path fill="#8da2b7" d="M100.6 427.7h0.60v5.50h-0.60z"/><path fill="#8799ab" d="M101.2 427.7h5.60v5.50h-5.60z"/><path fill="#9cb7cf" d="M106.8 427.7h5.60v5.50h-5.60zM347.1 328.7h5.60v5.50h-5.60zM352.7 383.7h5.60v5.50h-5.60zM324.7 510.2h5.60v5.50h-5.60z"/><path fill="#7893a2" d="M129.2 427.7h5.60v5.50h-5.60z"/><path fill="#b1d2f0" d="M134.8 427.7h5.60v5.50h-5.60zM112.4 504.7h5.60v5.50h-5.60zM106.8 609.2h5.60v5.50h-5.60z"/><path fill="#84a5b7" d="M140.4 427.7h5.60v5.50h-5.60z"/><path fill="#8da8c9" d="M151.6 427.7h5.60v5.50h-5.60z"/><path fill="#90abc9" d="M157.2 427.7h5.60v5.50h-5.60z"/><path fill="#99b7c9" d="M162.8 427.7h5.60v5.50h-5.60zM151.6 543.2h5.60v5.50h-5.60z"/><path fill="#93a8ba" d="M174.0 427.7h5.60v5.50h-5.60z"/><path fill="#9fb7d2" d="M101.2 444.2h5.60v5.50h-5.60zM140.4 548.7h5.60v5.50h-5.60zM330.3 389.2h5.60v5.50h-5.60zM321.3 543.2h3.40v5.50h-3.40z"/><path fill="#8da5c6" d="M106.8 444.2h5.60v5.50h-5.60zM168.4 598.2h5.60v5.50h-5.60z"/><path fill="#8aa5bd" d="M112.4 444.2h5.60v5.50h-5.60z"/><path fill="#90a8bd" d="M118.0 444.2h5.60v5.50h-5.60zM179.6 614.7h5.60v5.50h-5.60z"/><path fill="#8a93ae" d="M123.6 444.2h5.60v5.50h-5.60z"/><path fill="#7b99ab" d="M129.2 444.2h5.60v5.50h-5.60z"/><path fill="#84a5bd" d="M134.8 444.2h5.60v5.50h-5.60z"/><path fill="#87a2ba" d="M140.4 444.2h5.60v5.50h-5.60zM157.2 636.7h5.60v5.50h-5.60z"/><path fill="#879cba" d="M146.0 444.2h5.60v5.50h-5.60zM168.4 510.2h5.60v5.50h-5.60z"/><path fill="#8196c0" d="M151.6 444.2h5.60v5.50h-5.60z"/><path fill="#819fb4" d="M157.2 444.2h5.60v5.50h-5.60z"/><path fill="#8aa2b7" d="M162.8 444.2h5.60v5.50h-5.60zM330.3 328.7h5.60v5.50h-5.60zM341.5 614.7h5.60v5.50h-5.60z"/><path fill="#87a5c0" d="M168.4 444.2h5.60v5.50h-5.60zM157.2 543.2h5.60v5.50h-5.60z"/><path fill="#7ea2bd" d="M174.0 444.2h5.60v5.50h-5.60z"/><path fill="#aec6e4" d="M123.6 449.7h5.60v5.50h-5.60z"/><path fill="#93abbd" d="M100.6 477.2h0.60v5.50h-0.60z"/><path fill="#849cab" d="M101.2 477.2h5.60v5.50h-5.60zM129.2 614.7h5.60v5.50h-5.60z"/><path fill="#9cb7d2" d="M106.8 477.2h5.60v5.50h-5.60zM335.9 328.7h5.60v5.50h-5.60zM324.7 345.2h5.60v5.50h-5.60zM324.7 576.2h5.60v5.50h-5.60zM369.5 273.5h5.60v5.00h-5.60z"/><path fill="#90a8b4" d="M112.4 477.2h5.60v5.50h-5.60z"/><path fill="#93a2b7" d="M118.0 477.2h5.60v5.50h-5.60z"/><path fill="#8aa8ba" d="M129.2 477.2h5.60v5.50h-5.60z"/><path fill="#87a5c3" d="M134.8 477.2h5.60v5.50h-5.60z"/><path fill="#879fc3" d="M151.6 477.2h5.60v5.50h-5.60z"/><path fill="#8aa8bd" d="M162.8 477.2h5.60v5.50h-5.60zM118.0 510.2h5.60v5.50h-5.60z"/><path fill="#8da8bd" d="M168.4 477.2h5.60v5.50h-5.60zM101.2 543.2h5.60v5.50h-5.60zM134.8 598.2h5.60v5.50h-5.60z"/><path fill="#9fbad2" d="M174.0 477.2h5.60v5.50h-5.60zM380.7 367.2h4.80v5.50h-4.80z"/><path fill="#abc9de" d="M112.4 482.7h5.60v5.50h-5.60z"/><path fill="#bad5f6" d="M123.6 482.7h5.60v5.50h-5.60z"/><path fill="#a8c6e7" d="M151.6 482.7h5.60v5.50h-5.60zM157.2 482.7h5.60v5.50h-5.60z"/><path fill="#badbfc" d="M118.0 504.7h5.60v5.50h-5.60zM151.6 592.7h5.60v5.50h-5.60zM157.2 609.2h5.60v5.50h-5.60z"/><path fill="#8199b7" d="M106.8 510.2h5.60v5.50h-5.60zM162.8 576.2h5.60v5.50h-5.60z"/><path fill="#8a9fc0" d="M129.2 510.2h5.60v5.50h-5.60z"/><path fill="#8da8c0" d="M134.8 510.2h5.60v5.50h-5.60z"/><path fill="#8a99b4" d="M140.4 510.2h5.60v5.50h-5.60zM157.2 278.5h5.60v5.00h-5.60z"/><path fill="#87a5ba" d="M151.6 510.2h5.60v5.50h-5.60zM162.8 614.7h5.60v5.50h-5.60z"/><path fill="#8dabc9" d="M157.2 510.2h5.60v5.50h-5.60zM162.8 543.2h5.60v5.50h-5.60z"/><path fill="#8d9cbd" d="M174.0 510.2h5.60v5.50h-5.60zM118.0 653.2h5.60v5.50h-5.60z"/><path fill="#b4d5f3" d="M123.6 515.7h5.60v5.50h-5.60zM123.6 537.7h5.60v5.50h-5.60zM352.7 323.2h5.60v5.50h-5.60zM352.7 361.7h5.60v5.50h-5.60zM324.7 570.7h5.60v5.50h-5.60zM352.7 570.7h5.60v5.50h-5.60zM358.3 581.7h5.60v5.50h-5.60zM347.1 647.7h5.60v5.50h-5.60zM335.9 658.7h5.60v5.50h-5.60z"/><path fill="#8793b1" d="M140.4 515.7h5.60v5.50h-5.60z"/><path fill="#90aec6" d="M151.6 515.7h5.60v5.50h-5.60z"/><path fill="#a8c9e7" d="M157.2 515.7h5.60v5.50h-5.60zM157.2 548.7h5.60v5.50h-5.60z"/><path fill="#9fb7d8" d="M168.4 515.7h5.60v5.50h-5.60z"/><path fill="#93a5c6" d="M174.0 515.7h5.60v5.50h-5.60z"/><path fill="#bddbfc" d="M129.2 537.7h5.60v5.50h-5.60zM146.0 537.7h5.60v5.50h-5.60zM179.6 548.7h5.60v5.50h-5.60zM190.8 581.7h5.60v5.50h-5.60zM185.2 592.7h5.60v5.50h-5.60zM140.4 609.2h5.60v5.50h-5.60zM380.7 323.2h4.80v5.50h-4.80zM321.3 438.7h3.40v5.50h-3.40zM335.9 438.7h5.60v5.50h-5.60zM321.3 471.7h3.40v5.50h-3.40zM347.1 471.7h5.60v5.50h-5.60zM375.1 471.7h5.60v5.50h-5.60zM341.5 537.7h5.60v5.50h-5.60zM324.7 548.7h5.60v5.50h-5.60zM347.1 548.7h5.60v5.50h-5.60zM324.7 620.2h5.60v5.50h-5.60zM380.7 647.7h4.80v5.50h-4.80zM375.1 658.7h5.60v5.50h-5.60z"/><path fill="#7b96a5" d="M100.6 543.2h0.60v5.50h-0.60z"/><path fill="#99b4d2" d="M112.4 543.2h5.60v5.50h-5.60z"/><path fill="#7ba2ba" d="M118.0 543.2h5.60v5.50h-5.60zM123.6 543.2h5.60v5.50h-5.60z"/><path fill="#8496b1" d="M134.8 543.2h5.60v5.50h-5.60z"/><path fill="#7b90a8" d="M140.4 543.2h5.60v5.50h-5.60z"/><path fill="#90abbd" d="M146.0 543.2h5.60v5.50h-5.60z"/><path fill="#8aa2ba" d="M168.4 543.2h5.60v5.50h-5.60zM375.1 312.2h5.60v5.50h-5.60zM341.5 350.7h5.60v5.50h-5.60zM341.5 383.7h5.60v5.50h-5.60zM330.3 631.2h5.60v5.50h-5.60zM330.3 278.5h5.60v5.00h-5.60z"/><path fill="#93abc6" d="M174.0 543.2h5.60v5.50h-5.60zM369.5 543.2h5.60v5.50h-5.60z"/><path fill="#abccea" d="M118.0 548.7h5.60v5.50h-5.60z"/><path fill="#a8cce7" d="M123.6 548.7h5.60v5.50h-5.60z"/><path fill="#90a2c0" d="M100.6 576.2h0.60v5.50h-0.60zM101.2 576.2h5.60v5.50h-5.60z"/><path fill="#99bad8" d="M112.4 576.2h5.60v5.50h-5.60z"/><path fill="#90abcc" d="M118.0 576.2h5.60v5.50h-5.60z"/><path fill="#96aecf" d="M123.6 576.2h5.60v5.50h-5.60z"/><path fill="#7290ae" d="M129.2 576.2h5.60v5.50h-5.60z"/><path fill="#72879c" d="M134.8 576.2h5.60v5.50h-5.60z"/><path fill="#8499b7" d="M146.0 576.2h5.60v5.50h-5.60z"/><path fill="#8a9fb4" d="M151.6 576.2h5.60v5.50h-5.60z"/><path fill="#7890ab" d="M157.2 576.2h5.60v5.50h-5.60z"/><path fill="#8da5c0" d="M168.4 576.2h5.60v5.50h-5.60z"/><path fill="#96b4c6" d="M185.2 576.2h5.60v5.50h-5.60z"/><path fill="#a5c6de" d="M140.4 581.7h5.60v5.50h-5.60z"/><path fill="#93a8c0" d="M100.6 592.7h0.60v5.50h-0.60z"/><path fill="#8da2ba" d="M101.2 592.7h5.60v5.50h-5.60zM358.3 383.7h5.60v5.50h-5.60zM330.3 405.7h5.60v5.50h-5.60zM375.1 576.2h5.60v5.50h-5.60zM335.9 631.2h5.60v5.50h-5.60z"/><path fill="#aed2ed" d="M112.4 592.7h5.60v5.50h-5.60z"/><path fill="#9cb1c9" d="M123.6 592.7h5.60v5.50h-5.60zM123.6 598.2h5.60v5.50h-5.60z"/><path fill="#99b4cc" d="M134.8 592.7h5.60v5.50h-5.60zM352.7 328.7h5.60v5.50h-5.60zM335.9 345.2h5.60v5.50h-5.60zM363.9 367.2h5.60v5.50h-5.60zM363.9 389.2h5.60v5.50h-5.60zM369.5 427.7h5.60v5.50h-5.60zM369.5 592.7h5.60v5.50h-5.60zM335.9 614.7h5.60v5.50h-5.60zM363.9 631.2h5.60v5.50h-5.60z"/><path fill="#abc9ed" d="M146.0 592.7h5.60v5.50h-5.60z"/><path fill="#a5c0e4" d="M157.2 592.7h5.60v5.50h-5.60z"/><path fill="#b1cced" d="M179.6 592.7h5.60v5.50h-5.60zM134.8 273.5h5.60v5.00h-5.60z"/><path fill="#90a2bd" d="M100.6 598.2h0.60v5.50h-0.60z"/><path fill="#8493ab" d="M101.2 598.2h5.60v5.50h-5.60z"/><path fill="#8db4c6" d="M112.4 598.2h5.60v5.50h-5.60z"/><path fill="#7596a8" d="M118.0 598.2h5.60v5.50h-5.60z"/><path fill="#849cba" d="M140.4 598.2h5.60v5.50h-5.60z"/><path fill="#8aa2c9" d="M146.0 598.2h5.60v5.50h-5.60z"/><path fill="#7284ae" d="M157.2 598.2h5.60v5.50h-5.60z"/><path fill="#81a2b4" d="M162.8 598.2h5.60v5.50h-5.60z"/><path fill="#8a9cba" d="M179.6 598.2h5.60v5.50h-5.60z"/><path fill="#b7d5f9" d="M185.2 598.2h5.60v5.50h-5.60z"/><path fill="#cfe4f6" d="M129.2 603.7h5.60v5.50h-5.60zM157.2 642.2h5.60v5.50h-5.60z"/><path fill="#c6d5e7" d="M134.8 603.7h5.60v5.50h-5.60z"/><path fill="#6c96a5" d="M100.6 614.7h0.60v5.50h-0.60z"/><path fill="#8db4c9" d="M101.2 614.7h5.60v5.50h-5.60z"/><path fill="#819fb7" d="M106.8 614.7h5.60v5.50h-5.60z"/><path fill="#819fba" d="M112.4 614.7h5.60v5.50h-5.60z"/><path fill="#93b1c6" d="M118.0 614.7h5.60v5.50h-5.60z"/><path fill="#8a9fbd" d="M123.6 614.7h5.60v5.50h-5.60z"/><path fill="#81a5b7" d="M134.8 614.7h5.60v5.50h-5.60z"/><path fill="#96aec3" d="M140.4 614.7h5.60v5.50h-5.60z"/><path fill="#697e9c" d="M146.0 614.7h5.60v5.50h-5.60z"/><path fill="#7b99b4" d="M151.6 614.7h5.60v5.50h-5.60z"/><path fill="#7ea2b4" d="M157.2 614.7h5.60v5.50h-5.60z"/><path fill="#90a5c3" d="M174.0 614.7h5.60v5.50h-5.60z"/><path fill="#849ca8" d="M185.2 614.7h5.60v5.50h-5.60z"/><path fill="#9cb7c6" d="M190.8 614.7h5.60v5.50h-5.60z"/><path fill="#93bacf" d="M100.6 620.2h0.60v5.50h-0.60z"/><path fill="#a2c6de" d="M101.2 620.2h5.60v5.50h-5.60z"/><path fill="#a2c3de" d="M106.8 620.2h5.60v5.50h-5.60zM162.8 620.2h5.60v5.50h-5.60z"/><path fill="#9cb7d5" d="M146.0 620.2h5.60v5.50h-5.60zM112.4 631.2h5.60v5.50h-5.60z"/><path fill="#8dabc6" d="M151.6 620.2h5.60v5.50h-5.60z"/><path fill="#96b7cf" d="M157.2 620.2h5.60v5.50h-5.60z"/><path fill="#a8c3de" d="M179.6 620.2h5.60v5.50h-5.60zM168.4 273.5h5.60v5.00h-5.60zM380.7 345.2h4.80v5.50h-4.80zM321.3 515.7h3.40v5.50h-3.40zM347.1 598.2h5.60v5.50h-5.60zM335.9 653.2h5.60v5.50h-5.60z"/><path fill="#a8c3db" d="M185.2 620.2h5.60v5.50h-5.60z"/><path fill="#9cbad8" d="M123.6 631.2h5.60v5.50h-5.60z"/><path fill="#b1c9ea" d="M146.0 631.2h5.60v5.50h-5.60z"/><path fill="#758a9f" d="M100.6 636.7h0.60v5.50h-0.60z"/><path fill="#7590a8" d="M106.8 636.7h5.60v5.50h-5.60z"/><path fill="#96b1cc" d="M112.4 636.7h5.60v5.50h-5.60z"/><path fill="#7b9cb1" d="M118.0 636.7h5.60v5.50h-5.60z"/><path fill="#8a99b7" d="M129.2 636.7h5.60v5.50h-5.60z"/><path fill="#8d9fb7" d="M134.8 636.7h5.60v5.50h-5.60z"/><path fill="#8d99b4" d="M140.4 636.7h5.60v5.50h-5.60z"/><path fill="#909cba" d="M146.0 636.7h5.60v5.50h-5.60z"/><path fill="#788a9f" d="M162.8 636.7h5.60v5.50h-5.60z"/><path fill="#8193a8" d="M168.4 636.7h5.60v5.50h-5.60z"/><path fill="#7b9ca8" d="M174.0 636.7h5.60v5.50h-5.60z"/><path fill="#90abc6" d="M179.6 636.7h5.60v5.50h-5.60z"/><path fill="#c3d5e7" d="M106.8 642.2h5.60v5.50h-5.60z"/><path fill="#d2e4f9" d="M123.6 642.2h5.60v5.50h-5.60z"/><path fill="#b4cff3" d="M168.4 647.7h5.60v5.50h-5.60z"/><path fill="#8799bd" d="M100.6 653.2h0.60v5.50h-0.60z"/><path fill="#99b1c9" d="M106.8 653.2h5.60v5.50h-5.60zM324.7 278.5h5.60v5.00h-5.60z"/><path fill="#99b7cc" d="M112.4 653.2h5.60v5.50h-5.60z"/><path fill="#93aec6" d="M123.6 653.2h5.60v5.50h-5.60zM380.7 312.2h4.80v5.50h-4.80zM330.3 422.2h5.60v5.50h-5.60z"/><path fill="#90abc0" d="M129.2 653.2h5.60v5.50h-5.60z"/><path fill="#8aa5ba" d="M134.8 653.2h5.60v5.50h-5.60z"/><path fill="#96a5bd" d="M146.0 653.2h5.60v5.50h-5.60z"/><path fill="#90aebd" d="M151.6 653.2h5.60v5.50h-5.60z"/><path fill="#93a5cf" d="M162.8 653.2h5.60v5.50h-5.60z"/><path fill="#8d9fc6" d="M168.4 653.2h5.60v5.50h-5.60z"/><path fill="#8da2bd" d="M185.2 653.2h5.60v5.50h-5.60z"/><path fill="#a2bdde" d="M100.6 658.7h0.60v5.50h-0.60z"/><path fill="#abc0de" d="M146.0 658.7h5.60v5.50h-5.60z"/><path fill="#a8c6de" d="M151.6 658.7h5.60v5.50h-5.60z"/><path fill="#abc6ea" d="M168.4 658.7h5.60v5.50h-5.60z"/><path fill="#90b1c6" d="M112.4 273.5h5.60v5.00h-5.60z"/><path fill="#b4ccf0" d="M146.0 273.5h5.60v5.00h-5.60z"/><path fill="#8da5bd" d="M106.8 278.5h5.60v5.00h-5.60zM347.1 306.7h5.60v5.50h-5.60zM369.5 306.7h5.60v5.50h-5.60zM347.1 312.2h5.60v5.50h-5.60zM324.7 328.7h5.60v5.50h-5.60zM358.3 367.2h5.60v5.50h-5.60zM358.3 389.2h5.60v5.50h-5.60zM324.7 427.7h5.60v5.50h-5.60zM347.1 427.7h5.60v5.50h-5.60zM358.3 427.7h5.60v5.50h-5.60zM363.9 592.7h5.60v5.50h-5.60zM335.9 598.2h5.60v5.50h-5.60zM369.5 278.5h5.60v5.00h-5.60z"/><path fill="#7593a2" d="M112.4 278.5h5.60v5.00h-5.60z"/><path fill="#7e8da2" d="M118.0 278.5h5.60v5.00h-5.60z"/><path fill="#87a2b7" d="M123.6 278.5h5.60v5.00h-5.60z"/><path fill="#8496b7" d="M134.8 278.5h5.60v5.00h-5.60z"/><path fill="#939fc6" d="M146.0 278.5h5.60v5.00h-5.60z"/><path fill="#a2bade" d="M151.6 278.5h5.60v5.00h-5.60z"/><path fill="#8496a5" d="M162.8 278.5h5.60v5.00h-5.60z"/><path fill="#819cab" d="M168.4 278.5h5.60v5.00h-5.60z"/><path fill="#a5bdd8" d="M174.0 278.5h5.60v5.00h-5.60z"/><path fill="#a8d2ff" d="M245.2 301.2h3.10v5.50h-3.10zM248.3 301.2h5.55v5.50h-5.55zM253.9 301.2h5.55v5.50h-5.55zM259.4 301.2h5.55v5.50h-5.55zM265.0 301.2h5.55v5.50h-5.55zM270.5 301.2h5.55v5.50h-5.55zM276.1 301.2h5.55v5.50h-5.55zM281.6 301.2h5.55v5.50h-5.55zM287.2 301.2h5.55v5.50h-5.55zM292.7 301.2h5.55v5.50h-5.55zM298.3 301.2h5.55v5.50h-5.55zM303.8 301.2h5.55v5.50h-5.55zM309.4 301.2h1.35v5.50h-1.35zM245.2 339.7h3.10v5.50h-3.10zM248.3 339.7h5.55v5.50h-5.55zM253.9 339.7h5.55v5.50h-5.55zM259.4 339.7h5.55v5.50h-5.55zM265.0 339.7h5.55v5.50h-5.55zM270.5 339.7h5.55v5.50h-5.55zM276.1 339.7h5.55v5.50h-5.55zM281.6 339.7h5.55v5.50h-5.55zM287.2 339.7h5.55v5.50h-5.55zM292.7 339.7h5.55v5.50h-5.55zM298.3 339.7h5.55v5.50h-5.55zM303.8 339.7h5.55v5.50h-5.55zM309.4 339.7h1.35v5.50h-1.35zM245.2 378.2h3.10v5.50h-3.10zM248.3 378.2h5.55v5.50h-5.55zM253.9 378.2h5.55v5.50h-5.55zM259.4 378.2h5.55v5.50h-5.55zM265.0 378.2h5.55v5.50h-5.55zM270.5 378.2h5.55v5.50h-5.55zM276.1 378.2h5.55v5.50h-5.55zM281.6 378.2h5.55v5.50h-5.55zM287.2 378.2h5.55v5.50h-5.55zM292.7 378.2h5.55v5.50h-5.55zM298.3 378.2h5.55v5.50h-5.55zM303.8 378.2h5.55v5.50h-5.55zM309.4 378.2h1.35v5.50h-1.35zM245.2 416.7h3.10v5.50h-3.10zM248.3 416.7h5.55v5.50h-5.55zM253.9 416.7h5.55v5.50h-5.55zM259.4 416.7h5.55v5.50h-5.55zM265.0 416.7h5.55v5.50h-5.55zM270.5 416.7h5.55v5.50h-5.55zM276.1 416.7h5.55v5.50h-5.55zM281.6 416.7h5.55v5.50h-5.55zM287.2 416.7h5.55v5.50h-5.55zM292.7 416.7h5.55v5.50h-5.55zM298.3 416.7h5.55v5.50h-5.55zM303.8 416.7h5.55v5.50h-5.55zM309.4 416.7h1.35v5.50h-1.35zM393.0 301.2h3.10v5.50h-3.10zM396.1 301.2h5.55v5.50h-5.55zM401.7 301.2h5.55v5.50h-5.55zM407.2 301.2h5.55v5.50h-5.55zM412.8 301.2h5.55v5.50h-5.55zM418.3 301.2h5.55v5.50h-5.55zM423.9 301.2h5.55v5.50h-5.55zM429.4 301.2h5.55v5.50h-5.55zM435.0 301.2h5.55v5.50h-5.55zM440.5 301.2h5.55v5.50h-5.55zM446.1 301.2h5.55v5.50h-5.55zM451.6 301.2h5.55v5.50h-5.55zM457.2 301.2h5.55v5.50h-5.55zM462.7 301.2h4.30v5.50h-4.30zM393.0 339.7h3.10v5.50h-3.10zM396.1 339.7h5.55v5.50h-5.55zM401.7 339.7h5.55v5.50h-5.55zM407.2 339.7h5.55v5.50h-5.55zM412.8 339.7h5.55v5.50h-5.55zM418.3 339.7h5.55v5.50h-5.55zM423.9 339.7h5.55v5.50h-5.55zM429.4 339.7h5.55v5.50h-5.55zM435.0 339.7h5.55v5.50h-5.55zM440.5 339.7h5.55v5.50h-5.55zM446.1 339.7h5.55v5.50h-5.55zM451.6 339.7h5.55v5.50h-5.55zM457.2 339.7h5.55v5.50h-5.55zM462.7 339.7h4.30v5.50h-4.30zM393.0 378.2h3.10v5.50h-3.10zM396.1 378.2h5.55v5.50h-5.55zM401.7 378.2h5.55v5.50h-5.55zM407.2 378.2h5.55v5.50h-5.55zM412.8 378.2h5.55v5.50h-5.55zM418.3 378.2h5.55v5.50h-5.55zM423.9 378.2h5.55v5.50h-5.55zM429.4 378.2h5.55v5.50h-5.55zM435.0 378.2h5.55v5.50h-5.55zM440.5 378.2h5.55v5.50h-5.55zM446.1 378.2h5.55v5.50h-5.55zM451.6 378.2h5.55v5.50h-5.55zM457.2 378.2h5.55v5.50h-5.55zM462.7 378.2h4.30v5.50h-4.30zM393.0 416.7h3.10v5.50h-3.10zM396.1 416.7h5.55v5.50h-5.55zM401.7 416.7h5.55v5.50h-5.55zM407.2 416.7h5.55v5.50h-5.55zM412.8 416.7h5.55v5.50h-5.55zM418.3 416.7h5.55v5.50h-5.55zM423.9 416.7h5.55v5.50h-5.55zM429.4 416.7h5.55v5.50h-5.55zM435.0 416.7h5.55v5.50h-5.55zM440.5 416.7h5.55v5.50h-5.55zM446.1 416.7h5.55v5.50h-5.55zM451.6 416.7h5.55v5.50h-5.55zM457.2 416.7h5.55v5.50h-5.55zM462.7 416.7h4.30v5.50h-4.30z"/><path fill="#5781ae" d="M245.2 306.7h3.10v5.50h-3.10zM248.3 510.2h5.55v5.50h-5.55zM259.4 614.7h5.55v5.50h-5.55zM407.2 614.7h5.55v5.50h-5.55zM435.0 278.5h5.55v5.00h-5.55z"/><path fill="#6393c3" d="M248.3 306.7h5.55v5.50h-5.55zM248.3 345.2h5.55v5.50h-5.55zM248.3 350.7h5.55v5.50h-5.55zM281.6 350.7h5.55v5.50h-5.55zM287.2 350.7h5.55v5.50h-5.55zM248.3 422.2h5.55v5.50h-5.55zM287.2 444.2h5.55v5.50h-5.55zM253.9 477.2h5.55v5.50h-5.55zM281.6 477.2h5.55v5.50h-5.55zM287.2 510.2h5.55v5.50h-5.55zM298.3 510.2h5.55v5.50h-5.55zM287.2 543.2h5.55v5.50h-5.55zM292.7 653.2h5.55v5.50h-5.55zM429.4 328.7h5.55v5.50h-5.55zM418.3 383.7h5.55v5.50h-5.55zM396.1 422.2h5.55v5.50h-5.55zM423.9 510.2h5.55v5.50h-5.55zM440.5 543.2h5.55v5.50h-5.55zM423.9 576.2h5.55v5.50h-5.55zM435.0 592.7h5.55v5.50h-5.55zM435.0 273.5h5.55v5.00h-5.55z"/><path fill="#6c9fd5" d="M253.9 306.7h5.55v5.50h-5.55zM298.3 312.2h5.55v5.50h-5.55zM270.5 328.7h5.55v5.50h-5.55zM253.9 345.2h5.55v5.50h-5.55zM281.6 510.2h5.55v5.50h-5.55zM253.9 273.5h5.55v5.00h-5.55zM412.8 328.7h5.55v5.50h-5.55zM412.8 345.2h5.55v5.50h-5.55zM435.0 389.2h5.55v5.50h-5.55zM440.5 389.2h5.55v5.50h-5.55zM418.3 444.2h5.55v5.50h-5.55zM429.4 444.2h5.55v5.50h-5.55zM423.9 592.7h5.55v5.50h-5.55zM393.0 614.7h3.10v5.50h-3.10zM412.8 653.2h5.55v5.50h-5.55zM412.8 273.5h5.55v5.00h-5.55z"/><path fill="#78b4f0" d="M259.4 306.7h5.55v5.50h-5.55zM276.1 306.7h5.55v5.50h-5.55zM259.4 312.2h5.55v5.50h-5.55zM276.1 312.2h5.55v5.50h-5.55zM248.3 323.2h5.55v5.50h-5.55zM259.4 323.2h5.55v5.50h-5.55zM270.5 350.7h5.55v5.50h-5.55zM298.3 350.7h5.55v5.50h-5.55zM276.1 361.7h5.55v5.50h-5.55zM292.7 361.7h5.55v5.50h-5.55zM245.2 383.7h3.10v5.50h-3.10zM253.9 383.7h5.55v5.50h-5.55zM276.1 383.7h5.55v5.50h-5.55zM245.2 389.2h3.10v5.50h-3.10zM276.1 389.2h5.55v5.50h-5.55zM298.3 389.2h5.55v5.50h-5.55zM270.5 400.2h5.55v5.50h-5.55zM270.5 422.2h5.55v5.50h-5.55zM270.5 471.7h5.55v5.50h-5.55zM248.3 482.7h5.55v5.50h-5.55zM287.2 482.7h5.55v5.50h-5.55zM253.9 537.7h5.55v5.50h-5.55zM270.5 537.7h5.55v5.50h-5.55zM281.6 537.7h5.55v5.50h-5.55zM287.2 537.7h5.55v5.50h-5.55zM281.6 548.7h5.55v5.50h-5.55zM287.2 548.7h5.55v5.50h-5.55zM245.2 576.2h3.10v5.50h-3.10zM248.3 576.2h5.55v5.50h-5.55zM259.4 576.2h5.55v5.50h-5.55zM245.2 592.7h3.10v5.50h-3.10zM245.2 598.2h3.10v5.50h-3.10zM287.2 598.2h5.55v5.50h-5.55zM245.2 609.2h3.10v5.50h-3.10zM253.9 609.2h5.55v5.50h-5.55zM259.4 609.2h5.55v5.50h-5.55zM287.2 620.2h5.55v5.50h-5.55zM292.7 631.2h5.55v5.50h-5.55zM292.7 636.7h5.55v5.50h-5.55zM259.4 647.7h5.55v5.50h-5.55zM292.7 647.7h5.55v5.50h-5.55zM265.0 658.7h5.55v5.50h-5.55zM270.5 658.7h5.55v5.50h-5.55zM276.1 273.5h5.55v5.00h-5.55zM281.6 273.5h5.55v5.00h-5.55zM393.0 306.7h3.10v5.50h-3.10zM435.0 306.7h5.55v5.50h-5.55zM451.6 306.7h5.55v5.50h-5.55zM435.0 312.2h5.55v5.50h-5.55zM412.8 323.2h5.55v5.50h-5.55zM423.9 323.2h5.55v5.50h-5.55zM429.4 323.2h5.55v5.50h-5.55zM440.5 323.2h5.55v5.50h-5.55zM440.5 350.7h5.55v5.50h-5.55zM407.2 361.7h5.55v5.50h-5.55zM440.5 361.7h5.55v5.50h-5.55zM393.0 383.7h3.10v5.50h-3.10zM396.1 400.2h5.55v5.50h-5.55zM440.5 400.2h5.55v5.50h-5.55zM412.8 427.7h5.55v5.50h-5.55zM407.2 449.7h5.55v5.50h-5.55zM393.0 477.2h3.10v5.50h-3.10zM435.0 504.7h5.55v5.50h-5.55zM412.8 510.2h5.55v5.50h-5.55zM393.0 515.7h3.10v5.50h-3.10zM423.9 537.7h5.55v5.50h-5.55zM440.5 537.7h5.55v5.50h-5.55zM396.1 548.7h5.55v5.50h-5.55zM429.4 548.7h5.55v5.50h-5.55zM396.1 570.7h5.55v5.50h-5.55zM407.2 570.7h5.55v5.50h-5.55zM423.9 570.7h5.55v5.50h-5.55zM446.1 576.2h5.55v5.50h-5.55zM429.4 592.7h5.55v5.50h-5.55zM396.1 609.2h5.55v5.50h-5.55zM407.2 609.2h5.55v5.50h-5.55zM446.1 609.2h5.55v5.50h-5.55zM429.4 620.2h5.55v5.50h-5.55zM446.1 636.7h5.55v5.50h-5.55zM429.4 647.7h5.55v5.50h-5.55zM446.1 658.7h5.55v5.50h-5.55zM393.0 273.5h3.10v5.00h-3.10zM446.1 273.5h5.55v5.00h-5.55zM393.0 278.5h3.10v5.00h-3.10z"/><path fill="#72abe4" d="M265.0 306.7h5.55v5.50h-5.55zM292.7 328.7h5.55v5.50h-5.55zM253.9 361.7h5.55v5.50h-5.55zM259.4 361.7h5.55v5.50h-5.55zM281.6 361.7h5.55v5.50h-5.55zM287.2 367.2h5.55v5.50h-5.55zM259.4 405.7h5.55v5.50h-5.55zM281.6 438.7h5.55v5.50h-5.55zM292.7 438.7h5.55v5.50h-5.55zM245.2 444.2h3.10v5.50h-3.10zM265.0 444.2h5.55v5.50h-5.55zM270.5 444.2h5.55v5.50h-5.55zM245.2 482.7h3.10v5.50h-3.10zM248.3 515.7h5.55v5.50h-5.55zM292.7 515.7h5.55v5.50h-5.55zM253.9 548.7h5.55v5.50h-5.55zM265.0 548.7h5.55v5.50h-5.55zM298.3 548.7h5.55v5.50h-5.55zM265.0 576.2h5.55v5.50h-5.55zM270.5 581.7h5.55v5.50h-5.55zM270.5 598.2h5.55v5.50h-5.55zM292.7 609.2h5.55v5.50h-5.55zM259.4 620.2h5.55v5.50h-5.55zM265.0 636.7h5.55v5.50h-5.55zM270.5 636.7h5.55v5.50h-5.55zM287.2 636.7h5.55v5.50h-5.55zM298.3 636.7h5.55v5.50h-5.55zM245.2 278.5h3.10v5.00h-3.10zM270.5 278.5h5.55v5.00h-5.55zM281.6 278.5h5.55v5.00h-5.55zM396.1 350.7h5.55v5.50h-5.55zM418.3 405.7h5.55v5.50h-5.55zM435.0 422.2h5.55v5.50h-5.55zM401.7 438.7h5.55v5.50h-5.55zM446.1 471.7h5.55v5.50h-5.55zM418.3 477.2h5.55v5.50h-5.55zM435.0 477.2h5.55v5.50h-5.55zM429.4 510.2h5.55v5.50h-5.55zM412.8 548.7h5.55v5.50h-5.55zM412.8 581.7h5.55v5.50h-5.55zM401.7 598.2h5.55v5.50h-5.55zM401.7 620.2h5.55v5.50h-5.55zM446.1 620.2h5.55v5.50h-5.55zM435.0 631.2h5.55v5.50h-5.55zM429.4 658.7h5.55v5.50h-5.55z"/><path fill="#6090c0" d="M270.5 306.7h5.55v5.50h-5.55zM245.2 312.2h3.10v5.50h-3.10zM287.2 312.2h5.55v5.50h-5.55zM292.7 312.2h5.55v5.50h-5.55zM265.0 405.7h5.55v5.50h-5.55zM270.5 405.7h5.55v5.50h-5.55zM259.4 422.2h5.55v5.50h-5.55zM298.3 477.2h5.55v5.50h-5.55zM259.4 598.2h5.55v5.50h-5.55zM253.9 636.7h5.55v5.50h-5.55zM407.2 328.7h5.55v5.50h-5.55zM393.0 345.2h3.10v5.50h-3.10zM429.4 350.7h5.55v5.50h-5.55zM435.0 350.7h5.55v5.50h-5.55zM401.7 405.7h5.55v5.50h-5.55zM435.0 510.2h5.55v5.50h-5.55z"/><path fill="#6699cc" d="M281.6 306.7h5.55v5.50h-5.55zM281.6 312.2h5.55v5.50h-5.55zM248.3 328.7h5.55v5.50h-5.55zM259.4 328.7h5.55v5.50h-5.55zM265.0 328.7h5.55v5.50h-5.55zM270.5 383.7h5.55v5.50h-5.55zM270.5 389.2h5.55v5.50h-5.55zM287.2 389.2h5.55v5.50h-5.55zM287.2 422.2h5.55v5.50h-5.55zM281.6 543.2h5.55v5.50h-5.55zM253.9 631.2h5.55v5.50h-5.55zM270.5 653.2h5.55v5.50h-5.55zM407.2 306.7h5.55v5.50h-5.55zM412.8 306.7h5.55v5.50h-5.55zM407.2 312.2h5.55v5.50h-5.55zM412.8 312.2h5.55v5.50h-5.55zM423.9 328.7h5.55v5.50h-5.55zM446.1 328.7h5.55v5.50h-5.55zM423.9 389.2h5.55v5.50h-5.55zM429.4 543.2h5.55v5.50h-5.55zM418.3 576.2h5.55v5.50h-5.55zM412.8 614.7h5.55v5.50h-5.55zM393.0 631.2h3.10v5.50h-3.10zM429.4 636.7h5.55v5.50h-5.55zM396.1 273.5h5.55v5.00h-5.55z"/><path fill="#6090c3" d="M287.2 306.7h5.55v5.50h-5.55zM248.3 312.2h5.55v5.50h-5.55zM287.2 345.2h5.55v5.50h-5.55zM259.4 592.7h5.55v5.50h-5.55zM412.8 389.2h5.55v5.50h-5.55zM407.2 422.2h5.55v5.50h-5.55zM407.2 636.7h5.55v5.50h-5.55z"/><path fill="#6393c6" d="M292.7 306.7h5.55v5.50h-5.55zM270.5 312.2h5.55v5.50h-5.55zM281.6 427.7h5.55v5.50h-5.55zM253.9 592.7h5.55v5.50h-5.55zM248.3 598.2h5.55v5.50h-5.55zM287.2 273.5h5.55v5.00h-5.55zM401.7 306.7h5.55v5.50h-5.55zM393.0 350.7h3.10v5.50h-3.10zM401.7 383.7h5.55v5.50h-5.55zM412.8 383.7h5.55v5.50h-5.55zM446.1 405.7h5.55v5.50h-5.55zM418.3 273.5h5.55v5.00h-5.55zM423.9 273.5h5.55v5.00h-5.55z"/><path fill="#6ca2d8" d="M298.3 306.7h5.55v5.50h-5.55zM253.9 350.7h5.55v5.50h-5.55zM298.3 422.2h5.55v5.50h-5.55zM245.2 427.7h3.10v5.50h-3.10zM259.4 444.2h5.55v5.50h-5.55zM276.1 444.2h5.55v5.50h-5.55zM292.7 543.2h5.55v5.50h-5.55zM259.4 631.2h5.55v5.50h-5.55zM253.9 653.2h5.55v5.50h-5.55zM423.9 312.2h5.55v5.50h-5.55zM429.4 312.2h5.55v5.50h-5.55zM440.5 312.2h5.55v5.50h-5.55zM396.1 367.2h5.55v5.50h-5.55zM440.5 383.7h5.55v5.50h-5.55zM393.0 405.7h3.10v5.50h-3.10zM407.2 405.7h5.55v5.50h-5.55zM407.2 543.2h5.55v5.50h-5.55zM440.5 592.7h5.55v5.50h-5.55zM412.8 631.2h5.55v5.50h-5.55zM429.4 631.2h5.55v5.50h-5.55zM396.1 653.2h5.55v5.50h-5.55zM446.1 653.2h5.55v5.50h-5.55zM401.7 278.5h5.55v5.00h-5.55z"/><path fill="#81c0ff" d="M303.8 306.7h5.55v5.50h-5.55zM309.4 306.7h1.35v5.50h-1.35zM303.8 312.2h5.55v5.50h-5.55zM309.4 312.2h1.35v5.50h-1.35zM303.8 323.2h5.55v5.50h-5.55zM309.4 323.2h1.35v5.50h-1.35zM303.8 328.7h5.55v5.50h-5.55zM309.4 328.7h1.35v5.50h-1.35zM303.8 345.2h5.55v5.50h-5.55zM309.4 345.2h1.35v5.50h-1.35zM309.4 350.7h1.35v5.50h-1.35zM303.8 361.7h5.55v5.50h-5.55zM309.4 361.7h1.35v5.50h-1.35zM303.8 367.2h5.55v5.50h-5.55zM309.4 367.2h1.35v5.50h-1.35zM303.8 383.7h5.55v5.50h-5.55zM309.4 383.7h1.35v5.50h-1.35zM303.8 389.2h5.55v5.50h-5.55zM309.4 389.2h1.35v5.50h-1.35zM309.4 400.2h1.35v5.50h-1.35zM309.4 405.7h1.35v5.50h-1.35zM303.8 422.2h5.55v5.50h-5.55zM309.4 422.2h1.35v5.50h-1.35zM303.8 427.7h5.55v5.50h-5.55zM309.4 427.7h1.35v5.50h-1.35zM309.4 438.7h1.35v5.50h-1.35zM309.4 444.2h1.35v5.50h-1.35zM309.4 449.7h1.35v5.50h-1.35zM245.2 455.2h3.10v5.50h-3.10zM248.3 455.2h5.55v5.50h-5.55zM253.9 455.2h5.55v5.50h-5.55zM259.4 455.2h5.55v5.50h-5.55zM265.0 455.2h5.55v5.50h-5.55zM270.5 455.2h5.55v5.50h-5.55zM276.1 455.2h5.55v5.50h-5.55zM281.6 455.2h5.55v5.50h-5.55zM287.2 455.2h5.55v5.50h-5.55zM292.7 455.2h5.55v5.50h-5.55zM298.3 455.2h5.55v5.50h-5.55zM303.8 455.2h5.55v5.50h-5.55zM309.4 455.2h1.35v5.50h-1.35zM245.2 460.7h3.10v5.50h-3.10zM248.3 460.7h5.55v5.50h-5.55zM253.9 460.7h5.55v5.50h-5.55zM259.4 460.7h5.55v5.50h-5.55zM265.0 460.7h5.55v5.50h-5.55zM270.5 460.7h5.55v5.50h-5.55zM276.1 460.7h5.55v5.50h-5.55zM281.6 460.7h5.55v5.50h-5.55zM287.2 460.7h5.55v5.50h-5.55zM292.7 460.7h5.55v5.50h-5.55zM298.3 460.7h5.55v5.50h-5.55zM303.8 460.7h5.55v5.50h-5.55zM309.4 460.7h1.35v5.50h-1.35zM303.8 471.7h5.55v5.50h-5.55zM309.4 471.7h1.35v5.50h-1.35zM309.4 477.2h1.35v5.50h-1.35zM309.4 482.7h1.35v5.50h-1.35zM245.2 488.2h3.10v5.50h-3.10zM248.3 488.2h5.55v5.50h-5.55zM253.9 488.2h5.55v5.50h-5.55zM259.4 488.2h5.55v5.50h-5.55zM265.0 488.2h5.55v5.50h-5.55zM270.5 488.2h5.55v5.50h-5.55zM276.1 488.2h5.55v5.50h-5.55zM281.6 488.2h5.55v5.50h-5.55zM287.2 488.2h5.55v5.50h-5.55zM292.7 488.2h5.55v5.50h-5.55zM298.3 488.2h5.55v5.50h-5.55zM303.8 488.2h5.55v5.50h-5.55zM309.4 488.2h1.35v5.50h-1.35zM245.2 493.7h3.10v5.50h-3.10zM248.3 493.7h5.55v5.50h-5.55zM253.9 493.7h5.55v5.50h-5.55zM259.4 493.7h5.55v5.50h-5.55zM265.0 493.7h5.55v5.50h-5.55zM270.5 493.7h5.55v5.50h-5.55zM276.1 493.7h5.55v5.50h-5.55zM281.6 493.7h5.55v5.50h-5.55zM287.2 493.7h5.55v5.50h-5.55zM292.7 493.7h5.55v5.50h-5.55zM298.3 493.7h5.55v5.50h-5.55zM303.8 493.7h5.55v5.50h-5.55zM309.4 493.7h1.35v5.50h-1.35zM309.4 504.7h1.35v5.50h-1.35zM309.4 510.2h1.35v5.50h-1.35zM309.4 515.7h1.35v5.50h-1.35zM245.2 521.2h3.10v5.50h-3.10zM248.3 521.2h5.55v5.50h-5.55zM253.9 521.2h5.55v5.50h-5.55zM259.4 521.2h5.55v5.50h-5.55zM265.0 521.2h5.55v5.50h-5.55zM270.5 521.2h5.55v5.50h-5.55zM276.1 521.2h5.55v5.50h-5.55zM281.6 521.2h5.55v5.50h-5.55zM287.2 521.2h5.55v5.50h-5.55zM292.7 521.2h5.55v5.50h-5.55zM298.3 521.2h5.55v5.50h-5.55zM303.8 521.2h5.55v5.50h-5.55zM309.4 521.2h1.35v5.50h-1.35zM245.2 526.7h3.10v5.50h-3.10zM248.3 526.7h5.55v5.50h-5.55zM253.9 526.7h5.55v5.50h-5.55zM259.4 526.7h5.55v5.50h-5.55zM265.0 526.7h5.55v5.50h-5.55zM270.5 526.7h5.55v5.50h-5.55zM276.1 526.7h5.55v5.50h-5.55zM281.6 526.7h5.55v5.50h-5.55zM287.2 526.7h5.55v5.50h-5.55zM292.7 526.7h5.55v5.50h-5.55zM298.3 526.7h5.55v5.50h-5.55zM303.8 526.7h5.55v5.50h-5.55zM309.4 526.7h1.35v5.50h-1.35zM303.8 537.7h5.55v5.50h-5.55zM309.4 537.7h1.35v5.50h-1.35zM303.8 543.2h5.55v5.50h-5.55zM309.4 543.2h1.35v5.50h-1.35zM303.8 548.7h5.55v5.50h-5.55zM309.4 548.7h1.35v5.50h-1.35zM245.2 554.2h3.10v5.50h-3.10zM248.3 554.2h5.55v5.50h-5.55zM253.9 554.2h5.55v5.50h-5.55zM259.4 554.2h5.55v5.50h-5.55zM265.0 554.2h5.55v5.50h-5.55zM270.5 554.2h5.55v5.50h-5.55zM276.1 554.2h5.55v5.50h-5.55zM281.6 554.2h5.55v5.50h-5.55zM287.2 554.2h5.55v5.50h-5.55zM292.7 554.2h5.55v5.50h-5.55zM298.3 554.2h5.55v5.50h-5.55zM303.8 554.2h5.55v5.50h-5.55zM309.4 554.2h1.35v5.50h-1.35zM245.2 559.7h3.10v5.50h-3.10zM248.3 559.7h5.55v5.50h-5.55zM253.9 559.7h5.55v5.50h-5.55zM259.4 559.7h5.55v5.50h-5.55zM265.0 559.7h5.55v5.50h-5.55zM270.5 559.7h5.55v5.50h-5.55zM276.1 559.7h5.55v5.50h-5.55zM281.6 559.7h5.55v5.50h-5.55zM287.2 559.7h5.55v5.50h-5.55zM292.7 559.7h5.55v5.50h-5.55zM298.3 559.7h5.55v5.50h-5.55zM303.8 559.7h5.55v5.50h-5.55zM309.4 559.7h1.35v5.50h-1.35zM303.8 570.7h5.55v5.50h-5.55zM309.4 570.7h1.35v5.50h-1.35zM303.8 576.2h5.55v5.50h-5.55zM309.4 576.2h1.35v5.50h-1.35zM303.8 581.7h5.55v5.50h-5.55zM309.4 581.7h1.35v5.50h-1.35zM303.8 592.7h5.55v5.50h-5.55zM309.4 592.7h1.35v5.50h-1.35zM303.8 598.2h5.55v5.50h-5.55zM309.4 598.2h1.35v5.50h-1.35zM303.8 609.2h5.55v5.50h-5.55zM309.4 609.2h1.35v5.50h-1.35zM303.8 614.7h5.55v5.50h-5.55zM309.4 614.7h1.35v5.50h-1.35zM303.8 620.2h5.55v5.50h-5.55zM309.4 620.2h1.35v5.50h-1.35zM309.4 631.2h1.35v5.50h-1.35zM309.4 636.7h1.35v5.50h-1.35zM303.8 647.7h5.55v5.50h-5.55zM309.4 647.7h1.35v5.50h-1.35zM303.8 653.2h5.55v5.50h-5.55zM309.4 653.2h1.35v5.50h-1.35zM303.8 658.7h5.55v5.50h-5.55zM309.4 658.7h1.35v5.50h-1.35zM245.2 664.2h3.10v5.50h-3.10zM248.3 664.2h5.55v5.50h-5.55zM253.9 664.2h5.55v5.50h-5.55zM259.4 664.2h5.55v5.50h-5.55zM265.0 664.2h5.55v5.50h-5.55zM270.5 664.2h5.55v5.50h-5.55zM276.1 664.2h5.55v5.50h-5.55zM281.6 664.2h5.55v5.50h-5.55zM287.2 664.2h5.55v5.50h-5.55zM292.7 664.2h5.55v5.50h-5.55zM298.3 664.2h5.55v5.50h-5.55zM303.8 664.2h5.55v5.50h-5.55zM309.4 664.2h1.35v5.50h-1.35zM245.2 669.7h3.10v2.90h-3.10zM248.3 669.7h5.55v2.90h-5.55zM253.9 669.7h5.55v2.90h-5.55zM259.4 669.7h5.55v2.90h-5.55zM265.0 669.7h5.55v2.90h-5.55zM270.5 669.7h5.55v2.90h-5.55zM276.1 669.7h5.55v2.90h-5.55zM281.6 669.7h5.55v2.90h-5.55zM287.2 669.7h5.55v2.90h-5.55zM292.7 669.7h5.55v2.90h-5.55zM298.3 669.7h5.55v2.90h-5.55zM303.8 669.7h5.55v2.90h-5.55zM309.4 669.7h1.35v2.90h-1.35zM309.4 273.5h1.35v5.00h-1.35zM309.4 278.5h1.35v5.00h-1.35zM245.2 283.5h3.10v5.00h-3.10zM248.3 283.5h5.55v5.00h-5.55zM253.9 283.5h5.55v5.00h-5.55zM259.4 283.5h5.55v5.00h-5.55zM265.0 283.5h5.55v5.00h-5.55zM270.5 283.5h5.55v5.00h-5.55zM276.1 283.5h5.55v5.00h-5.55zM281.6 283.5h5.55v5.00h-5.55zM287.2 283.5h5.55v5.00h-5.55zM292.7 283.5h5.55v5.00h-5.55zM298.3 283.5h5.55v5.00h-5.55zM303.8 283.5h5.55v5.00h-5.55zM309.4 283.5h1.35v5.00h-1.35zM457.2 306.7h5.55v5.50h-5.55zM462.7 306.7h4.30v5.50h-4.30zM457.2 312.2h5.55v5.50h-5.55zM462.7 312.2h4.30v5.50h-4.30zM451.6 323.2h5.55v5.50h-5.55zM457.2 323.2h5.55v5.50h-5.55zM462.7 323.2h4.30v5.50h-4.30zM451.6 328.7h5.55v5.50h-5.55zM457.2 328.7h5.55v5.50h-5.55zM462.7 328.7h4.30v5.50h-4.30zM451.6 345.2h5.55v5.50h-5.55zM457.2 345.2h5.55v5.50h-5.55zM462.7 345.2h4.30v5.50h-4.30zM451.6 350.7h5.55v5.50h-5.55zM457.2 350.7h5.55v5.50h-5.55zM462.7 350.7h4.30v5.50h-4.30zM451.6 361.7h5.55v5.50h-5.55zM457.2 361.7h5.55v5.50h-5.55zM462.7 361.7h4.30v5.50h-4.30zM451.6 367.2h5.55v5.50h-5.55zM457.2 367.2h5.55v5.50h-5.55zM462.7 367.2h4.30v5.50h-4.30zM451.6 383.7h5.55v5.50h-5.55zM457.2 383.7h5.55v5.50h-5.55zM462.7 383.7h4.30v5.50h-4.30zM451.6 389.2h5.55v5.50h-5.55zM457.2 389.2h5.55v5.50h-5.55zM462.7 389.2h4.30v5.50h-4.30zM451.6 400.2h5.55v5.50h-5.55zM457.2 400.2h5.55v5.50h-5.55zM462.7 400.2h4.30v5.50h-4.30zM451.6 405.7h5.55v5.50h-5.55zM457.2 405.7h5.55v5.50h-5.55zM462.7 405.7h4.30v5.50h-4.30zM451.6 422.2h5.55v5.50h-5.55zM457.2 422.2h5.55v5.50h-5.55zM462.7 422.2h4.30v5.50h-4.30zM451.6 427.7h5.55v5.50h-5.55zM457.2 427.7h5.55v5.50h-5.55zM462.7 427.7h4.30v5.50h-4.30zM457.2 438.7h5.55v5.50h-5.55zM462.7 438.7h4.30v5.50h-4.30zM457.2 444.2h5.55v5.50h-5.55zM462.7 444.2h4.30v5.50h-4.30zM457.2 449.7h5.55v5.50h-5.55zM462.7 449.7h4.30v5.50h-4.30zM393.0 455.2h3.10v5.50h-3.10zM396.1 455.2h5.55v5.50h-5.55zM401.7 455.2h5.55v5.50h-5.55zM407.2 455.2h5.55v5.50h-5.55zM412.8 455.2h5.55v5.50h-5.55zM418.3 455.2h5.55v5.50h-5.55zM423.9 455.2h5.55v5.50h-5.55zM429.4 455.2h5.55v5.50h-5.55zM435.0 455.2h5.55v5.50h-5.55zM440.5 455.2h5.55v5.50h-5.55zM446.1 455.2h5.55v5.50h-5.55zM451.6 455.2h5.55v5.50h-5.55zM457.2 455.2h5.55v5.50h-5.55zM462.7 455.2h4.30v5.50h-4.30zM393.0 460.7h3.10v5.50h-3.10zM396.1 460.7h5.55v5.50h-5.55zM401.7 460.7h5.55v5.50h-5.55zM407.2 460.7h5.55v5.50h-5.55zM412.8 460.7h5.55v5.50h-5.55zM418.3 460.7h5.55v5.50h-5.55zM423.9 460.7h5.55v5.50h-5.55zM429.4 460.7h5.55v5.50h-5.55zM435.0 460.7h5.55v5.50h-5.55zM440.5 460.7h5.55v5.50h-5.55zM446.1 460.7h5.55v5.50h-5.55zM451.6 460.7h5.55v5.50h-5.55zM457.2 460.7h5.55v5.50h-5.55zM462.7 460.7h4.30v5.50h-4.30zM451.6 471.7h5.55v5.50h-5.55zM457.2 471.7h5.55v5.50h-5.55zM462.7 471.7h4.30v5.50h-4.30zM451.6 477.2h5.55v5.50h-5.55zM457.2 477.2h5.55v5.50h-5.55zM462.7 477.2h4.30v5.50h-4.30zM451.6 482.7h5.55v5.50h-5.55zM457.2 482.7h5.55v5.50h-5.55zM462.7 482.7h4.30v5.50h-4.30zM393.0 488.2h3.10v5.50h-3.10zM396.1 488.2h5.55v5.50h-5.55zM401.7 488.2h5.55v5.50h-5.55zM407.2 488.2h5.55v5.50h-5.55zM412.8 488.2h5.55v5.50h-5.55zM418.3 488.2h5.55v5.50h-5.55zM423.9 488.2h5.55v5.50h-5.55zM429.4 488.2h5.55v5.50h-5.55zM435.0 488.2h5.55v5.50h-5.55zM440.5 488.2h5.55v5.50h-5.55zM446.1 488.2h5.55v5.50h-5.55zM451.6 488.2h5.55v5.50h-5.55zM457.2 488.2h5.55v5.50h-5.55zM462.7 488.2h4.30v5.50h-4.30zM393.0 493.7h3.10v5.50h-3.10zM396.1 493.7h5.55v5.50h-5.55zM401.7 493.7h5.55v5.50h-5.55zM407.2 493.7h5.55v5.50h-5.55zM412.8 493.7h5.55v5.50h-5.55zM418.3 493.7h5.55v5.50h-5.55zM423.9 493.7h5.55v5.50h-5.55zM429.4 493.7h5.55v5.50h-5.55zM435.0 493.7h5.55v5.50h-5.55zM440.5 493.7h5.55v5.50h-5.55zM446.1 493.7h5.55v5.50h-5.55zM451.6 493.7h5.55v5.50h-5.55zM457.2 493.7h5.55v5.50h-5.55zM462.7 493.7h4.30v5.50h-4.30zM451.6 504.7h5.55v5.50h-5.55zM457.2 504.7h5.55v5.50h-5.55zM462.7 504.7h4.30v5.50h-4.30zM457.2 510.2h5.55v5.50h-5.55zM462.7 510.2h4.30v5.50h-4.30zM457.2 515.7h5.55v5.50h-5.55zM462.7 515.7h4.30v5.50h-4.30zM393.0 521.2h3.10v5.50h-3.10zM396.1 521.2h5.55v5.50h-5.55zM401.7 521.2h5.55v5.50h-5.55zM407.2 521.2h5.55v5.50h-5.55zM412.8 521.2h5.55v5.50h-5.55zM418.3 521.2h5.55v5.50h-5.55zM423.9 521.2h5.55v5.50h-5.55zM429.4 521.2h5.55v5.50h-5.55zM435.0 521.2h5.55v5.50h-5.55zM440.5 521.2h5.55v5.50h-5.55zM446.1 521.2h5.55v5.50h-5.55zM451.6 521.2h5.55v5.50h-5.55zM457.2 521.2h5.55v5.50h-5.55zM462.7 521.2h4.30v5.50h-4.30zM393.0 526.7h3.10v5.50h-3.10zM396.1 526.7h5.55v5.50h-5.55zM401.7 526.7h5.55v5.50h-5.55zM407.2 526.7h5.55v5.50h-5.55zM412.8 526.7h5.55v5.50h-5.55zM418.3 526.7h5.55v5.50h-5.55zM423.9 526.7h5.55v5.50h-5.55zM429.4 526.7h5.55v5.50h-5.55zM435.0 526.7h5.55v5.50h-5.55zM440.5 526.7h5.55v5.50h-5.55zM446.1 526.7h5.55v5.50h-5.55zM451.6 526.7h5.55v5.50h-5.55zM457.2 526.7h5.55v5.50h-5.55zM462.7 526.7h4.30v5.50h-4.30zM451.6 537.7h5.55v5.50h-5.55zM457.2 537.7h5.55v5.50h-5.55zM462.7 537.7h4.30v5.50h-4.30zM457.2 543.2h5.55v5.50h-5.55zM462.7 543.2h4.30v5.50h-4.30zM451.6 548.7h5.55v5.50h-5.55zM457.2 548.7h5.55v5.50h-5.55zM462.7 548.7h4.30v5.50h-4.30zM393.0 554.2h3.10v5.50h-3.10zM396.1 554.2h5.55v5.50h-5.55zM401.7 554.2h5.55v5.50h-5.55zM407.2 554.2h5.55v5.50h-5.55zM412.8 554.2h5.55v5.50h-5.55zM418.3 554.2h5.55v5.50h-5.55zM423.9 554.2h5.55v5.50h-5.55zM429.4 554.2h5.55v5.50h-5.55zM435.0 554.2h5.55v5.50h-5.55zM440.5 554.2h5.55v5.50h-5.55zM446.1 554.2h5.55v5.50h-5.55zM451.6 554.2h5.55v5.50h-5.55zM457.2 554.2h5.55v5.50h-5.55zM462.7 554.2h4.30v5.50h-4.30zM393.0 559.7h3.10v5.50h-3.10zM396.1 559.7h5.55v5.50h-5.55zM401.7 559.7h5.55v5.50h-5.55zM407.2 559.7h5.55v5.50h-5.55zM412.8 559.7h5.55v5.50h-5.55zM418.3 559.7h5.55v5.50h-5.55zM423.9 559.7h5.55v5.50h-5.55zM429.4 559.7h5.55v5.50h-5.55zM435.0 559.7h5.55v5.50h-5.55zM440.5 559.7h5.55v5.50h-5.55zM446.1 559.7h5.55v5.50h-5.55zM451.6 559.7h5.55v5.50h-5.55zM457.2 559.7h5.55v5.50h-5.55zM462.7 559.7h4.30v5.50h-4.30zM451.6 570.7h5.55v5.50h-5.55zM457.2 570.7h5.55v5.50h-5.55zM462.7 570.7h4.30v5.50h-4.30zM451.6 576.2h5.55v5.50h-5.55zM457.2 576.2h5.55v5.50h-5.55zM462.7 576.2h4.30v5.50h-4.30zM451.6 581.7h5.55v5.50h-5.55zM457.2 581.7h5.55v5.50h-5.55zM462.7 581.7h4.30v5.50h-4.30zM451.6 592.7h5.55v5.50h-5.55zM457.2 592.7h5.55v5.50h-5.55zM462.7 592.7h4.30v5.50h-4.30zM451.6 598.2h5.55v5.50h-5.55zM457.2 598.2h5.55v5.50h-5.55zM462.7 598.2h4.30v5.50h-4.30zM451.6 609.2h5.55v5.50h-5.55zM457.2 609.2h5.55v5.50h-5.55zM462.7 609.2h4.30v5.50h-4.30zM451.6 614.7h5.55v5.50h-5.55zM457.2 614.7h5.55v5.50h-5.55zM462.7 614.7h4.30v5.50h-4.30zM451.6 620.2h5.55v5.50h-5.55zM457.2 620.2h5.55v5.50h-5.55zM462.7 620.2h4.30v5.50h-4.30zM451.6 631.2h5.55v5.50h-5.55zM457.2 631.2h5.55v5.50h-5.55zM462.7 631.2h4.30v5.50h-4.30zM451.6 636.7h5.55v5.50h-5.55zM457.2 636.7h5.55v5.50h-5.55zM462.7 636.7h4.30v5.50h-4.30zM457.2 647.7h5.55v5.50h-5.55zM462.7 647.7h4.30v5.50h-4.30zM457.2 653.2h5.55v5.50h-5.55zM462.7 653.2h4.30v5.50h-4.30zM457.2 658.7h5.55v5.50h-5.55zM462.7 658.7h4.30v5.50h-4.30zM393.0 664.2h3.10v5.50h-3.10zM396.1 664.2h5.55v5.50h-5.55zM401.7 664.2h5.55v5.50h-5.55zM407.2 664.2h5.55v5.50h-5.55zM412.8 664.2h5.55v5.50h-5.55zM418.3 664.2h5.55v5.50h-5.55zM423.9 664.2h5.55v5.50h-5.55zM429.4 664.2h5.55v5.50h-5.55zM435.0 664.2h5.55v5.50h-5.55zM440.5 664.2h5.55v5.50h-5.55zM446.1 664.2h5.55v5.50h-5.55zM451.6 664.2h5.55v5.50h-5.55zM457.2 664.2h5.55v5.50h-5.55zM462.7 664.2h4.30v5.50h-4.30zM393.0 669.7h3.10v2.90h-3.10zM396.1 669.7h5.55v2.90h-5.55zM401.7 669.7h5.55v2.90h-5.55zM407.2 669.7h5.55v2.90h-5.55zM412.8 669.7h5.55v2.90h-5.55zM418.3 669.7h5.55v2.90h-5.55zM423.9 669.7h5.55v2.90h-5.55zM429.4 669.7h5.55v2.90h-5.55zM435.0 669.7h5.55v2.90h-5.55zM440.5 669.7h5.55v2.90h-5.55zM446.1 669.7h5.55v2.90h-5.55zM451.6 669.7h5.55v2.90h-5.55zM457.2 669.7h5.55v2.90h-5.55zM462.7 669.7h4.30v2.90h-4.30zM451.6 273.5h5.55v5.00h-5.55zM457.2 273.5h5.55v5.00h-5.55zM462.7 273.5h4.30v5.00h-4.30zM451.6 278.5h5.55v5.00h-5.55zM457.2 278.5h5.55v5.00h-5.55zM462.7 278.5h4.30v5.00h-4.30zM393.0 283.5h3.10v5.00h-3.10zM396.1 283.5h5.55v5.00h-5.55zM401.7 283.5h5.55v5.00h-5.55zM407.2 283.5h5.55v5.00h-5.55zM412.8 283.5h5.55v5.00h-5.55zM418.3 283.5h5.55v5.00h-5.55zM423.9 283.5h5.55v5.00h-5.55zM429.4 283.5h5.55v5.00h-5.55zM435.0 283.5h5.55v5.00h-5.55zM440.5 283.5h5.55v5.00h-5.55zM446.1 283.5h5.55v5.00h-5.55zM451.6 283.5h5.55v5.00h-5.55zM457.2 283.5h5.55v5.00h-5.55zM462.7 283.5h4.30v5.00h-4.30z"/><path fill="#6fa5db" d="M253.9 312.2h5.55v5.50h-5.55zM253.9 328.7h5.55v5.50h-5.55zM281.6 389.2h5.55v5.50h-5.55zM292.7 405.7h5.55v5.50h-5.55zM292.7 422.2h5.55v5.50h-5.55zM298.3 427.7h5.55v5.50h-5.55zM270.5 620.2h5.55v5.50h-5.55zM423.9 306.7h5.55v5.50h-5.55zM407.2 389.2h5.55v5.50h-5.55zM401.7 422.2h5.55v5.50h-5.55zM401.7 427.7h5.55v5.50h-5.55zM429.4 581.7h5.55v5.50h-5.55zM407.2 592.7h5.55v5.50h-5.55zM440.5 620.2h5.55v5.50h-5.55zM407.2 653.2h5.55v5.50h-5.55zM393.0 658.7h3.10v5.50h-3.10z"/><path fill="#75aee7" d="M265.0 312.2h5.55v5.50h-5.55zM287.2 323.2h5.55v5.50h-5.55zM298.3 361.7h5.55v5.50h-5.55zM248.3 389.2h5.55v5.50h-5.55zM259.4 389.2h5.55v5.50h-5.55zM253.9 400.2h5.55v5.50h-5.55zM248.3 444.2h5.55v5.50h-5.55zM281.6 449.7h5.55v5.50h-5.55zM292.7 471.7h5.55v5.50h-5.55zM276.1 482.7h5.55v5.50h-5.55zM292.7 482.7h5.55v5.50h-5.55zM259.4 537.7h5.55v5.50h-5.55zM276.1 609.2h5.55v5.50h-5.55zM281.6 636.7h5.55v5.50h-5.55zM276.1 658.7h5.55v5.50h-5.55zM259.4 273.5h5.55v5.00h-5.55zM265.0 273.5h5.55v5.00h-5.55zM393.0 323.2h3.10v5.50h-3.10zM418.3 328.7h5.55v5.50h-5.55zM446.1 345.2h5.55v5.50h-5.55zM401.7 350.7h5.55v5.50h-5.55zM446.1 350.7h5.55v5.50h-5.55zM446.1 361.7h5.55v5.50h-5.55zM429.4 367.2h5.55v5.50h-5.55zM429.4 383.7h5.55v5.50h-5.55zM446.1 389.2h5.55v5.50h-5.55zM412.8 400.2h5.55v5.50h-5.55zM393.0 438.7h3.10v5.50h-3.10zM396.1 438.7h5.55v5.50h-5.55zM440.5 444.2h5.55v5.50h-5.55zM393.0 449.7h3.10v5.50h-3.10zM401.7 449.7h5.55v5.50h-5.55zM429.4 482.7h5.55v5.50h-5.55zM440.5 482.7h5.55v5.50h-5.55zM440.5 504.7h5.55v5.50h-5.55zM418.3 510.2h5.55v5.50h-5.55zM407.2 515.7h5.55v5.50h-5.55zM393.0 537.7h3.10v5.50h-3.10zM412.8 592.7h5.55v5.50h-5.55zM446.1 592.7h5.55v5.50h-5.55zM396.1 620.2h5.55v5.50h-5.55zM401.7 653.2h5.55v5.50h-5.55zM401.7 273.5h5.55v5.00h-5.55z"/><path fill="#aed5ff" d="M245.2 317.7h3.10v5.50h-3.10zM248.3 317.7h5.55v5.50h-5.55zM253.9 317.7h5.55v5.50h-5.55zM259.4 317.7h5.55v5.50h-5.55zM265.0 317.7h5.55v5.50h-5.55zM270.5 317.7h5.55v5.50h-5.55zM276.1 317.7h5.55v5.50h-5.55zM281.6 317.7h5.55v5.50h-5.55zM287.2 317.7h5.55v5.50h-5.55zM292.7 317.7h5.55v5.50h-5.55zM298.3 317.7h5.55v5.50h-5.55zM303.8 317.7h5.55v5.50h-5.55zM309.4 317.7h1.35v5.50h-1.35zM245.2 356.2h3.10v5.50h-3.10zM248.3 356.2h5.55v5.50h-5.55zM253.9 356.2h5.55v5.50h-5.55zM259.4 356.2h5.55v5.50h-5.55zM265.0 356.2h5.55v5.50h-5.55zM270.5 356.2h5.55v5.50h-5.55zM276.1 356.2h5.55v5.50h-5.55zM281.6 356.2h5.55v5.50h-5.55zM287.2 356.2h5.55v5.50h-5.55zM292.7 356.2h5.55v5.50h-5.55zM298.3 356.2h5.55v5.50h-5.55zM303.8 356.2h5.55v5.50h-5.55zM309.4 356.2h1.35v5.50h-1.35zM245.2 394.7h3.10v5.50h-3.10zM248.3 394.7h5.55v5.50h-5.55zM253.9 394.7h5.55v5.50h-5.55zM259.4 394.7h5.55v5.50h-5.55zM265.0 394.7h5.55v5.50h-5.55zM270.5 394.7h5.55v5.50h-5.55zM276.1 394.7h5.55v5.50h-5.55zM281.6 394.7h5.55v5.50h-5.55zM287.2 394.7h5.55v5.50h-5.55zM292.7 394.7h5.55v5.50h-5.55zM298.3 394.7h5.55v5.50h-5.55zM303.8 394.7h5.55v5.50h-5.55zM309.4 394.7h1.35v5.50h-1.35zM245.2 433.2h3.10v5.50h-3.10zM248.3 433.2h5.55v5.50h-5.55zM253.9 433.2h5.55v5.50h-5.55zM259.4 433.2h5.55v5.50h-5.55zM265.0 433.2h5.55v5.50h-5.55zM270.5 433.2h5.55v5.50h-5.55zM276.1 433.2h5.55v5.50h-5.55zM281.6 433.2h5.55v5.50h-5.55zM287.2 433.2h5.55v5.50h-5.55zM292.7 433.2h5.55v5.50h-5.55zM298.3 433.2h5.55v5.50h-5.55zM303.8 433.2h5.55v5.50h-5.55zM309.4 433.2h1.35v5.50h-1.35zM245.2 466.2h3.10v5.50h-3.10zM248.3 466.2h5.55v5.50h-5.55zM253.9 466.2h5.55v5.50h-5.55zM259.4 466.2h5.55v5.50h-5.55zM265.0 466.2h5.55v5.50h-5.55zM270.5 466.2h5.55v5.50h-5.55zM276.1 466.2h5.55v5.50h-5.55zM281.6 466.2h5.55v5.50h-5.55zM287.2 466.2h5.55v5.50h-5.55zM292.7 466.2h5.55v5.50h-5.55zM298.3 466.2h5.55v5.50h-5.55zM303.8 466.2h5.55v5.50h-5.55zM309.4 466.2h1.35v5.50h-1.35zM245.2 499.2h3.10v5.50h-3.10zM248.3 499.2h5.55v5.50h-5.55zM253.9 499.2h5.55v5.50h-5.55zM259.4 499.2h5.55v5.50h-5.55zM265.0 499.2h5.55v5.50h-5.55zM270.5 499.2h5.55v5.50h-5.55zM276.1 499.2h5.55v5.50h-5.55zM281.6 499.2h5.55v5.50h-5.55zM287.2 499.2h5.55v5.50h-5.55zM292.7 499.2h5.55v5.50h-5.55zM298.3 499.2h5.55v5.50h-5.55zM303.8 499.2h5.55v5.50h-5.55zM309.4 499.2h1.35v5.50h-1.35zM245.2 532.2h3.10v5.50h-3.10zM248.3 532.2h5.55v5.50h-5.55zM253.9 532.2h5.55v5.50h-5.55zM259.4 532.2h5.55v5.50h-5.55zM265.0 532.2h5.55v5.50h-5.55zM270.5 532.2h5.55v5.50h-5.55zM276.1 532.2h5.55v5.50h-5.55zM281.6 532.2h5.55v5.50h-5.55zM287.2 532.2h5.55v5.50h-5.55zM292.7 532.2h5.55v5.50h-5.55zM298.3 532.2h5.55v5.50h-5.55zM303.8 532.2h5.55v5.50h-5.55zM309.4 532.2h1.35v5.50h-1.35zM245.2 565.2h3.10v5.50h-3.10zM248.3 565.2h5.55v5.50h-5.55zM253.9 565.2h5.55v5.50h-5.55zM259.4 565.2h5.55v5.50h-5.55zM265.0 565.2h5.55v5.50h-5.55zM270.5 565.2h5.55v5.50h-5.55zM276.1 565.2h5.55v5.50h-5.55zM281.6 565.2h5.55v5.50h-5.55zM287.2 565.2h5.55v5.50h-5.55zM292.7 565.2h5.55v5.50h-5.55zM298.3 565.2h5.55v5.50h-5.55zM303.8 565.2h5.55v5.50h-5.55zM309.4 565.2h1.35v5.50h-1.35zM245.2 587.2h3.10v5.50h-3.10zM248.3 587.2h5.55v5.50h-5.55zM253.9 587.2h5.55v5.50h-5.55zM259.4 587.2h5.55v5.50h-5.55zM265.0 587.2h5.55v5.50h-5.55zM270.5 587.2h5.55v5.50h-5.55zM276.1 587.2h5.55v5.50h-5.55zM281.6 587.2h5.55v5.50h-5.55zM287.2 587.2h5.55v5.50h-5.55zM292.7 587.2h5.55v5.50h-5.55zM298.3 587.2h5.55v5.50h-5.55zM303.8 587.2h5.55v5.50h-5.55zM309.4 587.2h1.35v5.50h-1.35zM245.2 603.7h3.10v5.50h-3.10zM248.3 603.7h5.55v5.50h-5.55zM253.9 603.7h5.55v5.50h-5.55zM259.4 603.7h5.55v5.50h-5.55zM265.0 603.7h5.55v5.50h-5.55zM270.5 603.7h5.55v5.50h-5.55zM276.1 603.7h5.55v5.50h-5.55zM281.6 603.7h5.55v5.50h-5.55zM287.2 603.7h5.55v5.50h-5.55zM292.7 603.7h5.55v5.50h-5.55zM298.3 603.7h5.55v5.50h-5.55zM303.8 603.7h5.55v5.50h-5.55zM309.4 603.7h1.35v5.50h-1.35zM245.2 625.7h3.10v5.50h-3.10zM248.3 625.7h5.55v5.50h-5.55zM253.9 625.7h5.55v5.50h-5.55zM259.4 625.7h5.55v5.50h-5.55zM265.0 625.7h5.55v5.50h-5.55zM270.5 625.7h5.55v5.50h-5.55zM276.1 625.7h5.55v5.50h-5.55zM281.6 625.7h5.55v5.50h-5.55zM287.2 625.7h5.55v5.50h-5.55zM292.7 625.7h5.55v5.50h-5.55zM298.3 625.7h5.55v5.50h-5.55zM303.8 625.7h5.55v5.50h-5.55zM309.4 625.7h1.35v5.50h-1.35zM245.2 642.2h3.10v5.50h-3.10zM248.3 642.2h5.55v5.50h-5.55zM253.9 642.2h5.55v5.50h-5.55zM259.4 642.2h5.55v5.50h-5.55zM265.0 642.2h5.55v5.50h-5.55zM270.5 642.2h5.55v5.50h-5.55zM276.1 642.2h5.55v5.50h-5.55zM281.6 642.2h5.55v5.50h-5.55zM287.2 642.2h5.55v5.50h-5.55zM292.7 642.2h5.55v5.50h-5.55zM298.3 642.2h5.55v5.50h-5.55zM303.8 642.2h5.55v5.50h-5.55zM309.4 642.2h1.35v5.50h-1.35zM393.0 317.7h3.10v5.50h-3.10zM396.1 317.7h5.55v5.50h-5.55zM401.7 317.7h5.55v5.50h-5.55zM407.2 317.7h5.55v5.50h-5.55zM412.8 317.7h5.55v5.50h-5.55zM418.3 317.7h5.55v5.50h-5.55zM423.9 317.7h5.55v5.50h-5.55zM429.4 317.7h5.55v5.50h-5.55zM435.0 317.7h5.55v5.50h-5.55zM440.5 317.7h5.55v5.50h-5.55zM446.1 317.7h5.55v5.50h-5.55zM451.6 317.7h5.55v5.50h-5.55zM457.2 317.7h5.55v5.50h-5.55zM462.7 317.7h4.30v5.50h-4.30zM393.0 356.2h3.10v5.50h-3.10zM396.1 356.2h5.55v5.50h-5.55zM401.7 356.2h5.55v5.50h-5.55zM407.2 356.2h5.55v5.50h-5.55zM412.8 356.2h5.55v5.50h-5.55zM418.3 356.2h5.55v5.50h-5.55zM423.9 356.2h5.55v5.50h-5.55zM429.4 356.2h5.55v5.50h-5.55zM435.0 356.2h5.55v5.50h-5.55zM440.5 356.2h5.55v5.50h-5.55zM446.1 356.2h5.55v5.50h-5.55zM451.6 356.2h5.55v5.50h-5.55zM457.2 356.2h5.55v5.50h-5.55zM462.7 356.2h4.30v5.50h-4.30zM393.0 394.7h3.10v5.50h-3.10zM396.1 394.7h5.55v5.50h-5.55zM401.7 394.7h5.55v5.50h-5.55zM407.2 394.7h5.55v5.50h-5.55zM412.8 394.7h5.55v5.50h-5.55zM418.3 394.7h5.55v5.50h-5.55zM423.9 394.7h5.55v5.50h-5.55zM429.4 394.7h5.55v5.50h-5.55zM435.0 394.7h5.55v5.50h-5.55zM440.5 394.7h5.55v5.50h-5.55zM446.1 394.7h5.55v5.50h-5.55zM451.6 394.7h5.55v5.50h-5.55zM457.2 394.7h5.55v5.50h-5.55zM462.7 394.7h4.30v5.50h-4.30zM393.0 433.2h3.10v5.50h-3.10zM396.1 433.2h5.55v5.50h-5.55zM401.7 433.2h5.55v5.50h-5.55zM407.2 433.2h5.55v5.50h-5.55zM412.8 433.2h5.55v5.50h-5.55zM418.3 433.2h5.55v5.50h-5.55zM423.9 433.2h5.55v5.50h-5.55zM429.4 433.2h5.55v5.50h-5.55zM435.0 433.2h5.55v5.50h-5.55zM440.5 433.2h5.55v5.50h-5.55zM446.1 433.2h5.55v5.50h-5.55zM451.6 433.2h5.55v5.50h-5.55zM457.2 433.2h5.55v5.50h-5.55zM462.7 433.2h4.30v5.50h-4.30zM393.0 466.2h3.10v5.50h-3.10zM396.1 466.2h5.55v5.50h-5.55zM401.7 466.2h5.55v5.50h-5.55zM407.2 466.2h5.55v5.50h-5.55zM412.8 466.2h5.55v5.50h-5.55zM418.3 466.2h5.55v5.50h-5.55zM423.9 466.2h5.55v5.50h-5.55zM429.4 466.2h5.55v5.50h-5.55zM435.0 466.2h5.55v5.50h-5.55zM440.5 466.2h5.55v5.50h-5.55zM446.1 466.2h5.55v5.50h-5.55zM451.6 466.2h5.55v5.50h-5.55zM457.2 466.2h5.55v5.50h-5.55zM462.7 466.2h4.30v5.50h-4.30zM393.0 499.2h3.10v5.50h-3.10zM396.1 499.2h5.55v5.50h-5.55zM401.7 499.2h5.55v5.50h-5.55zM407.2 499.2h5.55v5.50h-5.55zM412.8 499.2h5.55v5.50h-5.55zM418.3 499.2h5.55v5.50h-5.55zM423.9 499.2h5.55v5.50h-5.55zM429.4 499.2h5.55v5.50h-5.55zM435.0 499.2h5.55v5.50h-5.55zM440.5 499.2h5.55v5.50h-5.55zM446.1 499.2h5.55v5.50h-5.55zM451.6 499.2h5.55v5.50h-5.55zM457.2 499.2h5.55v5.50h-5.55zM462.7 499.2h4.30v5.50h-4.30zM393.0 532.2h3.10v5.50h-3.10zM396.1 532.2h5.55v5.50h-5.55zM401.7 532.2h5.55v5.50h-5.55zM407.2 532.2h5.55v5.50h-5.55zM412.8 532.2h5.55v5.50h-5.55zM418.3 532.2h5.55v5.50h-5.55zM423.9 532.2h5.55v5.50h-5.55zM429.4 532.2h5.55v5.50h-5.55zM435.0 532.2h5.55v5.50h-5.55zM440.5 532.2h5.55v5.50h-5.55zM446.1 532.2h5.55v5.50h-5.55zM451.6 532.2h5.55v5.50h-5.55zM457.2 532.2h5.55v5.50h-5.55zM462.7 532.2h4.30v5.50h-4.30zM393.0 565.2h3.10v5.50h-3.10zM396.1 565.2h5.55v5.50h-5.55zM401.7 565.2h5.55v5.50h-5.55zM407.2 565.2h5.55v5.50h-5.55zM412.8 565.2h5.55v5.50h-5.55zM418.3 565.2h5.55v5.50h-5.55zM423.9 565.2h5.55v5.50h-5.55zM429.4 565.2h5.55v5.50h-5.55zM435.0 565.2h5.55v5.50h-5.55zM440.5 565.2h5.55v5.50h-5.55zM446.1 565.2h5.55v5.50h-5.55zM451.6 565.2h5.55v5.50h-5.55zM457.2 565.2h5.55v5.50h-5.55zM462.7 565.2h4.30v5.50h-4.30zM393.0 587.2h3.10v5.50h-3.10zM396.1 587.2h5.55v5.50h-5.55zM401.7 587.2h5.55v5.50h-5.55zM407.2 587.2h5.55v5.50h-5.55zM412.8 587.2h5.55v5.50h-5.55zM418.3 587.2h5.55v5.50h-5.55zM423.9 587.2h5.55v5.50h-5.55zM429.4 587.2h5.55v5.50h-5.55zM435.0 587.2h5.55v5.50h-5.55zM440.5 587.2h5.55v5.50h-5.55zM446.1 587.2h5.55v5.50h-5.55zM451.6 587.2h5.55v5.50h-5.55zM457.2 587.2h5.55v5.50h-5.55zM462.7 587.2h4.30v5.50h-4.30zM393.0 603.7h3.10v5.50h-3.10zM396.1 603.7h5.55v5.50h-5.55zM401.7 603.7h5.55v5.50h-5.55zM407.2 603.7h5.55v5.50h-5.55zM412.8 603.7h5.55v5.50h-5.55zM418.3 603.7h5.55v5.50h-5.55zM423.9 603.7h5.55v5.50h-5.55zM429.4 603.7h5.55v5.50h-5.55zM435.0 603.7h5.55v5.50h-5.55zM440.5 603.7h5.55v5.50h-5.55zM446.1 603.7h5.55v5.50h-5.55zM451.6 603.7h5.55v5.50h-5.55zM457.2 603.7h5.55v5.50h-5.55zM462.7 603.7h4.30v5.50h-4.30zM393.0 625.7h3.10v5.50h-3.10zM396.1 625.7h5.55v5.50h-5.55zM401.7 625.7h5.55v5.50h-5.55zM407.2 625.7h5.55v5.50h-5.55zM412.8 625.7h5.55v5.50h-5.55zM418.3 625.7h5.55v5.50h-5.55zM423.9 625.7h5.55v5.50h-5.55zM429.4 625.7h5.55v5.50h-5.55zM435.0 625.7h5.55v5.50h-5.55zM440.5 625.7h5.55v5.50h-5.55zM446.1 625.7h5.55v5.50h-5.55zM451.6 625.7h5.55v5.50h-5.55zM457.2 625.7h5.55v5.50h-5.55zM462.7 625.7h4.30v5.50h-4.30zM393.0 642.2h3.10v5.50h-3.10zM396.1 642.2h5.55v5.50h-5.55zM401.7 642.2h5.55v5.50h-5.55zM407.2 642.2h5.55v5.50h-5.55zM412.8 642.2h5.55v5.50h-5.55zM418.3 642.2h5.55v5.50h-5.55zM423.9 642.2h5.55v5.50h-5.55zM429.4 642.2h5.55v5.50h-5.55zM435.0 642.2h5.55v5.50h-5.55zM440.5 642.2h5.55v5.50h-5.55zM446.1 642.2h5.55v5.50h-5.55zM451.6 642.2h5.55v5.50h-5.55zM457.2 642.2h5.55v5.50h-5.55zM462.7 642.2h4.30v5.50h-4.30z"/><path fill="#75b1ea" d="M245.2 323.2h3.10v5.50h-3.10zM281.6 323.2h5.55v5.50h-5.55zM259.4 383.7h5.55v5.50h-5.55zM248.3 405.7h5.55v5.50h-5.55zM287.2 449.7h5.55v5.50h-5.55zM281.6 471.7h5.55v5.50h-5.55zM298.3 471.7h5.55v5.50h-5.55zM253.9 482.7h5.55v5.50h-5.55zM281.6 482.7h5.55v5.50h-5.55zM248.3 504.7h5.55v5.50h-5.55zM298.3 515.7h5.55v5.50h-5.55zM248.3 548.7h5.55v5.50h-5.55zM292.7 570.7h5.55v5.50h-5.55zM270.5 592.7h5.55v5.50h-5.55zM298.3 614.7h5.55v5.50h-5.55zM265.0 631.2h5.55v5.50h-5.55zM270.5 631.2h5.55v5.50h-5.55zM281.6 631.2h5.55v5.50h-5.55zM276.1 636.7h5.55v5.50h-5.55zM248.3 647.7h5.55v5.50h-5.55zM451.6 312.2h5.55v5.50h-5.55zM435.0 328.7h5.55v5.50h-5.55zM407.2 345.2h5.55v5.50h-5.55zM407.2 350.7h5.55v5.50h-5.55zM401.7 361.7h5.55v5.50h-5.55zM423.9 361.7h5.55v5.50h-5.55zM429.4 389.2h5.55v5.50h-5.55zM435.0 400.2h5.55v5.50h-5.55zM429.4 405.7h5.55v5.50h-5.55zM446.1 422.2h5.55v5.50h-5.55zM446.1 427.7h5.55v5.50h-5.55zM412.8 482.7h5.55v5.50h-5.55zM401.7 515.7h5.55v5.50h-5.55zM435.0 515.7h5.55v5.50h-5.55zM393.0 548.7h3.10v5.50h-3.10zM429.4 598.2h5.55v5.50h-5.55zM440.5 609.2h5.55v5.50h-5.55zM440.5 647.7h5.55v5.50h-5.55z"/><path fill="#7bb7f3" d="M253.9 323.2h5.55v5.50h-5.55zM265.0 323.2h5.55v5.50h-5.55zM270.5 361.7h5.55v5.50h-5.55zM298.3 383.7h5.55v5.50h-5.55zM292.7 400.2h5.55v5.50h-5.55zM298.3 400.2h5.55v5.50h-5.55zM270.5 427.7h5.55v5.50h-5.55zM276.1 438.7h5.55v5.50h-5.55zM303.8 444.2h5.55v5.50h-5.55zM270.5 482.7h5.55v5.50h-5.55zM298.3 504.7h5.55v5.50h-5.55zM276.1 515.7h5.55v5.50h-5.55zM248.3 537.7h5.55v5.50h-5.55zM276.1 537.7h5.55v5.50h-5.55zM253.9 581.7h5.55v5.50h-5.55zM276.1 581.7h5.55v5.50h-5.55zM287.2 631.2h5.55v5.50h-5.55zM245.2 636.7h3.10v5.50h-3.10zM265.0 647.7h5.55v5.50h-5.55zM281.6 647.7h5.55v5.50h-5.55zM303.8 278.5h5.55v5.00h-5.55zM396.1 323.2h5.55v5.50h-5.55zM407.2 400.2h5.55v5.50h-5.55zM407.2 438.7h5.55v5.50h-5.55zM446.1 438.7h5.55v5.50h-5.55zM412.8 449.7h5.55v5.50h-5.55zM429.4 449.7h5.55v5.50h-5.55zM418.3 482.7h5.55v5.50h-5.55zM423.9 482.7h5.55v5.50h-5.55zM396.1 504.7h5.55v5.50h-5.55zM401.7 504.7h5.55v5.50h-5.55zM396.1 537.7h5.55v5.50h-5.55zM429.4 537.7h5.55v5.50h-5.55zM418.3 570.7h5.55v5.50h-5.55zM440.5 570.7h5.55v5.50h-5.55zM418.3 581.7h5.55v5.50h-5.55zM412.8 609.2h5.55v5.50h-5.55zM418.3 609.2h5.55v5.50h-5.55zM393.0 620.2h3.10v5.50h-3.10zM440.5 631.2h5.55v5.50h-5.55zM440.5 636.7h5.55v5.50h-5.55zM396.1 647.7h5.55v5.50h-5.55zM418.3 647.7h5.55v5.50h-5.55zM396.1 658.7h5.55v5.50h-5.55zM407.2 658.7h5.55v5.50h-5.55z"/><path fill="#7bbaf6" d="M270.5 323.2h5.55v5.50h-5.55zM298.3 323.2h5.55v5.50h-5.55zM287.2 361.7h5.55v5.50h-5.55zM265.0 438.7h5.55v5.50h-5.55zM259.4 449.7h5.55v5.50h-5.55zM265.0 449.7h5.55v5.50h-5.55zM265.0 504.7h5.55v5.50h-5.55zM276.1 504.7h5.55v5.50h-5.55zM259.4 515.7h5.55v5.50h-5.55zM253.9 570.7h5.55v5.50h-5.55zM265.0 581.7h5.55v5.50h-5.55zM298.3 620.2h5.55v5.50h-5.55zM245.2 631.2h3.10v5.50h-3.10zM253.9 647.7h5.55v5.50h-5.55zM245.2 658.7h3.10v5.50h-3.10zM287.2 658.7h5.55v5.50h-5.55zM418.3 323.2h5.55v5.50h-5.55zM418.3 400.2h5.55v5.50h-5.55zM418.3 449.7h5.55v5.50h-5.55zM401.7 471.7h5.55v5.50h-5.55zM418.3 471.7h5.55v5.50h-5.55zM401.7 482.7h5.55v5.50h-5.55zM435.0 537.7h5.55v5.50h-5.55zM446.1 548.7h5.55v5.50h-5.55zM429.4 609.2h5.55v5.50h-5.55zM446.1 631.2h5.55v5.50h-5.55zM423.9 647.7h5.55v5.50h-5.55zM423.9 658.7h5.55v5.50h-5.55z"/><path fill="#75b1ed" d="M276.1 323.2h5.55v5.50h-5.55zM298.3 345.2h5.55v5.50h-5.55zM281.6 383.7h5.55v5.50h-5.55zM265.0 400.2h5.55v5.50h-5.55zM287.2 515.7h5.55v5.50h-5.55zM270.5 548.7h5.55v5.50h-5.55zM281.6 570.7h5.55v5.50h-5.55zM287.2 592.7h5.55v5.50h-5.55zM245.2 273.5h3.10v5.00h-3.10zM270.5 273.5h5.55v5.00h-5.55zM276.1 278.5h5.55v5.00h-5.55zM435.0 449.7h5.55v5.50h-5.55zM396.1 515.7h5.55v5.50h-5.55zM401.7 592.7h5.55v5.50h-5.55zM412.8 620.2h5.55v5.50h-5.55zM412.8 658.7h5.55v5.50h-5.55z"/><path fill="#7ebaf9" d="M292.7 323.2h5.55v5.50h-5.55zM248.3 361.7h5.55v5.50h-5.55zM265.0 361.7h5.55v5.50h-5.55zM248.3 400.2h5.55v5.50h-5.55zM281.6 400.2h5.55v5.50h-5.55zM303.8 400.2h5.55v5.50h-5.55zM248.3 438.7h5.55v5.50h-5.55zM270.5 438.7h5.55v5.50h-5.55zM270.5 449.7h5.55v5.50h-5.55zM245.2 570.7h3.10v5.50h-3.10zM259.4 570.7h5.55v5.50h-5.55zM248.3 581.7h5.55v5.50h-5.55zM259.4 581.7h5.55v5.50h-5.55zM287.2 609.2h5.55v5.50h-5.55zM303.8 631.2h5.55v5.50h-5.55zM245.2 647.7h3.10v5.50h-3.10zM287.2 647.7h5.55v5.50h-5.55zM401.7 323.2h5.55v5.50h-5.55zM435.0 323.2h5.55v5.50h-5.55zM423.9 400.2h5.55v5.50h-5.55zM429.4 400.2h5.55v5.50h-5.55zM423.9 438.7h5.55v5.50h-5.55zM440.5 449.7h5.55v5.50h-5.55zM396.1 471.7h5.55v5.50h-5.55zM393.0 482.7h3.10v5.50h-3.10zM429.4 504.7h5.55v5.50h-5.55zM418.3 515.7h5.55v5.50h-5.55zM407.2 537.7h5.55v5.50h-5.55zM446.1 537.7h5.55v5.50h-5.55zM401.7 570.7h5.55v5.50h-5.55zM407.2 647.7h5.55v5.50h-5.55zM435.0 658.7h5.55v5.50h-5.55z"/><path fill="#5a87b4" d="M245.2 328.7h3.10v5.50h-3.10zM281.6 328.7h5.55v5.50h-5.55zM245.2 345.2h3.10v5.50h-3.10zM245.2 350.7h3.10v5.50h-3.10zM253.9 422.2h5.55v5.50h-5.55zM253.9 543.2h5.55v5.50h-5.55zM270.5 543.2h5.55v5.50h-5.55zM248.3 653.2h5.55v5.50h-5.55zM393.0 444.2h3.10v5.50h-3.10zM435.0 444.2h5.55v5.50h-5.55zM423.9 636.7h5.55v5.50h-5.55zM418.3 278.5h5.55v5.00h-5.55zM440.5 278.5h5.55v5.00h-5.55z"/><path fill="#5a87b7" d="M276.1 328.7h5.55v5.50h-5.55zM429.4 477.2h5.55v5.50h-5.55z"/><path fill="#547ea8" d="M287.2 328.7h5.55v5.50h-5.55zM401.7 444.2h5.55v5.50h-5.55zM446.1 477.2h5.55v5.50h-5.55zM412.8 576.2h5.55v5.50h-5.55zM429.4 278.5h5.55v5.00h-5.55z"/><path fill="#6fa8de" d="M298.3 328.7h5.55v5.50h-5.55zM259.4 350.7h5.55v5.50h-5.55zM281.6 581.7h5.55v5.50h-5.55zM287.2 581.7h5.55v5.50h-5.55zM281.6 620.2h5.55v5.50h-5.55zM248.3 636.7h5.55v5.50h-5.55zM292.7 273.5h5.55v5.00h-5.55zM259.4 278.5h5.55v5.00h-5.55zM429.4 306.7h5.55v5.50h-5.55zM423.9 422.2h5.55v5.50h-5.55zM401.7 477.2h5.55v5.50h-5.55zM446.1 543.2h5.55v5.50h-5.55zM435.0 581.7h5.55v5.50h-5.55zM418.3 592.7h5.55v5.50h-5.55zM412.8 598.2h5.55v5.50h-5.55z"/><path fill="#7bb1e7" d="M245.2 334.2h3.10v5.50h-3.10zM253.9 372.7h5.55v5.50h-5.55zM253.9 411.2h5.55v5.50h-5.55zM393.0 372.7h3.10v5.50h-3.10zM407.2 372.7h5.55v5.50h-5.55zM412.8 372.7h5.55v5.50h-5.55zM412.8 411.2h5.55v5.50h-5.55z"/><path fill="#7eb7f0" d="M248.3 334.2h5.55v5.50h-5.55zM259.4 334.2h5.55v5.50h-5.55zM265.0 334.2h5.55v5.50h-5.55zM270.5 372.7h5.55v5.50h-5.55zM276.1 411.2h5.55v5.50h-5.55zM440.5 372.7h5.55v5.50h-5.55zM396.1 411.2h5.55v5.50h-5.55zM446.1 411.2h5.55v5.50h-5.55z"/><path fill="#81baf6" d="M253.9 334.2h5.55v5.50h-5.55zM298.3 334.2h5.55v5.50h-5.55zM435.0 372.7h5.55v5.50h-5.55z"/><path fill="#81baf3" d="M270.5 334.2h5.55v5.50h-5.55zM245.2 372.7h3.10v5.50h-3.10zM276.1 372.7h5.55v5.50h-5.55zM292.7 411.2h5.55v5.50h-5.55zM396.1 334.2h5.55v5.50h-5.55zM412.8 334.2h5.55v5.50h-5.55zM407.2 411.2h5.55v5.50h-5.55z"/><path fill="#7bb1ea" d="M276.1 334.2h5.55v5.50h-5.55zM287.2 334.2h5.55v5.50h-5.55zM259.4 372.7h5.55v5.50h-5.55zM446.1 372.7h5.55v5.50h-5.55zM435.0 411.2h5.55v5.50h-5.55z"/><path fill="#7eb4ed" d="M281.6 334.2h5.55v5.50h-5.55zM292.7 372.7h5.55v5.50h-5.55zM265.0 411.2h5.55v5.50h-5.55zM270.5 411.2h5.55v5.50h-5.55zM287.2 411.2h5.55v5.50h-5.55zM298.3 411.2h5.55v5.50h-5.55zM407.2 334.2h5.55v5.50h-5.55zM423.9 334.2h5.55v5.50h-5.55zM446.1 334.2h5.55v5.50h-5.55zM423.9 372.7h5.55v5.50h-5.55zM401.7 411.2h5.55v5.50h-5.55z"/><path fill="#81bdf9" d="M292.7 334.2h5.55v5.50h-5.55zM393.0 411.2h3.10v5.50h-3.10zM418.3 411.2h5.55v5.50h-5.55z"/><path fill="#87c3ff" d="M303.8 334.2h5.55v5.50h-5.55zM309.4 334.2h1.35v5.50h-1.35zM303.8 372.7h5.55v5.50h-5.55zM309.4 372.7h1.35v5.50h-1.35zM309.4 411.2h1.35v5.50h-1.35zM451.6 334.2h5.55v5.50h-5.55zM457.2 334.2h5.55v5.50h-5.55zM462.7 334.2h4.30v5.50h-4.30zM451.6 372.7h5.55v5.50h-5.55zM457.2 372.7h5.55v5.50h-5.55zM462.7 372.7h4.30v5.50h-4.30zM451.6 411.2h5.55v5.50h-5.55zM457.2 411.2h5.55v5.50h-5.55zM462.7 411.2h4.30v5.50h-4.30z"/><path fill="#6fa8e1" d="M259.4 345.2h5.55v5.50h-5.55zM253.9 620.2h5.55v5.50h-5.55zM423.9 477.2h5.55v5.50h-5.55zM446.1 598.2h5.55v5.50h-5.55zM435.0 636.7h5.55v5.50h-5.55z"/><path fill="#6fa2db" d="M265.0 345.2h5.55v5.50h-5.55zM276.1 350.7h5.55v5.50h-5.55zM276.1 576.2h5.55v5.50h-5.55z"/><path fill="#78b4ed" d="M270.5 345.2h5.55v5.50h-5.55zM298.3 482.7h5.55v5.50h-5.55zM412.8 537.7h5.55v5.50h-5.55zM435.0 653.2h5.55v5.50h-5.55z"/><path fill="#6fa5de" d="M276.1 345.2h5.55v5.50h-5.55zM292.7 427.7h5.55v5.50h-5.55zM253.9 510.2h5.55v5.50h-5.55zM259.4 548.7h5.55v5.50h-5.55zM265.0 620.2h5.55v5.50h-5.55zM292.7 620.2h5.55v5.50h-5.55zM287.2 653.2h5.55v5.50h-5.55zM248.3 273.5h5.55v5.00h-5.55zM292.7 278.5h5.55v5.00h-5.55zM418.3 306.7h5.55v5.50h-5.55zM401.7 328.7h5.55v5.50h-5.55zM412.8 350.7h5.55v5.50h-5.55zM407.2 383.7h5.55v5.50h-5.55zM393.0 427.7h3.10v5.50h-3.10zM407.2 444.2h5.55v5.50h-5.55zM446.1 482.7h5.55v5.50h-5.55zM440.5 515.7h5.55v5.50h-5.55zM396.1 636.7h5.55v5.50h-5.55z"/><path fill="#6696c9" d="M281.6 345.2h5.55v5.50h-5.55zM281.6 422.2h5.55v5.50h-5.55zM259.4 427.7h5.55v5.50h-5.55zM248.3 592.7h5.55v5.50h-5.55zM259.4 653.2h5.55v5.50h-5.55zM276.1 653.2h5.55v5.50h-5.55zM440.5 328.7h5.55v5.50h-5.55zM423.9 345.2h5.55v5.50h-5.55zM423.9 350.7h5.55v5.50h-5.55zM418.3 389.2h5.55v5.50h-5.55zM429.4 422.2h5.55v5.50h-5.55zM412.8 477.2h5.55v5.50h-5.55zM396.1 576.2h5.55v5.50h-5.55zM440.5 576.2h5.55v5.50h-5.55zM396.1 592.7h5.55v5.50h-5.55zM423.9 598.2h5.55v5.50h-5.55z"/><path fill="#6396c6" d="M292.7 345.2h5.55v5.50h-5.55zM298.3 405.7h5.55v5.50h-5.55zM287.2 477.2h5.55v5.50h-5.55zM253.9 278.5h5.55v5.00h-5.55zM435.0 345.2h5.55v5.50h-5.55zM401.7 389.2h5.55v5.50h-5.55zM396.1 405.7h5.55v5.50h-5.55zM429.4 427.7h5.55v5.50h-5.55zM407.2 477.2h5.55v5.50h-5.55zM393.0 636.7h3.10v5.50h-3.10zM440.5 273.5h5.55v5.00h-5.55z"/><path fill="#699fd5" d="M265.0 350.7h5.55v5.50h-5.55zM253.9 576.2h5.55v5.50h-5.55zM265.0 653.2h5.55v5.50h-5.55zM281.6 653.2h5.55v5.50h-5.55zM396.1 389.2h5.55v5.50h-5.55zM440.5 427.7h5.55v5.50h-5.55zM435.0 543.2h5.55v5.50h-5.55zM407.2 598.2h5.55v5.50h-5.55zM418.3 598.2h5.55v5.50h-5.55z"/><path fill="#699fd2" d="M292.7 350.7h5.55v5.50h-5.55zM287.2 427.7h5.55v5.50h-5.55zM248.3 477.2h5.55v5.50h-5.55zM440.5 306.7h5.55v5.50h-5.55z"/><path fill="#7ebdff" d="M303.8 350.7h5.55v5.50h-5.55zM303.8 482.7h5.55v5.50h-5.55z"/><path fill="#78b1ed" d="M245.2 361.7h3.10v5.50h-3.10zM265.0 367.2h5.55v5.50h-5.55zM265.0 389.2h5.55v5.50h-5.55zM276.1 400.2h5.55v5.50h-5.55zM245.2 405.7h3.10v5.50h-3.10zM303.8 405.7h5.55v5.50h-5.55zM287.2 438.7h5.55v5.50h-5.55zM298.3 438.7h5.55v5.50h-5.55zM253.9 471.7h5.55v5.50h-5.55zM265.0 471.7h5.55v5.50h-5.55zM276.1 471.7h5.55v5.50h-5.55zM259.4 482.7h5.55v5.50h-5.55zM265.0 482.7h5.55v5.50h-5.55zM259.4 510.2h5.55v5.50h-5.55zM270.5 510.2h5.55v5.50h-5.55zM245.2 543.2h3.10v5.50h-3.10zM270.5 570.7h5.55v5.50h-5.55zM287.2 570.7h5.55v5.50h-5.55zM298.3 570.7h5.55v5.50h-5.55zM265.0 592.7h5.55v5.50h-5.55zM281.6 592.7h5.55v5.50h-5.55zM265.0 598.2h5.55v5.50h-5.55zM281.6 598.2h5.55v5.50h-5.55zM248.3 609.2h5.55v5.50h-5.55zM270.5 609.2h5.55v5.50h-5.55zM281.6 609.2h5.55v5.50h-5.55zM276.1 631.2h5.55v5.50h-5.55zM298.3 631.2h5.55v5.50h-5.55zM298.3 653.2h5.55v5.50h-5.55zM407.2 323.2h5.55v5.50h-5.55zM401.7 345.2h5.55v5.50h-5.55zM393.0 361.7h3.10v5.50h-3.10zM393.0 389.2h3.10v5.50h-3.10zM401.7 400.2h5.55v5.50h-5.55zM446.1 400.2h5.55v5.50h-5.55zM440.5 471.7h5.55v5.50h-5.55zM407.2 482.7h5.55v5.50h-5.55zM407.2 504.7h5.55v5.50h-5.55zM423.9 504.7h5.55v5.50h-5.55zM423.9 515.7h5.55v5.50h-5.55zM401.7 537.7h5.55v5.50h-5.55zM418.3 537.7h5.55v5.50h-5.55zM435.0 548.7h5.55v5.50h-5.55zM440.5 548.7h5.55v5.50h-5.55zM412.8 570.7h5.55v5.50h-5.55zM429.4 570.7h5.55v5.50h-5.55zM435.0 570.7h5.55v5.50h-5.55zM396.1 581.7h5.55v5.50h-5.55zM401.7 609.2h5.55v5.50h-5.55zM423.9 609.2h5.55v5.50h-5.55zM435.0 609.2h5.55v5.50h-5.55zM418.3 620.2h5.55v5.50h-5.55zM401.7 636.7h5.55v5.50h-5.55zM418.3 658.7h5.55v5.50h-5.55zM407.2 273.5h5.55v5.00h-5.55zM446.1 278.5h5.55v5.00h-5.55z"/><path fill="#6390c3" d="M245.2 367.2h3.10v5.50h-3.10z"/><path fill="#75aeea" d="M248.3 367.2h5.55v5.50h-5.55zM248.3 383.7h5.55v5.50h-5.55zM253.9 389.2h5.55v5.50h-5.55zM287.2 400.2h5.55v5.50h-5.55zM245.2 422.2h3.10v5.50h-3.10zM253.9 444.2h5.55v5.50h-5.55zM292.7 449.7h5.55v5.50h-5.55zM298.3 449.7h5.55v5.50h-5.55zM259.4 471.7h5.55v5.50h-5.55zM292.7 504.7h5.55v5.50h-5.55zM265.0 537.7h5.55v5.50h-5.55zM298.3 537.7h5.55v5.50h-5.55zM276.1 592.7h5.55v5.50h-5.55zM292.7 592.7h5.55v5.50h-5.55zM265.0 609.2h5.55v5.50h-5.55zM259.4 658.7h5.55v5.50h-5.55zM292.7 658.7h5.55v5.50h-5.55zM412.8 361.7h5.55v5.50h-5.55zM418.3 361.7h5.55v5.50h-5.55zM446.1 383.7h5.55v5.50h-5.55zM423.9 405.7h5.55v5.50h-5.55zM412.8 422.2h5.55v5.50h-5.55zM435.0 427.7h5.55v5.50h-5.55zM435.0 438.7h5.55v5.50h-5.55zM423.9 444.2h5.55v5.50h-5.55zM429.4 471.7h5.55v5.50h-5.55zM446.1 504.7h5.55v5.50h-5.55zM401.7 548.7h5.55v5.50h-5.55zM423.9 548.7h5.55v5.50h-5.55zM393.0 570.7h3.10v5.50h-3.10zM401.7 576.2h5.55v5.50h-5.55zM423.9 581.7h5.55v5.50h-5.55zM440.5 581.7h5.55v5.50h-5.55z"/><path fill="#4e789f" d="M253.9 367.2h5.55v5.50h-5.55zM440.5 614.7h5.55v5.50h-5.55z"/><path fill="#547ea5" d="M259.4 367.2h5.55v5.50h-5.55zM298.3 367.2h5.55v5.50h-5.55z"/><path fill="#699cd2" d="M270.5 367.2h5.55v5.50h-5.55zM270.5 477.2h5.55v5.50h-5.55zM298.3 592.7h5.55v5.50h-5.55zM259.4 636.7h5.55v5.50h-5.55zM298.3 273.5h5.55v5.00h-5.55zM248.3 278.5h5.55v5.00h-5.55zM396.1 328.7h5.55v5.50h-5.55zM396.1 383.7h5.55v5.50h-5.55zM440.5 422.2h5.55v5.50h-5.55zM412.8 444.2h5.55v5.50h-5.55zM440.5 598.2h5.55v5.50h-5.55zM412.8 278.5h5.55v5.00h-5.55z"/><path fill="#699ccf" d="M276.1 367.2h5.55v5.50h-5.55zM276.1 422.2h5.55v5.50h-5.55zM276.1 427.7h5.55v5.50h-5.55zM276.1 543.2h5.55v5.50h-5.55zM298.3 598.2h5.55v5.50h-5.55zM446.1 306.7h5.55v5.50h-5.55zM440.5 405.7h5.55v5.50h-5.55zM396.1 427.7h5.55v5.50h-5.55zM396.1 510.2h5.55v5.50h-5.55zM396.1 543.2h5.55v5.50h-5.55zM429.4 614.7h5.55v5.50h-5.55zM412.8 636.7h5.55v5.50h-5.55z"/><path fill="#5178a2" d="M281.6 367.2h5.55v5.50h-5.55zM265.0 614.7h5.55v5.50h-5.55zM270.5 614.7h5.55v5.50h-5.55zM446.1 510.2h5.55v5.50h-5.55zM429.4 576.2h5.55v5.50h-5.55z"/><path fill="#608dbd" d="M292.7 367.2h5.55v5.50h-5.55zM292.7 383.7h5.55v5.50h-5.55zM253.9 427.7h5.55v5.50h-5.55zM248.3 543.2h5.55v5.50h-5.55zM298.3 278.5h5.55v5.00h-5.55zM418.3 345.2h5.55v5.50h-5.55zM429.4 345.2h5.55v5.50h-5.55zM418.3 350.7h5.55v5.50h-5.55zM401.7 367.2h5.55v5.50h-5.55zM440.5 477.2h5.55v5.50h-5.55zM396.1 614.7h5.55v5.50h-5.55zM423.9 614.7h5.55v5.50h-5.55z"/><path fill="#84bdf9" d="M248.3 372.7h5.55v5.50h-5.55zM248.3 411.2h5.55v5.50h-5.55zM303.8 411.2h5.55v5.50h-5.55zM418.3 334.2h5.55v5.50h-5.55zM435.0 334.2h5.55v5.50h-5.55z"/><path fill="#84c0fc" d="M265.0 372.7h5.55v5.50h-5.55zM245.2 411.2h3.10v5.50h-3.10zM429.4 372.7h5.55v5.50h-5.55zM429.4 411.2h5.55v5.50h-5.55z"/><path fill="#78aee4" d="M281.6 372.7h5.55v5.50h-5.55zM298.3 372.7h5.55v5.50h-5.55z"/><path fill="#81bdf6" d="M287.2 372.7h5.55v5.50h-5.55zM259.4 411.2h5.55v5.50h-5.55zM281.6 411.2h5.55v5.50h-5.55zM401.7 334.2h5.55v5.50h-5.55zM396.1 372.7h5.55v5.50h-5.55zM423.9 411.2h5.55v5.50h-5.55z"/><path fill="#72abe1" d="M265.0 383.7h5.55v5.50h-5.55zM248.3 631.2h5.55v5.50h-5.55z"/><path fill="#6699cf" d="M287.2 383.7h5.55v5.50h-5.55zM248.3 427.7h5.55v5.50h-5.55zM435.0 383.7h5.55v5.50h-5.55zM418.3 614.7h5.55v5.50h-5.55zM407.2 631.2h5.55v5.50h-5.55z"/><path fill="#5d8ab7" d="M292.7 389.2h5.55v5.50h-5.55zM287.2 405.7h5.55v5.50h-5.55zM265.0 427.7h5.55v5.50h-5.55zM259.4 477.2h5.55v5.50h-5.55zM287.2 278.5h5.55v5.00h-5.55zM407.2 367.2h5.55v5.50h-5.55zM446.1 367.2h5.55v5.50h-5.55zM435.0 405.7h5.55v5.50h-5.55zM407.2 427.7h5.55v5.50h-5.55zM412.8 543.2h5.55v5.50h-5.55zM423.9 631.2h5.55v5.50h-5.55zM429.4 653.2h5.55v5.50h-5.55zM396.1 278.5h5.55v5.00h-5.55zM423.9 278.5h5.55v5.00h-5.55z"/><path fill="#7ebdfc" d="M245.2 400.2h3.10v5.50h-3.10zM303.8 438.7h5.55v5.50h-5.55zM245.2 449.7h3.10v5.50h-3.10zM248.3 449.7h5.55v5.50h-5.55zM253.9 449.7h5.55v5.50h-5.55zM303.8 449.7h5.55v5.50h-5.55zM259.4 504.7h5.55v5.50h-5.55zM303.8 504.7h5.55v5.50h-5.55zM270.5 515.7h5.55v5.50h-5.55zM303.8 515.7h5.55v5.50h-5.55zM245.2 537.7h3.10v5.50h-3.10zM248.3 570.7h5.55v5.50h-5.55zM265.0 570.7h5.55v5.50h-5.55zM298.3 609.2h5.55v5.50h-5.55zM298.3 647.7h5.55v5.50h-5.55zM429.4 361.7h5.55v5.50h-5.55zM451.6 438.7h5.55v5.50h-5.55zM451.6 449.7h5.55v5.50h-5.55zM393.0 471.7h3.10v5.50h-3.10zM412.8 504.7h5.55v5.50h-5.55zM418.3 504.7h5.55v5.50h-5.55zM451.6 510.2h5.55v5.50h-5.55zM412.8 515.7h5.55v5.50h-5.55zM451.6 515.7h5.55v5.50h-5.55zM451.6 543.2h5.55v5.50h-5.55zM446.1 570.7h5.55v5.50h-5.55zM446.1 581.7h5.55v5.50h-5.55zM435.0 647.7h5.55v5.50h-5.55zM451.6 647.7h5.55v5.50h-5.55zM451.6 653.2h5.55v5.50h-5.55zM451.6 658.7h5.55v5.50h-5.55z"/><path fill="#7bbaf9" d="M259.4 400.2h5.55v5.50h-5.55zM270.5 504.7h5.55v5.50h-5.55zM245.2 548.7h3.10v5.50h-3.10zM276.1 570.7h5.55v5.50h-5.55zM245.2 581.7h3.10v5.50h-3.10zM303.8 636.7h5.55v5.50h-5.55zM270.5 647.7h5.55v5.50h-5.55zM423.9 449.7h5.55v5.50h-5.55zM435.0 471.7h5.55v5.50h-5.55zM393.0 504.7h3.10v5.50h-3.10zM393.0 609.2h3.10v5.50h-3.10zM401.7 647.7h5.55v5.50h-5.55z"/><path fill="#5784ae" d="M253.9 405.7h5.55v5.50h-5.55zM292.7 444.2h5.55v5.50h-5.55zM292.7 477.2h5.55v5.50h-5.55zM265.0 543.2h5.55v5.50h-5.55zM407.2 576.2h5.55v5.50h-5.55zM435.0 614.7h5.55v5.50h-5.55z"/><path fill="#5d8dbd" d="M276.1 405.7h5.55v5.50h-5.55zM393.0 328.7h3.10v5.50h-3.10z"/><path fill="#72a8e1" d="M281.6 405.7h5.55v5.50h-5.55zM245.2 471.7h3.10v5.50h-3.10zM245.2 504.7h3.10v5.50h-3.10zM265.0 510.2h5.55v5.50h-5.55zM245.2 515.7h3.10v5.50h-3.10zM292.7 581.7h5.55v5.50h-5.55zM298.3 581.7h5.55v5.50h-5.55zM292.7 598.2h5.55v5.50h-5.55zM287.2 614.7h5.55v5.50h-5.55zM245.2 620.2h3.10v5.50h-3.10zM248.3 620.2h5.55v5.50h-5.55zM248.3 658.7h5.55v5.50h-5.55zM265.0 278.5h5.55v5.00h-5.55zM396.1 306.7h5.55v5.50h-5.55zM418.3 312.2h5.55v5.50h-5.55zM396.1 345.2h5.55v5.50h-5.55zM435.0 367.2h5.55v5.50h-5.55zM393.0 422.2h3.10v5.50h-3.10zM396.1 477.2h5.55v5.50h-5.55zM393.0 510.2h3.10v5.50h-3.10zM446.1 515.7h5.55v5.50h-5.55zM393.0 581.7h3.10v5.50h-3.10zM407.2 581.7h5.55v5.50h-5.55zM407.2 620.2h5.55v5.50h-5.55zM435.0 620.2h5.55v5.50h-5.55zM418.3 636.7h5.55v5.50h-5.55zM393.0 647.7h3.10v5.50h-3.10zM423.9 653.2h5.55v5.50h-5.55zM407.2 278.5h5.55v5.00h-5.55z"/><path fill="#5d8dba" d="M265.0 422.2h5.55v5.50h-5.55zM253.9 598.2h5.55v5.50h-5.55zM248.3 614.7h5.55v5.50h-5.55zM401.7 312.2h5.55v5.50h-5.55zM446.1 312.2h5.55v5.50h-5.55zM440.5 367.2h5.55v5.50h-5.55zM401.7 510.2h5.55v5.50h-5.55zM401.7 543.2h5.55v5.50h-5.55zM435.0 598.2h5.55v5.50h-5.55z"/><path fill="#7bb7f6" d="M245.2 438.7h3.10v5.50h-3.10zM259.4 438.7h5.55v5.50h-5.55zM276.1 449.7h5.55v5.50h-5.55zM253.9 504.7h5.55v5.50h-5.55zM281.6 504.7h5.55v5.50h-5.55zM265.0 515.7h5.55v5.50h-5.55zM292.7 537.7h5.55v5.50h-5.55zM298.3 658.7h5.55v5.50h-5.55zM303.8 273.5h5.55v5.00h-5.55zM393.0 312.2h3.10v5.50h-3.10zM440.5 345.2h5.55v5.50h-5.55zM435.0 361.7h5.55v5.50h-5.55zM393.0 400.2h3.10v5.50h-3.10zM418.3 438.7h5.55v5.50h-5.55zM440.5 438.7h5.55v5.50h-5.55zM451.6 444.2h5.55v5.50h-5.55zM446.1 449.7h5.55v5.50h-5.55zM423.9 471.7h5.55v5.50h-5.55zM396.1 482.7h5.55v5.50h-5.55zM435.0 482.7h5.55v5.50h-5.55zM429.4 515.7h5.55v5.50h-5.55zM407.2 548.7h5.55v5.50h-5.55zM401.7 581.7h5.55v5.50h-5.55zM412.8 647.7h5.55v5.50h-5.55zM446.1 647.7h5.55v5.50h-5.55zM401.7 658.7h5.55v5.50h-5.55z"/><path fill="#81bdff" d="M253.9 438.7h5.55v5.50h-5.55zM303.8 477.2h5.55v5.50h-5.55z"/><path fill="#4e7599" d="M281.6 444.2h5.55v5.50h-5.55z"/><path fill="#5d8aba" d="M298.3 444.2h5.55v5.50h-5.55zM423.9 367.2h5.55v5.50h-5.55zM407.2 510.2h5.55v5.50h-5.55zM423.9 543.2h5.55v5.50h-5.55zM396.1 598.2h5.55v5.50h-5.55z"/><path fill="#78b4f3" d="M248.3 471.7h5.55v5.50h-5.55zM287.2 471.7h5.55v5.50h-5.55zM287.2 504.7h5.55v5.50h-5.55zM303.8 510.2h5.55v5.50h-5.55zM253.9 515.7h5.55v5.50h-5.55zM281.6 515.7h5.55v5.50h-5.55zM292.7 548.7h5.55v5.50h-5.55zM276.1 647.7h5.55v5.50h-5.55zM245.2 653.2h3.10v5.50h-3.10zM253.9 658.7h5.55v5.50h-5.55zM281.6 658.7h5.55v5.50h-5.55zM446.1 323.2h5.55v5.50h-5.55zM396.1 361.7h5.55v5.50h-5.55zM412.8 438.7h5.55v5.50h-5.55zM429.4 438.7h5.55v5.50h-5.55zM407.2 471.7h5.55v5.50h-5.55zM412.8 471.7h5.55v5.50h-5.55z"/><path fill="#5a84b1" d="M245.2 477.2h3.10v5.50h-3.10zM265.0 477.2h5.55v5.50h-5.55zM276.1 477.2h5.55v5.50h-5.55zM270.5 576.2h5.55v5.50h-5.55zM412.8 367.2h5.55v5.50h-5.55zM418.3 543.2h5.55v5.50h-5.55zM429.4 273.5h5.55v5.00h-5.55z"/><path fill="#517ba2" d="M245.2 510.2h3.10v5.50h-3.10zM245.2 614.7h3.10v5.50h-3.10zM418.3 367.2h5.55v5.50h-5.55zM440.5 510.2h5.55v5.50h-5.55zM393.0 653.2h3.10v5.50h-3.10z"/><path fill="#6ca2db" d="M276.1 510.2h5.55v5.50h-5.55zM396.1 312.2h5.55v5.50h-5.55zM446.1 444.2h5.55v5.50h-5.55zM418.3 653.2h5.55v5.50h-5.55zM440.5 658.7h5.55v5.50h-5.55z"/><path fill="#517ba5" d="M292.7 510.2h5.55v5.50h-5.55zM292.7 576.2h5.55v5.50h-5.55z"/><path fill="#4e7299" d="M259.4 543.2h5.55v5.50h-5.55zM393.0 598.2h3.10v5.50h-3.10z"/><path fill="#4e759c" d="M298.3 543.2h5.55v5.50h-5.55zM292.7 614.7h5.55v5.50h-5.55zM440.5 653.2h5.55v5.50h-5.55z"/><path fill="#7bb4f3" d="M276.1 548.7h5.55v5.50h-5.55z"/><path fill="#5781ab" d="M281.6 576.2h5.55v5.50h-5.55zM287.2 576.2h5.55v5.50h-5.55zM412.8 405.7h5.55v5.50h-5.55zM401.7 614.7h5.55v5.50h-5.55z"/><path fill="#5784b1" d="M298.3 576.2h5.55v5.50h-5.55z"/><path fill="#72abe7" d="M276.1 598.2h5.55v5.50h-5.55zM418.3 548.7h5.55v5.50h-5.55zM423.9 620.2h5.55v5.50h-5.55zM401.7 631.2h5.55v5.50h-5.55zM418.3 631.2h5.55v5.50h-5.55z"/><path fill="#5a87b1" d="M253.9 614.7h5.55v5.50h-5.55zM446.1 614.7h5.55v5.50h-5.55z"/><path fill="#48698d" d="M276.1 614.7h5.55v5.50h-5.55z"/><path fill="#547ba5" d="M281.6 614.7h5.55v5.50h-5.55zM435.0 576.2h5.55v5.50h-5.55z"/><path fill="#6ca2d5" d="M276.1 620.2h5.55v5.50h-5.55z"/><path fill="#879fb4" d="M341.5 306.7h5.60v5.50h-5.60zM335.9 543.2h5.60v5.50h-5.60zM321.3 631.2h3.40v5.50h-3.40z"/><path fill="#96b1c9" d="M358.3 306.7h5.60v5.50h-5.60zM347.1 383.7h5.60v5.50h-5.60zM363.9 383.7h5.60v5.50h-5.60zM341.5 598.2h5.60v5.50h-5.60zM358.3 653.2h5.60v5.50h-5.60z"/><path fill="#90a8c0" d="M363.9 306.7h5.60v5.50h-5.60zM363.9 312.2h5.60v5.50h-5.60zM341.5 328.7h5.60v5.50h-5.60zM341.5 345.2h5.60v5.50h-5.60zM335.9 405.7h5.60v5.50h-5.60zM324.7 422.2h5.60v5.50h-5.60zM330.3 427.7h5.60v5.50h-5.60zM358.3 444.2h5.60v5.50h-5.60zM375.1 444.2h5.60v5.50h-5.60zM330.3 598.2h5.60v5.50h-5.60zM363.9 636.7h5.60v5.50h-5.60zM375.1 273.5h5.60v5.00h-5.60z"/><path fill="#8a9fb7" d="M375.1 306.7h5.60v5.50h-5.60zM363.9 328.7h5.60v5.50h-5.60zM369.5 444.2h5.60v5.50h-5.60z"/><path fill="#879cb4" d="M335.9 312.2h5.60v5.50h-5.60zM341.5 389.2h5.60v5.50h-5.60zM347.1 576.2h5.60v5.50h-5.60zM358.3 631.2h5.60v5.50h-5.60zM330.3 653.2h5.60v5.50h-5.60z"/><path fill="#879cb1" d="M341.5 312.2h5.60v5.50h-5.60zM321.3 636.7h3.40v5.50h-3.40z"/><path fill="#96aec9" d="M358.3 312.2h5.60v5.50h-5.60zM347.1 345.2h5.60v5.50h-5.60zM330.3 350.7h5.60v5.50h-5.60zM363.9 543.2h5.60v5.50h-5.60zM352.7 576.2h5.60v5.50h-5.60zM352.7 636.7h5.60v5.50h-5.60zM347.1 653.2h5.60v5.50h-5.60zM330.3 273.5h5.60v5.00h-5.60z"/><path fill="#8499b1" d="M369.5 312.2h5.60v5.50h-5.60zM341.5 405.7h5.60v5.50h-5.60zM324.7 444.2h5.60v5.50h-5.60zM335.9 510.2h5.60v5.50h-5.60z"/><path fill="#bddbf9" d="M321.3 334.2h3.40v5.50h-3.40zM341.5 372.7h5.60v5.50h-5.60z"/><path fill="#b1cce7" d="M358.3 334.2h5.60v5.50h-5.60z"/><path fill="#b7d2f0" d="M369.5 334.2h5.60v5.50h-5.60zM375.1 334.2h5.60v5.50h-5.60zM369.5 411.2h5.60v5.50h-5.60z"/><path fill="#c0defc" d="M380.7 334.2h4.80v5.50h-4.80z"/><path fill="#99b4cf" d="M375.1 350.7h5.60v5.50h-5.60zM363.9 444.2h5.60v5.50h-5.60zM330.3 510.2h5.60v5.50h-5.60zM330.3 576.2h5.60v5.50h-5.60zM341.5 278.5h5.60v5.00h-5.60z"/><path fill="#6f8496" d="M321.3 367.2h3.40v5.50h-3.40zM321.3 653.2h3.40v5.50h-3.40z"/><path fill="#7e93a8" d="M347.1 367.2h5.60v5.50h-5.60zM375.1 427.7h5.60v5.50h-5.60zM358.3 510.2h5.60v5.50h-5.60zM347.1 614.7h5.60v5.50h-5.60z"/><path fill="#8196ab" d="M369.5 367.2h5.60v5.50h-5.60zM321.3 427.7h3.40v5.50h-3.40zM375.1 278.5h5.60v5.00h-5.60z"/><path fill="#bddbf6" d="M330.3 372.7h5.60v5.50h-5.60z"/><path fill="#7e90a5" d="M352.7 405.7h5.60v5.50h-5.60zM341.5 510.2h5.60v5.50h-5.60z"/><path fill="#bad8f3" d="M321.3 411.2h3.40v5.50h-3.40zM324.7 411.2h5.60v5.50h-5.60z"/><path fill="#b7d5f0" d="M330.3 411.2h5.60v5.50h-5.60zM375.1 411.2h5.60v5.50h-5.60z"/><path fill="#bdd8f6" d="M380.7 411.2h4.80v5.50h-4.80z"/><path fill="#7b8da2" d="M321.3 422.2h3.40v5.50h-3.40z"/><path fill="#90a5bd" d="M363.9 427.7h5.60v5.50h-5.60z"/><path fill="#8499ae" d="M352.7 444.2h5.60v5.50h-5.60zM369.5 614.7h5.60v5.50h-5.60zM347.1 631.2h5.60v5.50h-5.60zM358.3 636.7h5.60v5.50h-5.60z"/><path fill="#849cb1" d="M352.7 477.2h5.60v5.50h-5.60zM358.3 477.2h5.60v5.50h-5.60zM363.9 598.2h5.60v5.50h-5.60zM335.9 636.7h5.60v5.50h-5.60z"/><path fill="#758799" d="M321.3 510.2h3.40v5.50h-3.40z"/><path fill="#788da2" d="M347.1 510.2h5.60v5.50h-5.60zM347.1 636.7h5.60v5.50h-5.60z"/><path fill="#8199ae" d="M352.7 543.2h5.60v5.50h-5.60z"/><path fill="#788d9f" d="M363.9 614.7h5.60v5.50h-5.60z"/><path fill="#697b8d" d="M321.3 278.5h3.40v5.00h-3.40z"/><path fill="#7bb4ed" d="M393.0 334.2h3.10v5.50h-3.10zM401.7 372.7h5.55v5.50h-5.55z"/><path fill="#7eb7f3" d="M429.4 334.2h5.55v5.50h-5.55zM440.5 334.2h5.55v5.50h-5.55zM440.5 411.2h5.55v5.50h-5.55z"/><path fill="#4e759f" d="M393.0 367.2h3.10v5.50h-3.10z"/><path fill="#7bb4ea" d="M418.3 372.7h5.55v5.50h-5.55z"/><path fill="#6396c9" d="M423.9 383.7h5.55v5.50h-5.55zM418.3 422.2h5.55v5.50h-5.55zM418.3 427.7h5.55v5.50h-5.55z"/><path fill="#75abe7" d="M423.9 427.7h5.55v5.50h-5.55zM396.1 449.7h5.55v5.50h-5.55zM396.1 631.2h5.55v5.50h-5.55z"/><path fill="#51789f" d="M396.1 444.2h5.55v5.50h-5.55zM393.0 543.2h3.10v5.50h-3.10z"/><path fill="#486c90" d="M393.0 576.2h3.10v5.50h-3.10z"/><path fill="#547eab" d="M393.0 592.7h3.10v5.50h-3.10z"/></svg>
<div class="ab" style="left:1177px;top:274.3px;width:8.6px;height:10.7px;background:#6497cf"></div>
<div class="ab" style="left:1177px;top:285px;width:3px;height:4.5px;background:#76aee8"></div>
<div class="ab" style="left:1191px;top:280px;width:6px;height:9px;background:#7bb6f4"></div>
<div class="inp" style="left:54.4px;top:222.1px;width:87.2px;height:15px;border-color:#6e6e6e;border-radius:2px 2px 0 0;background:linear-gradient(#fff,#f2f2f2)"></div>
<svg class="ab" style="left:130.5px;top:227px" width="8" height="6"><path d="M1 1 L4 4 L7 1" fill="none" stroke="#000" stroke-width="1.6"/></svg>
<div class="ab" style="left:54.4px;top:237px;width:87.2px;height:41.6px;box-sizing:border-box;border:1px solid #6e6e6e;border-top-width:1.5px;background:#fff;box-shadow:0 2px 5px rgba(0,0,0,0.25)"></div>
<div class="ab" style="left:55.4px;top:251.4px;width:85.2px;height:12.6px;background:#1a66d6"></div>
<div class="ab" style="left:58.6px;top:251.6px;font-size:10.3px;color:#fff;white-space:nowrap;line-height:12px">Cocher tous</div>
<div class="ab" style="left:58.6px;top:265.4px;font-size:10.3px;color:#000;white-space:nowrap;line-height:12px">Décocher tous</div>
<svg class="ab" style="left:135.7px;top:257.9px" width="14" height="18"><path d="M0.6 0.6 L0.6 13 L3.6 10.3 L6 15.6 L8 14.8 L5.7 9.6 L9.8 9.6 Z" fill="#fff" stroke="#333" stroke-width="1" stroke-linejoin="round"/></svg>
<div class="ab" style="left:0;top:672.6px;width:1522.8px;height:3px;background:#fff"></div>
<div class="ab" style="left:827.5px;top:0;width:6.5px;height:1.2px;border-radius:1px;background:#5c3a8a"></div>
</body></html>
